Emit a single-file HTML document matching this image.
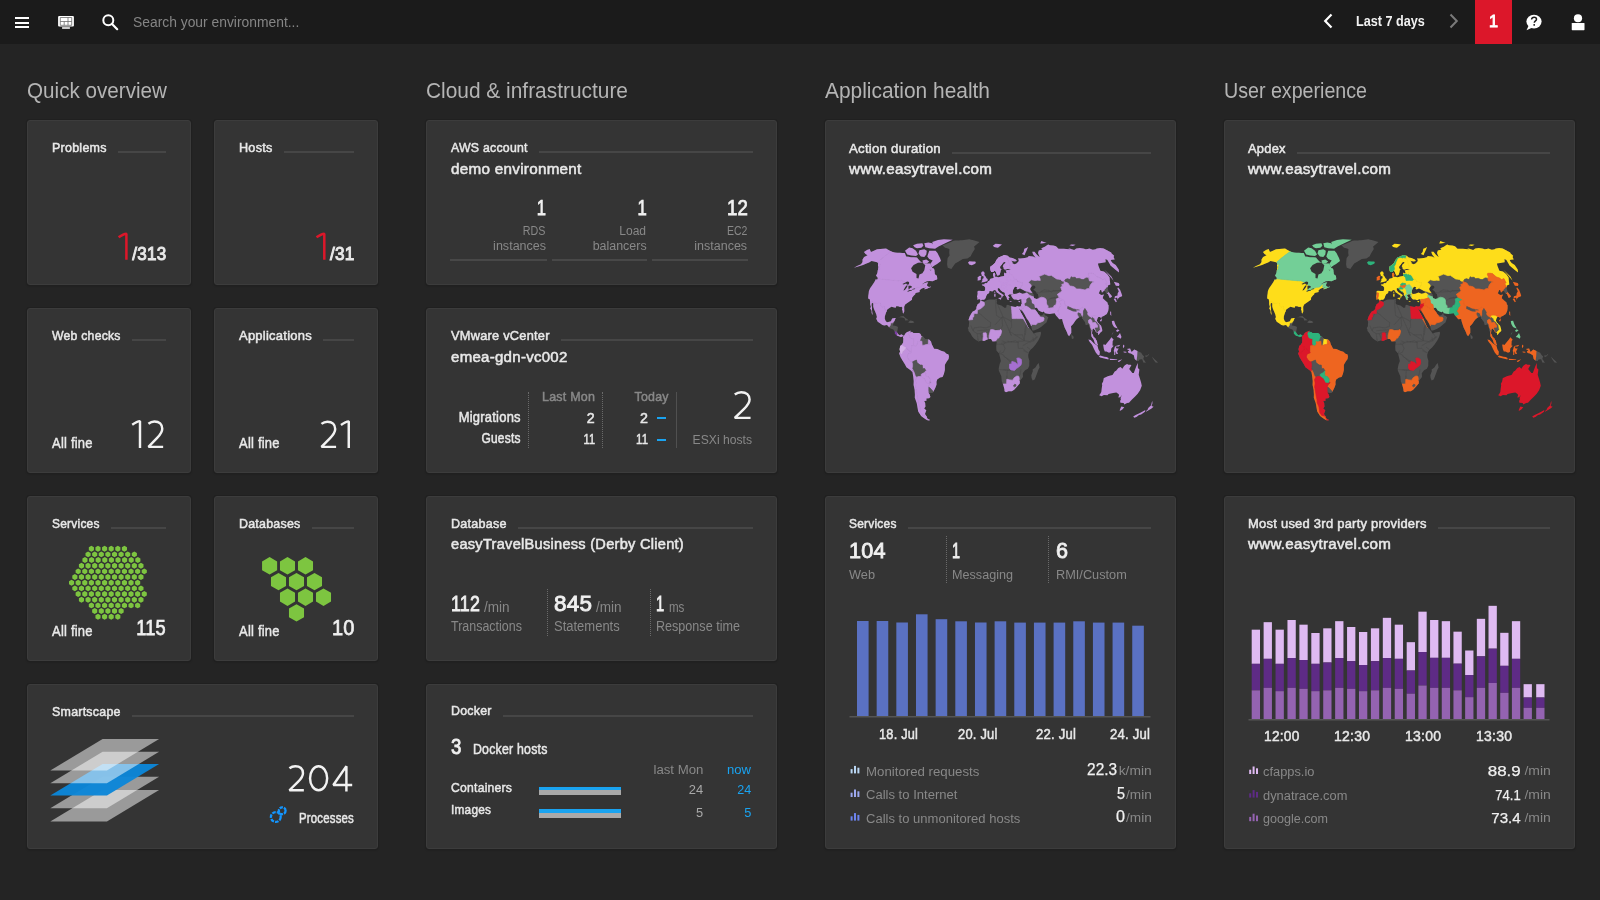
<!DOCTYPE html>
<html><head><meta charset="utf-8">
<style>
html,body{margin:0;padding:0;width:1600px;height:900px;overflow:hidden;background:#242424;}
body{position:relative;font-family:"Liberation Sans",sans-serif;}
.t{position:absolute;white-space:nowrap;}
.ab{position:absolute;}
.ln{position:absolute;}
#hdr{position:absolute;left:0;top:0;width:1600px;height:44px;background:#1b1b1b;}
.card{position:absolute;box-sizing:border-box;background:#343434;border-radius:3px;border:1px solid #3c3c3c;box-shadow:0 0 0 1px #202020, 0 1px 2px rgba(0,0,0,.3);}
</style></head><body>
<div id="hdr"></div>
<div class="ln" style="left:15px;top:17px;width:14px;height:2.2px;background:#fff"></div>
<div class="ln" style="left:15px;top:21.5px;width:14px;height:2.2px;background:#fff"></div>
<div class="ln" style="left:15px;top:26px;width:14px;height:2.2px;background:#fff"></div>
<svg class="ab" style="left:56px;top:14px" width="20" height="18" viewBox="0 0 20 18">
<rect x="2.1" y="1.9" width="15.8" height="10.6" rx="1" fill="#fff"/>
<path d="M4.3 3.5H15.7M4.3 7.5H15.7M4.3 11.3H15.7M4.3 3.5V11.3M15.7 3.5V11.3M12 3.5V11.3M8.2 7.5V11.3" stroke="#666" stroke-width="0.75" fill="none"/>
<rect x="6.1" y="13.1" width="7.8" height="1.8" fill="#ddd"/>
</svg>
<svg class="ab" style="left:100px;top:12px" width="22" height="20" viewBox="0 0 22 20">
<circle cx="8.3" cy="8.3" r="5" fill="none" stroke="#fff" stroke-width="2"/>
<path d="M11.8 11.8l5.4 5.4" stroke="#fff" stroke-width="2.2" stroke-linecap="round"/>
</svg>
<div class="t" style="top:14.70px;font-size:14.53px;line-height:14.53px;color:#858585;left:132.50px;transform:scaleX(0.9541) translateZ(0);transform-origin:0 0;">Search your environment...</div>
<svg class="ab" style="left:1318px;top:10px" width="20" height="22" viewBox="0 0 20 22">
<path d="M13.5 4.5L7.2 11l6.3 6.5" fill="none" stroke="#fff" stroke-width="2.2"/></svg>
<div class="t" style="top:13.75px;font-size:14.83px;line-height:14.83px;color:#f2f2f2;font-weight:bold;left:1356.20px;transform:scaleX(0.8531) translateZ(0);transform-origin:0 0;">Last 7 days</div>
<svg class="ab" style="left:1444px;top:10px" width="20" height="22" viewBox="0 0 20 22">
<path d="M6.5 4.5L12.8 11l-6.3 6.5" fill="none" stroke="#7a7a7a" stroke-width="2"/></svg>
<div class="ab" style="left:1475px;top:0;width:37px;height:44px;background:#dc172a"></div>
<div class="t" style="top:13.02px;font-size:16.28px;line-height:16.28px;color:#fff;letter-spacing:0.25px;left:1489.07px;transform:scaleX(1.0000) translateZ(0);transform-origin:50% 0;-webkit-text-stroke:0.85px #fff;">1</div>
<svg class="ab" style="left:1522px;top:11px" width="24" height="24" viewBox="0 0 24 24">
<ellipse cx="12" cy="10.6" rx="7.6" ry="6.8" fill="#fff"/>
<path d="M6.5 15l-2 4.3 5.5-2.6z" fill="#fff"/>
<path d="M9.6 8.6c0-1.5 1.1-2.4 2.5-2.4s2.4.9 2.4 2.1c0 1.6-2.2 1.7-2.2 3.4" fill="none" stroke="#1b1b1b" stroke-width="1.5"/>
<rect x="11.4" y="13.1" width="1.6" height="1.6" fill="#1b1b1b"/>
</svg>
<svg class="ab" style="left:1568px;top:12px" width="20" height="20" viewBox="0 0 20 20">
<circle cx="10" cy="6.25" r="4.1" fill="#fff"/>
<rect x="3.75" y="11" width="12.75" height="7.2" rx="0.6" fill="#fff"/>
</svg>
<div class="t" style="top:80.44px;font-size:21.22px;line-height:21.22px;color:#b4b4b4;left:27.00px;transform:scaleX(0.9731) translateZ(0);transform-origin:0 0;">Quick overview</div>
<div class="t" style="top:80.44px;font-size:21.22px;line-height:21.22px;color:#b4b4b4;left:426.00px;transform:scaleX(0.9843) translateZ(0);transform-origin:0 0;">Cloud &amp; infrastructure</div>
<div class="t" style="top:80.44px;font-size:21.22px;line-height:21.22px;color:#b4b4b4;left:825.00px;transform:scaleX(0.9849) translateZ(0);transform-origin:0 0;">Application health</div>
<div class="t" style="top:80.44px;font-size:21.22px;line-height:21.22px;color:#b4b4b4;left:1224.00px;transform:scaleX(0.9254) translateZ(0);transform-origin:0 0;">User experience</div>
<div class="card" style="left:27px;top:120px;width:164px;height:165px"></div>
<div class="card" style="left:214px;top:120px;width:164px;height:165px"></div>
<div class="card" style="left:27px;top:308px;width:164px;height:165px"></div>
<div class="card" style="left:214px;top:308px;width:164px;height:165px"></div>
<div class="card" style="left:27px;top:496px;width:164px;height:165px"></div>
<div class="card" style="left:214px;top:496px;width:164px;height:165px"></div>
<div class="card" style="left:27px;top:684px;width:351px;height:165px"></div>
<div class="card" style="left:426px;top:120px;width:351px;height:165px"></div>
<div class="card" style="left:426px;top:308px;width:351px;height:165px"></div>
<div class="card" style="left:426px;top:496px;width:351px;height:165px"></div>
<div class="card" style="left:426px;top:684px;width:351px;height:165px"></div>
<div class="card" style="left:825px;top:120px;width:351px;height:353px"></div>
<div class="card" style="left:825px;top:496px;width:351px;height:353px"></div>
<div class="card" style="left:1224px;top:120px;width:351px;height:353px"></div>
<div class="card" style="left:1224px;top:496px;width:351px;height:353px"></div>
<div class="t" style="top:140.93px;font-size:13.08px;line-height:13.08px;color:#e8e8e8;letter-spacing:0.25px;left:51.80px;transform:scaleX(0.9561) translateZ(0);transform-origin:0 0;-webkit-text-stroke:0.5px #e8e8e8;">Problems</div>
<div class="ln" style="left:117.8px;top:151px;width:48.2px;height:2px;background:#464646"></div>
<div class="t" style="top:140.93px;font-size:13.08px;line-height:13.08px;color:#e8e8e8;letter-spacing:0.25px;left:239.20px;transform:scaleX(0.9669) translateZ(0);transform-origin:0 0;-webkit-text-stroke:0.5px #e8e8e8;">Hosts</div>
<div class="ln" style="left:284.0px;top:151px;width:70.0px;height:2px;background:#464646"></div>
<div class="t" style="top:243.76px;font-size:19.19px;line-height:19.19px;color:#e8e8e8;letter-spacing:0.25px;left:127.71px;transform:scaleX(0.8873) translateZ(0);transform-origin:100% 0;-webkit-text-stroke:1.0px #e8e8e8;">/313</div>
<div class="t" style="top:243.76px;font-size:19.19px;line-height:19.19px;color:#e8e8e8;letter-spacing:0.25px;left:326.83px;transform:scaleX(0.8943) translateZ(0);transform-origin:100% 0;-webkit-text-stroke:1.0px #e8e8e8;">/31</div>
<div class="t" style="top:329.43px;font-size:13.08px;line-height:13.08px;color:#e8e8e8;letter-spacing:0.25px;left:51.50px;transform:scaleX(0.9350) translateZ(0);transform-origin:0 0;-webkit-text-stroke:0.5px #e8e8e8;">Web checks</div>
<div class="ln" style="left:131.5px;top:339px;width:34.5px;height:2px;background:#464646"></div>
<div class="t" style="top:329.43px;font-size:13.08px;line-height:13.08px;color:#e8e8e8;letter-spacing:0.25px;left:239.20px;transform:scaleX(0.9920) translateZ(0);transform-origin:0 0;-webkit-text-stroke:0.5px #e8e8e8;">Applications</div>
<div class="ln" style="left:323.4px;top:339px;width:30.600000000000023px;height:2px;background:#464646"></div>
<div class="t" style="top:435.08px;font-size:15.26px;line-height:15.26px;color:#e8e8e8;letter-spacing:0.25px;left:51.50px;transform:scaleX(0.8516) translateZ(0);transform-origin:0 0;-webkit-text-stroke:0.5px #e8e8e8;">All fine</div>
<div class="t" style="top:435.08px;font-size:15.26px;line-height:15.26px;color:#e8e8e8;letter-spacing:0.25px;left:239.20px;transform:scaleX(0.8516) translateZ(0);transform-origin:0 0;-webkit-text-stroke:0.5px #e8e8e8;">All fine</div>
<div class="t" style="top:516.93px;font-size:13.08px;line-height:13.08px;color:#e8e8e8;letter-spacing:0.25px;left:51.50px;transform:scaleX(0.9150) translateZ(0);transform-origin:0 0;-webkit-text-stroke:0.5px #e8e8e8;">Services</div>
<div class="ln" style="left:110.5px;top:527px;width:55.5px;height:2px;background:#464646"></div>
<div class="t" style="top:516.93px;font-size:13.08px;line-height:13.08px;color:#e8e8e8;letter-spacing:0.25px;left:239.20px;transform:scaleX(0.9498) translateZ(0);transform-origin:0 0;-webkit-text-stroke:0.5px #e8e8e8;">Databases</div>
<div class="ln" style="left:312.0px;top:527px;width:42.0px;height:2px;background:#464646"></div>
<div class="t" style="top:622.58px;font-size:15.26px;line-height:15.26px;color:#e8e8e8;letter-spacing:0.25px;left:51.50px;transform:scaleX(0.8516) translateZ(0);transform-origin:0 0;-webkit-text-stroke:0.5px #e8e8e8;">All fine</div>
<div class="t" style="top:622.58px;font-size:15.26px;line-height:15.26px;color:#e8e8e8;letter-spacing:0.25px;left:239.20px;transform:scaleX(0.8516) translateZ(0);transform-origin:0 0;-webkit-text-stroke:0.5px #e8e8e8;">All fine</div>
<div class="t" style="top:616.31px;font-size:22.67px;line-height:22.67px;color:#f0f0f0;letter-spacing:0.25px;left:129.35px;transform:scaleX(0.8049) translateZ(0);transform-origin:100% 0;-webkit-text-stroke:0.75px #f0f0f0;">115</div>
<div class="t" style="top:616.31px;font-size:22.67px;line-height:22.67px;color:#f0f0f0;letter-spacing:0.25px;left:328.53px;transform:scaleX(0.8833) translateZ(0);transform-origin:100% 0;-webkit-text-stroke:0.75px #f0f0f0;">10</div>
<svg class="ab" style="left:0;top:0" width="400" height="900"><path d="M91.38 545.75L88.83 547.23L88.83 550.18L91.38 551.65L93.94 550.18L93.94 547.23ZM97.99 545.75L95.44 547.23L95.44 550.18L97.99 551.65L100.55 550.18L100.55 547.23ZM104.60 545.75L102.05 547.23L102.05 550.18L104.60 551.65L107.16 550.18L107.16 547.23ZM111.21 545.75L108.66 547.23L108.66 550.18L111.21 551.65L113.77 550.18L113.77 547.23ZM117.82 545.75L115.27 547.23L115.27 550.18L117.82 551.65L120.38 550.18L120.38 547.23ZM124.43 545.75L121.88 547.23L121.88 550.18L124.43 551.65L126.99 550.18L126.99 547.23ZM88.08 551.42L85.52 552.89L85.52 555.85L88.08 557.32L90.63 555.85L90.63 552.89ZM94.69 551.42L92.13 552.89L92.13 555.85L94.69 557.32L97.24 555.85L97.24 552.89ZM101.30 551.42L98.74 552.89L98.74 555.85L101.30 557.32L103.85 555.85L103.85 552.89ZM107.91 551.42L105.35 552.89L105.35 555.85L107.91 557.32L110.46 555.85L110.46 552.89ZM114.52 551.42L111.96 552.89L111.96 555.85L114.52 557.32L117.07 555.85L117.07 552.89ZM121.13 551.42L118.57 552.89L118.57 555.85L121.13 557.32L123.68 555.85L123.68 552.89ZM127.74 551.42L125.18 552.89L125.18 555.85L127.74 557.32L130.29 555.85L130.29 552.89ZM134.35 551.42L131.79 552.89L131.79 555.85L134.35 557.32L136.90 555.85L136.90 552.89ZM84.96 557.09L82.41 558.57L82.41 561.52L84.96 562.99L87.52 561.52L87.52 558.57ZM91.57 557.09L89.02 558.57L89.02 561.52L91.57 562.99L94.13 561.52L94.13 558.57ZM98.18 557.09L95.63 558.57L95.63 561.52L98.18 562.99L100.74 561.52L100.74 558.57ZM104.79 557.09L102.24 558.57L102.24 561.52L104.79 562.99L107.35 561.52L107.35 558.57ZM111.40 557.09L108.85 558.57L108.85 561.52L111.40 562.99L113.96 561.52L113.96 558.57ZM118.01 557.09L115.46 558.57L115.46 561.52L118.01 562.99L120.57 561.52L120.57 558.57ZM124.62 557.09L122.07 558.57L122.07 561.52L124.62 562.99L127.18 561.52L127.18 558.57ZM131.23 557.09L128.68 558.57L128.68 561.52L131.23 562.99L133.79 561.52L133.79 558.57ZM137.84 557.09L135.29 558.57L135.29 561.52L137.84 562.99L140.40 561.52L140.40 558.57ZM81.47 562.76L78.91 564.24L78.91 567.19L81.47 568.66L84.02 567.19L84.02 564.24ZM88.08 562.76L85.52 564.24L85.52 567.19L88.08 568.66L90.63 567.19L90.63 564.24ZM94.69 562.76L92.13 564.24L92.13 567.19L94.69 568.66L97.24 567.19L97.24 564.24ZM101.30 562.76L98.74 564.24L98.74 567.19L101.30 568.66L103.85 567.19L103.85 564.24ZM107.91 562.76L105.35 564.24L105.35 567.19L107.91 568.66L110.46 567.19L110.46 564.24ZM114.52 562.76L111.96 564.24L111.96 567.19L114.52 568.66L117.07 567.19L117.07 564.24ZM121.13 562.76L118.57 564.24L118.57 567.19L121.13 568.66L123.68 567.19L123.68 564.24ZM127.74 562.76L125.18 564.24L125.18 567.19L127.74 568.66L130.29 567.19L130.29 564.24ZM134.35 562.76L131.79 564.24L131.79 567.19L134.35 568.66L136.90 567.19L136.90 564.24ZM140.96 562.76L138.40 564.24L138.40 567.19L140.96 568.66L143.51 567.19L143.51 564.24ZM78.16 568.43L75.61 569.90L75.61 572.86L78.16 574.33L80.72 572.86L80.72 569.90ZM84.77 568.43L82.22 569.90L82.22 572.86L84.77 574.33L87.33 572.86L87.33 569.90ZM91.38 568.43L88.83 569.90L88.83 572.86L91.38 574.33L93.94 572.86L93.94 569.90ZM97.99 568.43L95.44 569.90L95.44 572.86L97.99 574.33L100.55 572.86L100.55 569.90ZM104.60 568.43L102.05 569.90L102.05 572.86L104.60 574.33L107.16 572.86L107.16 569.90ZM111.21 568.43L108.66 569.90L108.66 572.86L111.21 574.33L113.77 572.86L113.77 569.90ZM117.82 568.43L115.27 569.90L115.27 572.86L117.82 574.33L120.38 572.86L120.38 569.90ZM124.43 568.43L121.88 569.90L121.88 572.86L124.43 574.33L126.99 572.86L126.99 569.90ZM131.04 568.43L128.49 569.90L128.49 572.86L131.04 574.33L133.60 572.86L133.60 569.90ZM137.65 568.43L135.10 569.90L135.10 572.86L137.65 574.33L140.21 572.86L140.21 569.90ZM144.26 568.43L141.71 569.90L141.71 572.86L144.26 574.33L146.82 572.86L146.82 569.90ZM74.86 574.10L72.30 575.58L72.30 578.53L74.86 580.00L77.41 578.53L77.41 575.58ZM81.47 574.10L78.91 575.58L78.91 578.53L81.47 580.00L84.02 578.53L84.02 575.58ZM88.08 574.10L85.52 575.58L85.52 578.53L88.08 580.00L90.63 578.53L90.63 575.58ZM94.69 574.10L92.13 575.58L92.13 578.53L94.69 580.00L97.24 578.53L97.24 575.58ZM101.30 574.10L98.74 575.58L98.74 578.53L101.30 580.00L103.85 578.53L103.85 575.58ZM107.91 574.10L105.35 575.58L105.35 578.53L107.91 580.00L110.46 578.53L110.46 575.58ZM114.52 574.10L111.96 575.58L111.96 578.53L114.52 580.00L117.07 578.53L117.07 575.58ZM121.13 574.10L118.57 575.58L118.57 578.53L121.13 580.00L123.68 578.53L123.68 575.58ZM127.74 574.10L125.18 575.58L125.18 578.53L127.74 580.00L130.29 578.53L130.29 575.58ZM134.35 574.10L131.79 575.58L131.79 578.53L134.35 580.00L136.90 578.53L136.90 575.58ZM140.96 574.10L138.40 575.58L138.40 578.53L140.96 580.00L143.51 578.53L143.51 575.58ZM71.55 579.77L69.00 581.25L69.00 584.20L71.55 585.67L74.11 584.20L74.11 581.25ZM78.16 579.77L75.61 581.25L75.61 584.20L78.16 585.67L80.72 584.20L80.72 581.25ZM84.77 579.77L82.22 581.25L82.22 584.20L84.77 585.67L87.33 584.20L87.33 581.25ZM91.38 579.77L88.83 581.25L88.83 584.20L91.38 585.67L93.94 584.20L93.94 581.25ZM97.99 579.77L95.44 581.25L95.44 584.20L97.99 585.67L100.55 584.20L100.55 581.25ZM104.60 579.77L102.05 581.25L102.05 584.20L104.60 585.67L107.16 584.20L107.16 581.25ZM111.21 579.77L108.66 581.25L108.66 584.20L111.21 585.67L113.77 584.20L113.77 581.25ZM117.82 579.77L115.27 581.25L115.27 584.20L117.82 585.67L120.38 584.20L120.38 581.25ZM124.43 579.77L121.88 581.25L121.88 584.20L124.43 585.67L126.99 584.20L126.99 581.25ZM131.04 579.77L128.49 581.25L128.49 584.20L131.04 585.67L133.60 584.20L133.60 581.25ZM137.65 579.77L135.10 581.25L135.10 584.20L137.65 585.67L140.21 584.20L140.21 581.25ZM74.86 585.44L72.30 586.92L72.30 589.87L74.86 591.34L77.41 589.87L77.41 586.92ZM81.47 585.44L78.91 586.92L78.91 589.87L81.47 591.34L84.02 589.87L84.02 586.92ZM88.08 585.44L85.52 586.92L85.52 589.87L88.08 591.34L90.63 589.87L90.63 586.92ZM94.69 585.44L92.13 586.92L92.13 589.87L94.69 591.34L97.24 589.87L97.24 586.92ZM101.30 585.44L98.74 586.92L98.74 589.87L101.30 591.34L103.85 589.87L103.85 586.92ZM107.91 585.44L105.35 586.92L105.35 589.87L107.91 591.34L110.46 589.87L110.46 586.92ZM114.52 585.44L111.96 586.92L111.96 589.87L114.52 591.34L117.07 589.87L117.07 586.92ZM121.13 585.44L118.57 586.92L118.57 589.87L121.13 591.34L123.68 589.87L123.68 586.92ZM127.74 585.44L125.18 586.92L125.18 589.87L127.74 591.34L130.29 589.87L130.29 586.92ZM134.35 585.44L131.79 586.92L131.79 589.87L134.35 591.34L136.90 589.87L136.90 586.92ZM140.96 585.44L138.40 586.92L138.40 589.87L140.96 591.34L143.51 589.87L143.51 586.92ZM78.16 591.11L75.61 592.59L75.61 595.54L78.16 597.01L80.72 595.54L80.72 592.59ZM84.77 591.11L82.22 592.59L82.22 595.54L84.77 597.01L87.33 595.54L87.33 592.59ZM91.38 591.11L88.83 592.59L88.83 595.54L91.38 597.01L93.94 595.54L93.94 592.59ZM97.99 591.11L95.44 592.59L95.44 595.54L97.99 597.01L100.55 595.54L100.55 592.59ZM104.60 591.11L102.05 592.59L102.05 595.54L104.60 597.01L107.16 595.54L107.16 592.59ZM111.21 591.11L108.66 592.59L108.66 595.54L111.21 597.01L113.77 595.54L113.77 592.59ZM117.82 591.11L115.27 592.59L115.27 595.54L117.82 597.01L120.38 595.54L120.38 592.59ZM124.43 591.11L121.88 592.59L121.88 595.54L124.43 597.01L126.99 595.54L126.99 592.59ZM131.04 591.11L128.49 592.59L128.49 595.54L131.04 597.01L133.60 595.54L133.60 592.59ZM137.65 591.11L135.10 592.59L135.10 595.54L137.65 597.01L140.21 595.54L140.21 592.59ZM144.26 591.11L141.71 592.59L141.71 595.54L144.26 597.01L146.82 595.54L146.82 592.59ZM81.47 596.78L78.91 598.25L78.91 601.21L81.47 602.68L84.02 601.21L84.02 598.25ZM88.08 596.78L85.52 598.25L85.52 601.21L88.08 602.68L90.63 601.21L90.63 598.25ZM94.69 596.78L92.13 598.25L92.13 601.21L94.69 602.68L97.24 601.21L97.24 598.25ZM101.30 596.78L98.74 598.25L98.74 601.21L101.30 602.68L103.85 601.21L103.85 598.25ZM107.91 596.78L105.35 598.25L105.35 601.21L107.91 602.68L110.46 601.21L110.46 598.25ZM114.52 596.78L111.96 598.25L111.96 601.21L114.52 602.68L117.07 601.21L117.07 598.25ZM121.13 596.78L118.57 598.25L118.57 601.21L121.13 602.68L123.68 601.21L123.68 598.25ZM127.74 596.78L125.18 598.25L125.18 601.21L127.74 602.68L130.29 601.21L130.29 598.25ZM134.35 596.78L131.79 598.25L131.79 601.21L134.35 602.68L136.90 601.21L136.90 598.25ZM140.96 596.78L138.40 598.25L138.40 601.21L140.96 602.68L143.51 601.21L143.51 598.25ZM91.38 602.45L88.83 603.93L88.83 606.88L91.38 608.35L93.94 606.88L93.94 603.93ZM97.99 602.45L95.44 603.93L95.44 606.88L97.99 608.35L100.55 606.88L100.55 603.93ZM104.60 602.45L102.05 603.93L102.05 606.88L104.60 608.35L107.16 606.88L107.16 603.93ZM111.21 602.45L108.66 603.93L108.66 606.88L111.21 608.35L113.77 606.88L113.77 603.93ZM117.82 602.45L115.27 603.93L115.27 606.88L117.82 608.35L120.38 606.88L120.38 603.93ZM124.43 602.45L121.88 603.93L121.88 606.88L124.43 608.35L126.99 606.88L126.99 603.93ZM131.04 602.45L128.49 603.93L128.49 606.88L131.04 608.35L133.60 606.88L133.60 603.93ZM137.65 602.45L135.10 603.93L135.10 606.88L137.65 608.35L140.21 606.88L140.21 603.93ZM94.69 608.12L92.13 609.60L92.13 612.55L94.69 614.02L97.24 612.55L97.24 609.60ZM101.30 608.12L98.74 609.60L98.74 612.55L101.30 614.02L103.85 612.55L103.85 609.60ZM107.91 608.12L105.35 609.60L105.35 612.55L107.91 614.02L110.46 612.55L110.46 609.60ZM114.52 608.12L111.96 609.60L111.96 612.55L114.52 614.02L117.07 612.55L117.07 609.60ZM121.13 608.12L118.57 609.60L118.57 612.55L121.13 614.02L123.68 612.55L123.68 609.60ZM97.99 613.79L95.44 615.26L95.44 618.22L97.99 619.69L100.55 618.22L100.55 615.26ZM104.60 613.79L102.05 615.26L102.05 618.22L104.60 619.69L107.16 618.22L107.16 615.26ZM111.21 613.79L108.66 615.26L108.66 618.22L111.21 619.69L113.77 618.22L113.77 615.26ZM117.82 613.79L115.27 615.26L115.27 618.22L117.82 619.69L120.38 618.22L120.38 615.26Z" fill="#7dc540"/></svg>
<svg class="ab" style="left:0;top:0" width="400" height="900"><path d="M269.60 557.10L262.07 561.45L262.07 570.15L269.60 574.50L277.13 570.15L277.13 561.45ZM287.50 557.10L279.97 561.45L279.97 570.15L287.50 574.50L295.03 570.15L295.03 561.45ZM305.50 557.10L297.97 561.45L297.97 570.15L305.50 574.50L313.03 570.15L313.03 561.45ZM278.50 572.90L270.97 577.25L270.97 585.95L278.50 590.30L286.03 585.95L286.03 577.25ZM296.50 572.90L288.97 577.25L288.97 585.95L296.50 590.30L304.03 585.95L304.03 577.25ZM314.50 572.90L306.97 577.25L306.97 585.95L314.50 590.30L322.03 585.95L322.03 577.25ZM287.50 588.50L279.97 592.85L279.97 601.55L287.50 605.90L295.03 601.55L295.03 592.85ZM305.50 588.50L297.97 592.85L297.97 601.55L305.50 605.90L313.03 601.55L313.03 592.85ZM323.50 588.50L315.97 592.85L315.97 601.55L323.50 605.90L331.03 601.55L331.03 592.85ZM296.50 604.20L288.97 608.55L288.97 617.25L296.50 621.60L304.03 617.25L304.03 608.55Z" fill="#7dc540"/></svg>
<div class="t" style="top:704.93px;font-size:13.08px;line-height:13.08px;color:#e8e8e8;letter-spacing:0.25px;left:51.50px;transform:scaleX(0.9508) translateZ(0);transform-origin:0 0;-webkit-text-stroke:0.5px #e8e8e8;">Smartscape</div>
<div class="ln" style="left:131.5px;top:715px;width:222.5px;height:2px;background:#464646"></div>
<svg class="ab" style="left:0;top:0" width="400" height="900"><path d="M102.6 790.10L159.1 790.10L106.9 821.60L50.3 821.60Z" fill="#fff" fill-opacity=".5"/><path d="M102.6 776.80L159.1 776.80L106.9 808.30L50.3 808.30Z" fill="#fff" fill-opacity=".5"/><path d="M102.6 764.00L159.1 764.00L106.9 795.50L50.3 795.50Z" fill="#0b86d8" fill-opacity=".96"/><path d="M102.6 751.70L159.1 751.70L106.9 783.20L50.3 783.20Z" fill="#fff" fill-opacity=".5"/><path d="M102.6 738.90L159.1 738.90L106.9 770.40L50.3 770.40Z" fill="#fff" fill-opacity=".5"/></svg>
<svg class="ab" style="left:262px;top:800px" width="30" height="30" viewBox="262 800 30 30"><circle cx="275.8" cy="817" r="4.9" fill="none" stroke="#1496ff" stroke-width="2.3" stroke-dasharray="3.6 1.1"/><circle cx="282.2" cy="810.8" r="3.4" fill="none" stroke="#1496ff" stroke-width="2.3" stroke-dasharray="3.3 1.05"/></svg>
<div class="t" style="top:810.70px;font-size:14.53px;line-height:14.53px;color:#e8e8e8;letter-spacing:0.25px;left:284.14px;transform:scaleX(0.7873) translateZ(0);transform-origin:100% 0;-webkit-text-stroke:0.5px #e8e8e8;">Processes</div>
<div class="t" style="top:140.93px;font-size:13.08px;line-height:13.08px;color:#e8e8e8;letter-spacing:0.25px;left:450.50px;transform:scaleX(0.9414) translateZ(0);transform-origin:0 0;-webkit-text-stroke:0.5px #e8e8e8;">AWS account</div>
<div class="ln" style="left:538.5px;top:151px;width:214.5px;height:2px;background:#464646"></div>
<div class="t" style="top:162.69px;font-size:13.95px;line-height:13.95px;color:#e8e8e8;letter-spacing:0.25px;left:450.50px;transform:scaleX(1.0937) translateZ(0);transform-origin:0 0;-webkit-text-stroke:0.5px #e8e8e8;">demo environment</div>
<div class="t" style="top:196.94px;font-size:21.22px;line-height:21.22px;color:#f0f0f0;letter-spacing:0.25px;left:534.20px;transform:scaleX(0.7795) translateZ(0);transform-origin:100% 0;-webkit-text-stroke:0.75px #f0f0f0;">1</div>
<div class="t" style="top:223.76px;font-size:13.52px;line-height:13.52px;color:#888888;left:517.46px;transform:scaleX(0.7954) translateZ(0);transform-origin:100% 0;">RDS</div>
<div class="t" style="top:239.46px;font-size:13.52px;line-height:13.52px;color:#888888;left:488.89px;transform:scaleX(0.9281) translateZ(0);transform-origin:100% 0;">instances</div>
<div class="t" style="top:196.94px;font-size:21.22px;line-height:21.22px;color:#f0f0f0;letter-spacing:0.25px;left:634.70px;transform:scaleX(0.7880) translateZ(0);transform-origin:100% 0;-webkit-text-stroke:0.75px #f0f0f0;">1</div>
<div class="t" style="top:223.76px;font-size:13.52px;line-height:13.52px;color:#888888;left:616.43px;transform:scaleX(0.8912) translateZ(0);transform-origin:100% 0;">Load</div>
<div class="t" style="top:239.46px;font-size:13.52px;line-height:13.52px;color:#888888;left:587.89px;transform:scaleX(0.9196) translateZ(0);transform-origin:100% 0;">balancers</div>
<div class="t" style="top:196.94px;font-size:21.22px;line-height:21.22px;color:#f0f0f0;letter-spacing:0.25px;left:723.65px;transform:scaleX(0.8803) translateZ(0);transform-origin:100% 0;-webkit-text-stroke:0.75px #f0f0f0;">12</div>
<div class="t" style="top:223.76px;font-size:13.52px;line-height:13.52px;color:#888888;left:721.20px;transform:scaleX(0.7758) translateZ(0);transform-origin:100% 0;">EC2</div>
<div class="t" style="top:239.46px;font-size:13.52px;line-height:13.52px;color:#888888;left:690.39px;transform:scaleX(0.9246) translateZ(0);transform-origin:100% 0;">instances</div>
<div class="ln" style="left:450px;top:258.5px;width:96.5px;height:2px;background:#484848"></div>
<div class="ln" style="left:551.5px;top:258.5px;width:95.5px;height:2px;background:#484848"></div>
<div class="ln" style="left:652px;top:258.5px;width:96px;height:2px;background:#484848"></div>
<div class="t" style="top:329.43px;font-size:13.08px;line-height:13.08px;color:#e8e8e8;letter-spacing:0.25px;left:450.50px;transform:scaleX(0.9785) translateZ(0);transform-origin:0 0;-webkit-text-stroke:0.5px #e8e8e8;">VMware vCenter</div>
<div class="ln" style="left:560.5px;top:339px;width:192.5px;height:2px;background:#464646"></div>
<div class="t" style="top:351.19px;font-size:13.95px;line-height:13.95px;color:#e8e8e8;letter-spacing:0.25px;left:450.50px;transform:scaleX(1.0790) translateZ(0);transform-origin:0 0;-webkit-text-stroke:0.5px #e8e8e8;">emea-gdn-vc002</div>
<div class="t" style="top:390.43px;font-size:13.66px;line-height:13.66px;color:#888888;letter-spacing:0.25px;left:536.65px;transform:scaleX(0.9146) translateZ(0);transform-origin:100% 0;-webkit-text-stroke:0.5px #888888;">Last Mon</div>
<div class="t" style="top:390.43px;font-size:13.66px;line-height:13.66px;color:#888888;letter-spacing:0.25px;left:631.14px;transform:scaleX(0.9077) translateZ(0);transform-origin:100% 0;-webkit-text-stroke:0.5px #888888;">Today</div>
<div class="t" style="top:410.79px;font-size:13.95px;line-height:13.95px;color:#e8e8e8;letter-spacing:0.25px;left:453.98px;transform:scaleX(0.9307) translateZ(0);transform-origin:100% 0;-webkit-text-stroke:0.5px #e8e8e8;">Migrations</div>
<div class="t" style="top:432.19px;font-size:13.95px;line-height:13.95px;color:#e8e8e8;letter-spacing:0.25px;left:475.15px;transform:scaleX(0.8580) translateZ(0);transform-origin:100% 0;-webkit-text-stroke:0.5px #e8e8e8;">Guests</div>
<div class="t" style="top:410.54px;font-size:14.24px;line-height:14.24px;color:#e8e8e8;letter-spacing:0.25px;left:586.68px;transform:scaleX(1.0000) translateZ(0);transform-origin:100% 0;-webkit-text-stroke:0.5px #e8e8e8;">2</div>
<div class="t" style="top:431.94px;font-size:14.24px;line-height:14.24px;color:#e8e8e8;letter-spacing:0.25px;left:579.56px;transform:scaleX(0.7714) translateZ(0);transform-origin:100% 0;-webkit-text-stroke:0.5px #e8e8e8;">11</div>
<div class="t" style="top:410.54px;font-size:14.24px;line-height:14.24px;color:#e8e8e8;letter-spacing:0.25px;left:640.08px;transform:scaleX(1.0000) translateZ(0);transform-origin:100% 0;-webkit-text-stroke:0.5px #e8e8e8;">2</div>
<div class="t" style="top:431.94px;font-size:14.24px;line-height:14.24px;color:#e8e8e8;letter-spacing:0.25px;left:632.96px;transform:scaleX(0.7980) translateZ(0);transform-origin:100% 0;-webkit-text-stroke:0.5px #e8e8e8;">11</div>
<div class="ln" style="left:656.5px;top:417px;width:9px;height:2px;background:#1aa3f0"></div>
<div class="ln" style="left:656.5px;top:438.5px;width:9px;height:2px;background:#1aa3f0"></div>
<div class="ln" style="left:527.5px;top:392px;width:0;height:56px;border-left:1px dotted #6a6a6a"></div>
<div class="ln" style="left:601.5px;top:392px;width:0;height:56px;border-left:1px dotted #6a6a6a"></div>
<div class="ln" style="left:676px;top:392px;width:1px;height:56px;background:#505050"></div>
<div class="t" style="top:432.93px;font-size:13.08px;line-height:13.08px;color:#888888;left:688.42px;transform:scaleX(0.9284) translateZ(0);transform-origin:100% 0;">ESXi hosts</div>
<div class="t" style="top:516.93px;font-size:13.08px;line-height:13.08px;color:#e8e8e8;letter-spacing:0.25px;left:450.50px;transform:scaleX(0.9610) translateZ(0);transform-origin:0 0;-webkit-text-stroke:0.5px #e8e8e8;">Database</div>
<div class="ln" style="left:517.5px;top:527px;width:235.5px;height:2px;background:#464646"></div>
<div class="t" style="top:538.19px;font-size:13.95px;line-height:13.95px;color:#e8e8e8;letter-spacing:0.25px;left:450.50px;transform:scaleX(1.0482) translateZ(0);transform-origin:0 0;-webkit-text-stroke:0.5px #e8e8e8;">easyTravelBusiness (Derby Client)</div>
<div class="t" style="top:593.30px;font-size:22.09px;line-height:22.09px;color:#f0f0f0;letter-spacing:0.25px;left:450.60px;transform:scaleX(0.8062) translateZ(0);transform-origin:0 0;-webkit-text-stroke:0.85px #f0f0f0;">112</div>
<div class="t" style="top:599.20px;font-size:15.12px;line-height:15.12px;color:#888888;left:484.40px;transform:scaleX(0.8964) translateZ(0);transform-origin:0 0;">/min</div>
<div class="t" style="top:620.19px;font-size:13.95px;line-height:13.95px;color:#888888;left:450.60px;transform:scaleX(0.8946) translateZ(0);transform-origin:0 0;">Transactions</div>
<div class="t" style="top:593.30px;font-size:22.09px;line-height:22.09px;color:#f0f0f0;letter-spacing:0.25px;left:553.60px;transform:scaleX(1.0171) translateZ(0);transform-origin:0 0;-webkit-text-stroke:0.85px #f0f0f0;">845</div>
<div class="t" style="top:599.20px;font-size:15.12px;line-height:15.12px;color:#888888;left:596.40px;transform:scaleX(0.8964) translateZ(0);transform-origin:0 0;">/min</div>
<div class="t" style="top:620.19px;font-size:13.95px;line-height:13.95px;color:#888888;left:553.60px;transform:scaleX(0.9323) translateZ(0);transform-origin:0 0;">Statements</div>
<div class="t" style="top:593.30px;font-size:22.09px;line-height:22.09px;color:#f0f0f0;letter-spacing:0.25px;left:656.40px;transform:scaleX(0.6673) translateZ(0);transform-origin:0 0;-webkit-text-stroke:0.85px #f0f0f0;">1</div>
<div class="t" style="top:599.20px;font-size:15.12px;line-height:15.12px;color:#888888;left:668.60px;transform:scaleX(0.7642) translateZ(0);transform-origin:0 0;">ms</div>
<div class="t" style="top:620.19px;font-size:13.95px;line-height:13.95px;color:#888888;left:656.40px;transform:scaleX(0.9025) translateZ(0);transform-origin:0 0;">Response time</div>
<div class="ln" style="left:547px;top:589px;width:0;height:47px;border-left:1px dotted #6a6a6a"></div>
<div class="ln" style="left:649.5px;top:589px;width:0;height:47px;border-left:1px dotted #6a6a6a"></div>
<div class="t" style="top:704.43px;font-size:13.08px;line-height:13.08px;color:#e8e8e8;letter-spacing:0.25px;left:450.50px;transform:scaleX(0.9488) translateZ(0);transform-origin:0 0;-webkit-text-stroke:0.5px #e8e8e8;">Docker</div>
<div class="ln" style="left:502.5px;top:715px;width:250.5px;height:2px;background:#464646"></div>
<div class="t" style="top:735.41px;font-size:22.67px;line-height:22.67px;color:#f0f0f0;letter-spacing:0.25px;left:450.60px;transform:scaleX(0.8247) translateZ(0);transform-origin:0 0;-webkit-text-stroke:0.85px #f0f0f0;">3</div>
<div class="t" style="top:742.79px;font-size:13.95px;line-height:13.95px;color:#e8e8e8;letter-spacing:0.25px;left:472.60px;transform:scaleX(0.8839) translateZ(0);transform-origin:0 0;-webkit-text-stroke:0.5px #e8e8e8;">Docker hosts</div>
<div class="t" style="top:763.33px;font-size:13.08px;line-height:13.08px;color:#888888;left:653.56px;transform:scaleX(1.0113) translateZ(0);transform-origin:100% 0;">last Mon</div>
<div class="t" style="top:763.33px;font-size:13.08px;line-height:13.08px;color:#1aa3f0;left:727.40px;transform:scaleX(1.0001) translateZ(0);transform-origin:100% 0;">now</div>
<div class="t" style="top:780.83px;font-size:13.66px;line-height:13.66px;color:#e8e8e8;letter-spacing:0.25px;left:450.60px;transform:scaleX(0.8928) translateZ(0);transform-origin:0 0;-webkit-text-stroke:0.5px #e8e8e8;">Containers</div>
<div class="t" style="top:802.83px;font-size:13.66px;line-height:13.66px;color:#e8e8e8;letter-spacing:0.25px;left:450.60px;transform:scaleX(0.8685) translateZ(0);transform-origin:0 0;-webkit-text-stroke:0.5px #e8e8e8;">Images</div>
<div class="ln" style="left:539px;top:786.5px;width:81.5px;height:3.5px;background:#1aa3f0"></div>
<div class="ln" style="left:539px;top:790px;width:81.5px;height:5px;background:#a9a9a9"></div>
<div class="ln" style="left:539px;top:809px;width:81.5px;height:3.5px;background:#1aa3f0"></div>
<div class="ln" style="left:539px;top:812.5px;width:81.5px;height:5px;background:#a9a9a9"></div>
<div class="t" style="top:784.17px;font-size:12.79px;line-height:12.79px;color:#a8a8a8;left:688.77px;transform:scaleX(1.0121) translateZ(0);transform-origin:100% 0;">24</div>
<div class="t" style="top:784.17px;font-size:12.79px;line-height:12.79px;color:#1aa3f0;left:737.17px;transform:scaleX(0.9840) translateZ(0);transform-origin:100% 0;">24</div>
<div class="t" style="top:806.57px;font-size:12.79px;line-height:12.79px;color:#a8a8a8;left:695.89px;transform:scaleX(1.0000) translateZ(0);transform-origin:100% 0;">5</div>
<div class="t" style="top:806.57px;font-size:12.79px;line-height:12.79px;color:#1aa3f0;left:744.29px;transform:scaleX(1.0000) translateZ(0);transform-origin:100% 0;">5</div>
<div class="t" style="top:141.53px;font-size:13.08px;line-height:13.08px;color:#e8e8e8;letter-spacing:0.25px;left:849.00px;transform:scaleX(1.0092) translateZ(0);transform-origin:0 0;-webkit-text-stroke:0.5px #e8e8e8;">Action duration</div>
<div class="ln" style="left:952.1px;top:152px;width:199.30000000000007px;height:2px;background:#464646"></div>
<div class="t" style="top:162.79px;font-size:13.95px;line-height:13.95px;color:#e8e8e8;letter-spacing:0.25px;left:849.00px;transform:scaleX(1.0881) translateZ(0);transform-origin:0 0;-webkit-text-stroke:0.5px #e8e8e8;">www.easytravel.com</div>
<div class="t" style="top:141.53px;font-size:13.08px;line-height:13.08px;color:#e8e8e8;letter-spacing:0.25px;left:1248.00px;transform:scaleX(0.9844) translateZ(0);transform-origin:0 0;-webkit-text-stroke:0.5px #e8e8e8;">Apdex</div>
<div class="ln" style="left:1297.0px;top:152px;width:253.0px;height:2px;background:#464646"></div>
<div class="t" style="top:162.79px;font-size:13.95px;line-height:13.95px;color:#e8e8e8;letter-spacing:0.25px;left:1248.00px;transform:scaleX(1.0881) translateZ(0);transform-origin:0 0;-webkit-text-stroke:0.5px #e8e8e8;">www.easytravel.com</div>
<div class="t" style="top:516.93px;font-size:13.08px;line-height:13.08px;color:#e8e8e8;letter-spacing:0.25px;left:849.00px;transform:scaleX(0.9131) translateZ(0);transform-origin:0 0;-webkit-text-stroke:0.5px #e8e8e8;">Services</div>
<div class="ln" style="left:907.9px;top:527px;width:243.5000000000001px;height:2px;background:#464646"></div>
<div class="t" style="top:540.79px;font-size:21.51px;line-height:21.51px;color:#f0f0f0;letter-spacing:0.25px;left:849.00px;transform:scaleX(1.0057) translateZ(0);transform-origin:0 0;-webkit-text-stroke:0.85px #f0f0f0;">104</div>
<div class="t" style="top:567.93px;font-size:13.08px;line-height:13.08px;color:#888888;left:849.00px;transform:scaleX(0.9752) translateZ(0);transform-origin:0 0;">Web</div>
<div class="t" style="top:540.79px;font-size:21.51px;line-height:21.51px;color:#f0f0f0;letter-spacing:0.25px;left:952.00px;transform:scaleX(0.6687) translateZ(0);transform-origin:0 0;-webkit-text-stroke:0.85px #f0f0f0;">1</div>
<div class="t" style="top:567.93px;font-size:13.08px;line-height:13.08px;color:#888888;left:952.00px;transform:scaleX(0.9642) translateZ(0);transform-origin:0 0;">Messaging</div>
<div class="t" style="top:540.79px;font-size:21.51px;line-height:21.51px;color:#f0f0f0;letter-spacing:0.25px;left:1055.60px;transform:scaleX(1.0030) translateZ(0);transform-origin:0 0;-webkit-text-stroke:0.85px #f0f0f0;">6</div>
<div class="t" style="top:567.93px;font-size:13.08px;line-height:13.08px;color:#888888;left:1055.60px;transform:scaleX(0.9741) translateZ(0);transform-origin:0 0;">RMI/Custom</div>
<div class="ln" style="left:946px;top:536px;width:0;height:47px;border-left:1px dotted #6a6a6a"></div>
<div class="ln" style="left:1048px;top:536px;width:0;height:47px;border-left:1px dotted #6a6a6a"></div>
<div class="t" style="top:764.93px;font-size:13.08px;line-height:13.08px;color:#888888;left:865.60px;transform:scaleX(1.0127) translateZ(0);transform-origin:0 0;">Monitored requests</div>
<div class="t" style="top:764.43px;font-size:13.66px;line-height:13.66px;color:#888888;left:1118.76px;transform:scaleX(1.0109) translateZ(0);transform-origin:100% 0;">k/min</div>
<div class="t" style="top:762.47px;font-size:15.99px;line-height:15.99px;color:#f0f0f0;left:1086.28px;transform:scaleX(0.9641) translateZ(0);transform-origin:100% 0;-webkit-text-stroke:0.25px #f0f0f0;">22.3</div>
<div class="t" style="top:788.33px;font-size:13.08px;line-height:13.08px;color:#888888;left:865.60px;transform:scaleX(0.9976) translateZ(0);transform-origin:0 0;">Calls to Internet</div>
<div class="t" style="top:787.83px;font-size:13.66px;line-height:13.66px;color:#888888;left:1125.59px;transform:scaleX(0.9995) translateZ(0);transform-origin:100% 0;">/min</div>
<div class="t" style="top:785.87px;font-size:15.99px;line-height:15.99px;color:#f0f0f0;left:1115.71px;transform:scaleX(0.8997) translateZ(0);transform-origin:100% 0;-webkit-text-stroke:0.25px #f0f0f0;">5</div>
<div class="t" style="top:811.93px;font-size:13.08px;line-height:13.08px;color:#888888;left:865.60px;transform:scaleX(0.9969) translateZ(0);transform-origin:0 0;">Calls to unmonitored hosts</div>
<div class="t" style="top:811.43px;font-size:13.66px;line-height:13.66px;color:#888888;left:1125.59px;transform:scaleX(0.9995) translateZ(0);transform-origin:100% 0;">/min</div>
<div class="t" style="top:809.47px;font-size:15.99px;line-height:15.99px;color:#f0f0f0;left:1115.71px;transform:scaleX(1.0121) translateZ(0);transform-origin:100% 0;-webkit-text-stroke:0.25px #f0f0f0;">0</div>
<div class="t" style="top:726.70px;font-size:14.53px;line-height:14.53px;color:#e8e8e8;letter-spacing:0.25px;left:879.00px;transform:scaleX(0.8799) translateZ(0);transform-origin:0 0;-webkit-text-stroke:0.5px #e8e8e8;">18. Jul</div>
<div class="t" style="top:726.70px;font-size:14.53px;line-height:14.53px;color:#e8e8e8;letter-spacing:0.25px;left:957.60px;transform:scaleX(0.8889) translateZ(0);transform-origin:0 0;-webkit-text-stroke:0.5px #e8e8e8;">20. Jul</div>
<div class="t" style="top:726.70px;font-size:14.53px;line-height:14.53px;color:#e8e8e8;letter-spacing:0.25px;left:1036.00px;transform:scaleX(0.9024) translateZ(0);transform-origin:0 0;-webkit-text-stroke:0.5px #e8e8e8;">22. Jul</div>
<div class="t" style="top:726.70px;font-size:14.53px;line-height:14.53px;color:#e8e8e8;letter-spacing:0.25px;left:1110.40px;transform:scaleX(0.9024) translateZ(0);transform-origin:0 0;-webkit-text-stroke:0.5px #e8e8e8;">24. Jul</div>
<div class="t" style="top:517.33px;font-size:13.08px;line-height:13.08px;color:#e8e8e8;letter-spacing:0.25px;left:1248.00px;transform:scaleX(0.9909) translateZ(0);transform-origin:0 0;-webkit-text-stroke:0.5px #e8e8e8;">Most used 3rd party providers</div>
<div class="ln" style="left:1437.9px;top:527px;width:112.09999999999991px;height:2px;background:#464646"></div>
<div class="t" style="top:537.79px;font-size:13.95px;line-height:13.95px;color:#e8e8e8;letter-spacing:0.25px;left:1248.00px;transform:scaleX(1.0881) translateZ(0);transform-origin:0 0;-webkit-text-stroke:0.5px #e8e8e8;">www.easytravel.com</div>
<div class="t" style="top:728.70px;font-size:14.53px;line-height:14.53px;color:#e8e8e8;letter-spacing:0.25px;left:1263.60px;transform:scaleX(0.9472) translateZ(0);transform-origin:0 0;-webkit-text-stroke:0.5px #e8e8e8;">12:00</div>
<div class="t" style="top:728.70px;font-size:14.53px;line-height:14.53px;color:#e8e8e8;letter-spacing:0.25px;left:1334.00px;transform:scaleX(0.9632) translateZ(0);transform-origin:0 0;-webkit-text-stroke:0.5px #e8e8e8;">12:30</div>
<div class="t" style="top:728.70px;font-size:14.53px;line-height:14.53px;color:#e8e8e8;letter-spacing:0.25px;left:1405.00px;transform:scaleX(0.9632) translateZ(0);transform-origin:0 0;-webkit-text-stroke:0.5px #e8e8e8;">13:00</div>
<div class="t" style="top:728.70px;font-size:14.53px;line-height:14.53px;color:#e8e8e8;letter-spacing:0.25px;left:1475.60px;transform:scaleX(0.9632) translateZ(0);transform-origin:0 0;-webkit-text-stroke:0.5px #e8e8e8;">13:30</div>
<div class="t" style="top:764.93px;font-size:13.08px;line-height:13.08px;color:#888888;left:1263.00px;transform:scaleX(0.9817) translateZ(0);transform-origin:0 0;">cfapps.io</div>
<div class="t" style="top:764.43px;font-size:13.66px;line-height:13.66px;color:#888888;left:1524.59px;transform:scaleX(1.0228) translateZ(0);transform-origin:100% 0;">/min</div>
<div class="t" style="top:763.08px;font-size:15.26px;line-height:15.26px;color:#f0f0f0;left:1491.10px;transform:scaleX(1.1110) translateZ(0);transform-origin:100% 0;-webkit-text-stroke:0.25px #f0f0f0;">88.9</div>
<div class="t" style="top:788.53px;font-size:13.08px;line-height:13.08px;color:#888888;left:1263.00px;transform:scaleX(0.9837) translateZ(0);transform-origin:0 0;">dynatrace.com</div>
<div class="t" style="top:788.03px;font-size:13.66px;line-height:13.66px;color:#888888;left:1524.59px;transform:scaleX(1.0228) translateZ(0);transform-origin:100% 0;">/min</div>
<div class="t" style="top:786.68px;font-size:15.26px;line-height:15.26px;color:#f0f0f0;left:1491.10px;transform:scaleX(0.8551) translateZ(0);transform-origin:100% 0;-webkit-text-stroke:0.25px #f0f0f0;">74.1</div>
<div class="t" style="top:811.93px;font-size:13.08px;line-height:13.08px;color:#888888;left:1263.00px;transform:scaleX(0.9611) translateZ(0);transform-origin:0 0;">google.com</div>
<div class="t" style="top:811.43px;font-size:13.66px;line-height:13.66px;color:#888888;left:1524.59px;transform:scaleX(1.0228) translateZ(0);transform-origin:100% 0;">/min</div>
<div class="t" style="top:810.08px;font-size:15.26px;line-height:15.26px;color:#f0f0f0;left:1491.10px;transform:scaleX(0.9898) translateZ(0);transform-origin:100% 0;-webkit-text-stroke:0.25px #f0f0f0;">73.4</div>
<svg class="ab" style="left:0;top:0" width="1600" height="900"><rect x="857.00" y="621.00" width="11.6" height="95.00" fill="#5a71c2"/><rect x="876.66" y="621.00" width="11.6" height="95.00" fill="#5a71c2"/><rect x="896.32" y="622.50" width="11.6" height="93.50" fill="#5a71c2"/><rect x="915.98" y="614.30" width="11.6" height="101.70" fill="#5a71c2"/><rect x="935.64" y="619.20" width="11.6" height="96.80" fill="#5a71c2"/><rect x="955.30" y="621.30" width="11.6" height="94.70" fill="#5a71c2"/><rect x="974.96" y="622.50" width="11.6" height="93.50" fill="#5a71c2"/><rect x="994.62" y="621.30" width="11.6" height="94.70" fill="#5a71c2"/><rect x="1014.28" y="622.60" width="11.6" height="93.40" fill="#5a71c2"/><rect x="1033.94" y="622.60" width="11.6" height="93.40" fill="#5a71c2"/><rect x="1053.60" y="622.60" width="11.6" height="93.40" fill="#5a71c2"/><rect x="1073.26" y="621.30" width="11.6" height="94.70" fill="#5a71c2"/><rect x="1092.92" y="622.60" width="11.6" height="93.40" fill="#5a71c2"/><rect x="1112.58" y="622.60" width="11.6" height="93.40" fill="#5a71c2"/><rect x="1132.24" y="625.70" width="11.6" height="90.30" fill="#5a71c2"/><rect x="849.5" y="716" width="301" height="1.5" fill="#555"/><rect x="850.60" y="769.10" width="2" height="4.3" fill="#b9d6f3"/><rect x="854.00" y="765.90" width="2" height="7.5" fill="#b9d6f3"/><rect x="857.40" y="767.70" width="2" height="5.7" fill="#b9d6f3"/><rect x="850.60" y="792.70" width="2" height="4.3" fill="#9ea9f0"/><rect x="854.00" y="789.50" width="2" height="7.5" fill="#9ea9f0"/><rect x="857.40" y="791.30" width="2" height="5.7" fill="#9ea9f0"/><rect x="850.60" y="816.30" width="2" height="4.3" fill="#6d84ee"/><rect x="854.00" y="813.10" width="2" height="7.5" fill="#6d84ee"/><rect x="857.40" y="814.90" width="2" height="5.7" fill="#6d84ee"/><rect x="1251.70" y="629.67" width="8.3" height="34.17" fill="#dfbaf2"/><rect x="1251.70" y="663.83" width="8.3" height="26.50" fill="#5e2b86"/><rect x="1251.70" y="690.33" width="8.3" height="28.67" fill="#9463b1"/><rect x="1263.62" y="622.17" width="8.3" height="36.67" fill="#dfbaf2"/><rect x="1263.62" y="658.83" width="8.3" height="29.00" fill="#5e2b86"/><rect x="1263.62" y="687.83" width="8.3" height="31.17" fill="#9463b1"/><rect x="1275.54" y="629.67" width="8.3" height="34.17" fill="#dfbaf2"/><rect x="1275.54" y="663.83" width="8.3" height="27.33" fill="#5e2b86"/><rect x="1275.54" y="691.17" width="8.3" height="27.83" fill="#9463b1"/><rect x="1287.46" y="620.00" width="8.3" height="38.00" fill="#dfbaf2"/><rect x="1287.46" y="658.00" width="8.3" height="29.83" fill="#5e2b86"/><rect x="1287.46" y="687.83" width="8.3" height="31.17" fill="#9463b1"/><rect x="1299.38" y="624.67" width="8.3" height="35.33" fill="#dfbaf2"/><rect x="1299.38" y="660.00" width="8.3" height="28.83" fill="#5e2b86"/><rect x="1299.38" y="688.83" width="8.3" height="30.17" fill="#9463b1"/><rect x="1311.30" y="633.00" width="8.3" height="30.83" fill="#dfbaf2"/><rect x="1311.30" y="663.83" width="8.3" height="27.33" fill="#5e2b86"/><rect x="1311.30" y="691.17" width="8.3" height="27.83" fill="#9463b1"/><rect x="1323.22" y="628.33" width="8.3" height="34.17" fill="#dfbaf2"/><rect x="1323.22" y="662.50" width="8.3" height="27.83" fill="#5e2b86"/><rect x="1323.22" y="690.33" width="8.3" height="28.67" fill="#9463b1"/><rect x="1335.14" y="621.17" width="8.3" height="36.83" fill="#dfbaf2"/><rect x="1335.14" y="658.00" width="8.3" height="29.83" fill="#5e2b86"/><rect x="1335.14" y="687.83" width="8.3" height="31.17" fill="#9463b1"/><rect x="1347.06" y="627.00" width="8.3" height="34.17" fill="#dfbaf2"/><rect x="1347.06" y="661.17" width="8.3" height="27.67" fill="#5e2b86"/><rect x="1347.06" y="688.83" width="8.3" height="30.17" fill="#9463b1"/><rect x="1358.98" y="632.00" width="8.3" height="33.00" fill="#dfbaf2"/><rect x="1358.98" y="665.00" width="8.3" height="26.17" fill="#5e2b86"/><rect x="1358.98" y="691.17" width="8.3" height="27.83" fill="#9463b1"/><rect x="1370.90" y="628.33" width="8.3" height="32.83" fill="#dfbaf2"/><rect x="1370.90" y="661.17" width="8.3" height="29.17" fill="#5e2b86"/><rect x="1370.90" y="690.33" width="8.3" height="28.67" fill="#9463b1"/><rect x="1382.82" y="617.83" width="8.3" height="40.17" fill="#dfbaf2"/><rect x="1382.82" y="658.00" width="8.3" height="29.83" fill="#5e2b86"/><rect x="1382.82" y="687.83" width="8.3" height="31.17" fill="#9463b1"/><rect x="1394.74" y="624.67" width="8.3" height="34.17" fill="#dfbaf2"/><rect x="1394.74" y="658.83" width="8.3" height="30.00" fill="#5e2b86"/><rect x="1394.74" y="688.83" width="8.3" height="30.17" fill="#9463b1"/><rect x="1406.69" y="642.17" width="8.3" height="28.33" fill="#dfbaf2"/><rect x="1406.69" y="670.50" width="8.3" height="23.17" fill="#5e2b86"/><rect x="1406.69" y="693.67" width="8.3" height="25.33" fill="#9463b1"/><rect x="1418.38" y="611.67" width="8.3" height="40.33" fill="#dfbaf2"/><rect x="1418.38" y="652.00" width="8.3" height="33.50" fill="#5e2b86"/><rect x="1418.38" y="685.50" width="8.3" height="33.50" fill="#9463b1"/><rect x="1430.07" y="620.00" width="8.3" height="37.83" fill="#dfbaf2"/><rect x="1430.07" y="657.83" width="8.3" height="30.00" fill="#5e2b86"/><rect x="1430.07" y="687.83" width="8.3" height="31.17" fill="#9463b1"/><rect x="1441.76" y="621.17" width="8.3" height="36.67" fill="#dfbaf2"/><rect x="1441.76" y="657.83" width="8.3" height="30.00" fill="#5e2b86"/><rect x="1441.76" y="687.83" width="8.3" height="31.17" fill="#9463b1"/><rect x="1453.45" y="631.67" width="8.3" height="32.00" fill="#dfbaf2"/><rect x="1453.45" y="663.67" width="8.3" height="26.67" fill="#5e2b86"/><rect x="1453.45" y="690.33" width="8.3" height="28.67" fill="#9463b1"/><rect x="1465.14" y="650.50" width="8.3" height="24.50" fill="#dfbaf2"/><rect x="1465.14" y="675.00" width="8.3" height="22.17" fill="#5e2b86"/><rect x="1465.14" y="697.17" width="8.3" height="21.83" fill="#9463b1"/><rect x="1476.83" y="618.83" width="8.3" height="37.50" fill="#dfbaf2"/><rect x="1476.83" y="656.33" width="8.3" height="31.50" fill="#5e2b86"/><rect x="1476.83" y="687.83" width="8.3" height="31.17" fill="#9463b1"/><rect x="1488.52" y="605.83" width="8.3" height="42.83" fill="#dfbaf2"/><rect x="1488.52" y="648.67" width="8.3" height="34.33" fill="#5e2b86"/><rect x="1488.52" y="683.00" width="8.3" height="36.00" fill="#9463b1"/><rect x="1500.21" y="632.83" width="8.3" height="33.00" fill="#dfbaf2"/><rect x="1500.21" y="665.83" width="8.3" height="27.00" fill="#5e2b86"/><rect x="1500.21" y="692.83" width="8.3" height="26.17" fill="#9463b1"/><rect x="1511.90" y="621.17" width="8.3" height="37.67" fill="#dfbaf2"/><rect x="1511.90" y="658.83" width="8.3" height="29.00" fill="#5e2b86"/><rect x="1511.90" y="687.83" width="8.3" height="31.17" fill="#9463b1"/><rect x="1523.59" y="684.17" width="8.3" height="13.33" fill="#dfbaf2"/><rect x="1523.59" y="697.50" width="8.3" height="10.33" fill="#5e2b86"/><rect x="1523.59" y="707.83" width="8.3" height="11.17" fill="#9463b1"/><rect x="1536.20" y="684.17" width="8.3" height="13.33" fill="#dfbaf2"/><rect x="1536.20" y="697.50" width="8.3" height="10.33" fill="#5e2b86"/><rect x="1536.20" y="707.83" width="8.3" height="11.17" fill="#9463b1"/><rect x="1248.5" y="719" width="301" height="1.5" fill="#555"/><rect x="1249.20" y="769.70" width="2" height="4.3" fill="#dfbaf2"/><rect x="1252.60" y="766.50" width="2" height="7.5" fill="#dfbaf2"/><rect x="1256.00" y="768.30" width="2" height="5.7" fill="#dfbaf2"/><rect x="1249.20" y="793.30" width="2" height="4.3" fill="#5e2b86"/><rect x="1252.60" y="790.10" width="2" height="7.5" fill="#5e2b86"/><rect x="1256.00" y="791.90" width="2" height="5.7" fill="#5e2b86"/><rect x="1249.20" y="816.90" width="2" height="4.3" fill="#9463b1"/><rect x="1252.60" y="813.70" width="2" height="7.5" fill="#9463b1"/><rect x="1256.00" y="815.50" width="2" height="5.7" fill="#9463b1"/></svg>
<svg class="ab" style="left:0;top:0" width="800" height="900" fill="none" stroke-linejoin="bevel"><path d="M118.60 237.35C121.90 235.00 124.60 233.80 126.40 233.75L126.40 259.80M316.50 237.35C319.80 235.00 322.50 233.80 324.30 233.75L324.30 259.80" stroke="#dc172a" stroke-width="2.5"/><path d="M132.20 424.75C135.50 422.50 138.20 421.30 140.00 421.15L140.00 448.00M148.45 423.74C150.55 421.96 152.50 421.45 154.45 421.45C159.25 421.45 162.25 424.24 162.25 428.82C162.25 432.12 160.15 434.91 157.15 437.96L148.45 446.85L163.15 446.85M321.45 423.92C323.54 422.15 325.49 421.65 327.43 421.65C332.21 421.65 335.20 424.42 335.20 428.96C335.20 432.23 333.11 435.01 330.12 438.03L321.45 446.85L336.10 446.85M340.95 424.95C344.25 422.70 346.95 421.50 348.75 421.35L348.75 448.00M289.44 768.32C291.50 766.63 293.41 766.15 295.32 766.15C300.03 766.15 302.97 768.80 302.97 773.14C302.97 776.27 300.91 778.92 297.97 781.81L289.44 790.25L303.85 790.25M310.05 778.20A8.55 12.05 0 1 0 327.15 778.20A8.55 12.05 0 1 0 310.05 778.20ZM346.40 791.40L346.40 766.15L333.35 785.00L352.20 785.00M734.77 394.46C737.03 392.66 739.12 392.15 741.21 392.15C746.36 392.15 749.58 394.98 749.58 399.60C749.58 402.94 747.33 405.77 744.11 408.85L734.77 417.85L750.55 417.85" stroke="#f2f2f2" stroke-width="2.4499999999999997"/></svg>
<svg class="ab" style="left:0;top:0" width="1600" height="900"><defs><clipPath id="naa"><path d="M903.7 335.7L902.3 336.4L900.6 337.3L899.6 336.6L898.0 335.9L897.0 335.7L894.8 333.6L894.9 332.0L893.3 329.6L891.3 328.8L889.3 328.1L888.0 325.7L886.6 325.0L884.4 325.6L882.4 324.9L880.0 323.3L877.7 321.8L876.2 318.8L876.9 316.9L876.3 314.5L875.3 312.1L874.5 310.2L873.7 308.2L873.2 306.2L873.3 303.6L872.0 302.8L871.5 305.1L872.0 307.3L872.0 310.1L872.5 313.4L872.6 315.2L871.6 312.9L871.6 310.8L870.1 308.2L870.9 306.9L870.1 304.3L870.1 301.5L869.7 299.3L868.1 298.4L868.3 295.5L868.6 293.8L868.9 291.0L870.1 288.2L871.7 285.9L874.2 282.3L875.7 279.4L876.9 279.8L877.9 278.7L877.4 277.3L876.0 275.7L877.2 273.2L877.7 270.9L878.0 269.5L878.3 266.9L878.0 265.5L878.1 262.5L876.0 262.0L874.0 261.5L871.5 261.0L869.1 262.5L866.5 263.5L863.0 265.0L859.0 266.2L854.0 267.8L857.0 266.0L861.0 264.2L862.5 262.0L862.5 259.5L864.1 256.9L867.5 255.3L865.5 254.0L864.7 253.0L864.0 252.0L867.0 250.0L869.7 249.0L870.3 250.5L871.0 252.0L874.4 250.5L877.0 249.2L880.0 249.0L883.0 248.8L886.1 248.5L887.3 249.3L888.6 250.0L890.0 250.8L891.5 251.5L891.0 251.6L893.0 252.1L895.0 252.6L897.5 252.7L899.9 252.8L902.4 253.0L904.8 253.1L905.5 254.7L906.2 256.4L908.6 256.8L911.0 257.2L914.0 257.3L917.0 257.5L918.6 259.4L920.4 261.4L922.4 262.4L925.3 263.4L927.7 263.5L930.2 263.6L932.2 267.8L935.1 270.2L932.3 270.0L929.4 269.7L930.7 270.4L933.8 268.3L934.7 271.7L934.9 274.3L936.9 275.7L937.3 278.4L937.1 279.5L935.4 279.9L932.7 281.2L929.7 281.0L926.9 281.2L924.4 282.4L921.7 284.6L924.7 282.9L927.4 282.3L928.3 282.8L927.2 284.1L927.1 285.7L929.0 287.0L931.0 286.4L931.0 287.0L929.2 287.8L926.5 288.7L924.6 289.5L924.7 288.2L926.5 287.4L924.1 287.7L921.9 288.6L920.5 289.4L919.4 290.8L919.8 291.9L917.7 292.4L915.6 293.1L915.1 294.6L913.9 295.4L912.1 297.8L912.0 299.8L910.2 301.0L907.7 302.7L905.2 304.5L904.2 306.8L904.3 311.6L903.4 313.4L902.8 313.1L902.6 311.1L902.0 309.5L902.4 307.8L901.5 306.7L900.0 306.9L898.1 306.2L896.1 306.2L895.8 307.8L894.2 307.5L891.4 306.8L889.5 308.1L887.3 309.5L886.2 312.2L884.9 316.3L884.8 318.7L885.7 321.1L887.0 322.3L889.2 321.8L890.9 321.3L892.1 318.6L894.7 318.0L895.7 318.0L894.7 320.7L893.5 323.4L892.8 325.6L894.9 325.7L897.4 326.6L898.0 327.6L897.3 330.9L897.1 332.4L898.2 334.3L899.7 335.2L901.4 334.2L903.4 335.5Z"/></clipPath><clipPath id="saa"><path d="M903.7 335.6L904.2 335.6L905.7 333.1L907.2 332.0L909.4 331.3L910.2 330.6L910.6 332.5L911.9 331.8L913.5 333.0L915.9 333.1L919.1 333.0L920.6 333.9L921.2 335.8L923.1 336.6L924.6 338.8L927.3 339.3L929.4 339.8L931.0 341.6L932.0 344.8L932.6 345.8L934.1 348.7L937.4 348.9L941.1 350.7L944.4 351.7L946.5 353.7L948.5 354.3L949.0 356.5L948.6 358.9L946.8 361.5L944.9 364.7L944.9 370.0L943.9 373.9L942.6 377.0L940.1 377.5L937.2 379.6L936.5 381.8L936.6 384.5L935.4 387.8L933.9 390.7L933.2 392.3L931.9 393.0L929.8 392.5L928.2 392.2L929.7 394.5L930.4 397.1L929.2 398.2L926.4 398.6L926.5 400.7L924.2 401.1L925.2 403.0L925.3 404.6L925.5 406.6L924.2 408.4L926.3 410.2L925.5 412.5L925.0 413.9L926.5 416.2L927.6 419.1L929.6 419.6L929.4 420.8L926.8 420.0L923.7 417.9L921.1 416.1L918.2 411.6L917.5 407.6L916.7 403.0L914.8 397.7L914.9 394.4L914.6 389.7L913.6 385.1L913.7 381.1L913.2 376.4L912.4 371.8L909.9 369.8L906.4 367.2L905.0 364.6L902.5 360.6L900.6 357.2L899.1 353.5L900.1 351.6L899.4 349.2L900.3 346.1L901.5 345.1L903.1 342.5L903.3 338.4L902.9 337.3Z"/></clipPath><clipPath id="eaa" clip-rule="evenodd"><path clip-rule="evenodd" d="M980.7 300.7L980.0 299.6L979.0 299.1L977.5 299.4L977.7 297.4L977.0 297.0L977.6 295.2L977.8 292.9L977.4 291.6L978.7 290.7L982.0 291.1L984.5 291.1L985.1 289.4L985.1 287.5L984.2 286.3L982.0 285.3L981.9 284.4L984.4 284.3L984.9 283.0L986.4 283.3L987.6 282.3L987.9 281.3L989.3 280.7L989.9 279.6L990.4 278.7L992.2 278.2L993.6 277.9L993.6 276.1L993.1 275.4L993.0 273.7L994.6 272.8L995.1 273.1L994.9 274.6L995.5 274.8L994.7 276.1L995.6 276.9L997.0 276.7L998.5 277.5L1000.4 276.7L1002.2 276.4L1003.3 276.2L1004.4 275.7L1003.9 273.8L1004.6 272.6L1006.0 273.4L1006.5 272.2L1005.5 270.6L1007.4 270.0L1009.1 270.1L1010.8 269.5L1009.7 269.2L1007.7 269.0L1004.9 269.7L1003.5 268.6L1003.5 267.6L1002.8 266.2L1003.6 264.5L1005.3 263.1L1005.4 262.3L1004.4 262.0L1002.9 262.5L1002.5 263.6L1001.4 265.1L1000.2 266.2L1000.0 268.3L1001.5 269.6L1000.6 270.2L1000.1 273.2L999.8 274.5L998.4 275.4L997.2 275.6L996.9 274.6L996.1 272.6L995.3 271.1L994.8 270.6L993.1 272.0L991.2 272.0L990.6 270.6L990.2 268.4L990.3 266.7L992.4 265.2L993.9 264.1L995.3 262.6L996.2 260.2L997.5 258.7L998.7 257.3L1000.4 256.7L1002.7 255.7L1004.1 255.1L1006.1 255.4L1008.0 256.1L1009.8 257.4L1012.5 258.0L1015.9 259.4L1016.9 261.1L1014.8 261.5L1011.1 260.7L1012.4 261.8L1012.7 263.5L1014.8 264.2L1016.8 263.3L1018.8 261.1L1018.2 258.2L1020.0 258.6L1022.4 258.2L1024.8 257.9L1027.7 257.2L1028.8 256.0L1033.1 256.6L1035.6 257.7L1033.0 254.2L1032.3 251.8L1034.5 251.8L1036.7 254.6L1039.7 257.3L1038.0 252.9L1038.8 250.5L1040.7 250.1L1042.5 249.7L1041.2 248.4L1043.0 247.5L1044.8 246.7L1046.6 245.5L1048.1 244.5L1050.0 245.3L1053.4 245.5L1056.0 246.3L1058.5 248.7L1061.8 248.7L1063.9 248.8L1066.1 248.9L1070.0 249.3L1068.1 248.0L1074.2 249.9L1075.2 249.2L1076.2 248.4L1077.9 248.3L1079.7 248.1L1083.3 248.6L1085.8 249.2L1087.6 248.9L1089.4 248.6L1092.8 249.8L1095.6 249.2L1096.7 248.4L1098.4 248.2L1100.1 248.0L1103.9 248.5L1111.3 252.6L1111.4 253.3L1114.2 255.7L1113.6 257.0L1114.7 259.4L1111.6 259.7L1110.7 260.5L1112.6 262.9L1115.7 265.0L1118.7 269.4L1119.1 272.4L1115.8 269.9L1110.5 265.6L1109.6 263.8L1107.4 260.1L1105.5 259.0L1105.7 262.2L1104.1 262.6L1101.3 263.0L1097.9 263.5L1098.5 266.0L1100.4 270.8L1104.0 271.5L1107.3 274.2L1109.6 277.6L1109.8 280.1L1110.3 284.4L1107.9 285.6L1107.6 287.0L1107.7 288.8L1108.8 292.3L1111.6 295.7L1112.0 296.8L1110.3 297.7L1109.7 297.9L1107.9 293.9L1106.3 293.6L1105.1 291.3L1103.9 290.8L1102.2 292.4L1101.9 292.6L1101.3 290.2L1100.2 289.9L1099.2 292.4L1098.8 293.3L1100.8 294.7L1101.6 295.0L1104.1 294.4L1103.1 296.5L1102.8 298.2L1105.2 300.6L1107.5 302.5L1107.9 304.4L1108.6 304.9L1108.6 308.6L1108.2 311.1L1106.8 314.0L1104.2 315.8L1101.5 317.1L1101.4 318.8L1100.1 317.1L1098.3 317.1L1097.4 318.7L1096.9 320.8L1098.1 322.8L1101.1 325.8L1102.1 329.0L1102.3 330.9L1100.2 332.7L1098.4 335.2L1097.9 333.0L1095.9 331.9L1095.1 330.3L1093.2 328.6L1092.4 330.0L1092.0 333.4L1092.7 334.3L1093.7 337.1L1094.9 337.7L1097.0 340.9L1097.3 343.3L1098.2 345.2L1097.2 345.3L1094.9 343.3L1093.7 339.8L1091.3 335.9L1091.2 332.7L1089.6 326.8L1088.5 324.1L1085.9 325.3L1085.1 321.9L1082.3 318.5L1081.4 316.5L1080.2 317.2L1078.5 317.7L1076.8 319.0L1075.2 320.9L1073.0 324.2L1071.0 326.3L1071.3 329.0L1071.3 333.0L1069.1 336.3L1067.9 334.7L1066.7 331.7L1064.6 327.4L1062.7 321.8L1062.1 319.1L1059.2 319.2L1057.4 317.1L1055.8 315.3L1054.7 313.3L1052.6 313.6L1049.5 313.9L1045.2 313.2L1043.7 311.4L1042.4 312.3L1038.7 310.6L1036.9 307.8L1035.4 307.9L1034.7 308.0L1035.6 310.1L1037.0 311.8L1037.8 313.1L1038.6 314.6L1039.1 313.2L1039.5 315.3L1042.0 315.5L1043.8 313.6L1044.0 312.4L1044.9 315.3L1046.8 316.0L1048.3 317.5L1047.3 320.1L1046.7 322.2L1044.6 324.1L1041.4 326.7L1038.2 328.8L1034.0 330.4L1032.3 330.6L1031.3 326.7L1030.4 324.3L1028.4 320.8L1026.7 318.5L1024.3 314.0L1022.1 310.6L1021.6 308.8L1021.2 310.8L1019.2 308.3L1020.5 311.8L1022.9 315.9L1025.0 319.8L1026.7 323.7L1028.2 326.9L1029.9 328.5L1032.3 331.5L1033.7 333.6L1036.3 332.6L1040.8 331.7L1041.0 333.5L1040.2 336.7L1038.3 340.6L1035.6 344.5L1032.9 347.8L1030.8 349.5L1029.1 351.7L1028.2 355.0L1028.4 357.6L1029.4 360.8L1029.2 366.1L1027.9 368.7L1025.1 370.3L1022.8 373.2L1023.0 377.1L1020.0 380.8L1019.7 383.5L1017.6 386.1L1014.2 389.7L1011.8 391.2L1008.6 391.2L1006.0 392.2L1004.5 391.3L1004.4 389.2L1003.0 384.1L1001.8 381.4L1001.3 376.2L998.8 370.4L998.7 368.5L999.6 364.2L1000.8 361.1L1000.3 358.5L999.4 354.9L999.0 353.6L996.4 350.4L996.2 346.5L996.5 343.9L996.7 342.0L995.3 341.2L992.6 341.6L991.0 339.0L988.9 339.0L987.3 339.5L984.1 341.0L981.9 340.4L978.2 341.5L976.0 340.0L973.9 338.4L972.0 336.2L970.4 333.2L968.5 331.1L968.3 329.3L967.7 328.1L968.8 326.5L969.1 321.9L968.5 320.0L969.6 316.5L971.3 313.5L972.7 311.5L974.5 310.7L976.3 309.0L976.4 307.1L977.7 304.1L979.4 303.2L980.4 300.9L981.0 300.8L984.0 301.8L987.2 300.0L989.6 299.6L994.6 299.5L996.2 299.1L997.0 299.5L996.5 300.9L997.2 301.7L996.4 303.1L997.7 304.4L1001.4 305.4L1004.9 308.0L1006.4 307.2L1006.3 305.5L1007.7 304.7L1009.6 305.5L1011.3 306.2L1015.4 307.1L1017.4 306.1L1018.7 306.5L1020.6 306.5L1021.1 304.5L1021.4 302.3L1021.6 300.6L1021.7 299.6L1020.1 299.3L1018.2 300.3L1016.2 299.5L1014.0 299.6L1012.9 298.5L1011.8 296.7L1011.4 295.3L1011.9 294.5L1013.9 293.9L1016.3 293.7L1019.5 292.6L1022.5 293.8L1025.8 293.1L1025.7 291.8L1023.2 289.9L1021.2 288.9L1020.1 288.3L1019.3 288.7L1017.5 289.4L1016.4 288.2L1017.3 287.3L1015.2 286.7L1014.2 287.7L1013.7 288.4L1013.0 290.1L1012.6 291.9L1012.9 293.2L1013.9 293.9L1011.4 294.2L1009.2 294.3L1008.3 295.0L1008.0 295.4L1008.7 296.7L1009.6 297.7L1008.3 298.3L1008.8 299.9L1007.5 299.5L1006.8 298.2L1006.9 297.5L1005.7 295.9L1004.8 294.9L1004.8 293.1L1003.3 292.1L1001.1 290.8L999.7 288.6L998.9 288.1L997.7 288.6L997.9 290.3L999.5 292.2L1001.5 293.6L1004.0 295.3L1002.6 296.2L1002.2 297.4L1001.5 298.0L1001.4 295.4L999.8 294.4L998.1 293.3L996.6 292.3L995.8 290.5L994.2 289.9L992.4 291.5L990.5 291.0L989.1 291.6L989.3 293.1L987.2 294.2L986.2 296.2L985.9 297.6L985.4 298.6L984.1 299.8L981.9 299.8ZM1030.1 289.0L1031.3 286.4L1033.4 285.6L1035.0 286.0L1035.4 287.8L1034.1 288.9L1033.2 289.2L1034.5 290.6L1036.2 292.1L1036.7 293.4L1037.9 294.0L1038.1 295.6L1038.8 298.2L1036.6 298.9L1034.0 298.0L1033.7 294.6L1032.3 292.5L1031.0 291.0Z"/></clipPath></defs><path d="M903.7 335.7L902.3 336.4L900.6 337.3L899.6 336.6L898.0 335.9L897.0 335.7L894.8 333.6L894.9 332.0L893.3 329.6L891.3 328.8L889.3 328.1L888.0 325.7L886.6 325.0L884.4 325.6L882.4 324.9L880.0 323.3L877.7 321.8L876.2 318.8L876.9 316.9L876.3 314.5L875.3 312.1L874.5 310.2L873.7 308.2L873.2 306.2L873.3 303.6L872.0 302.8L871.5 305.1L872.0 307.3L872.0 310.1L872.5 313.4L872.6 315.2L871.6 312.9L871.6 310.8L870.1 308.2L870.9 306.9L870.1 304.3L870.1 301.5L869.7 299.3L868.1 298.4L868.3 295.5L868.6 293.8L868.9 291.0L870.1 288.2L871.7 285.9L874.2 282.3L875.7 279.4L876.9 279.8L877.9 278.7L877.4 277.3L876.0 275.7L877.2 273.2L877.7 270.9L878.0 269.5L878.3 266.9L878.0 265.5L878.1 262.5L876.0 262.0L874.0 261.5L871.5 261.0L869.1 262.5L866.5 263.5L863.0 265.0L859.0 266.2L854.0 267.8L857.0 266.0L861.0 264.2L862.5 262.0L862.5 259.5L864.1 256.9L867.5 255.3L865.5 254.0L864.7 253.0L864.0 252.0L867.0 250.0L869.7 249.0L870.3 250.5L871.0 252.0L874.4 250.5L877.0 249.2L880.0 249.0L883.0 248.8L886.1 248.5L887.3 249.3L888.6 250.0L890.0 250.8L891.5 251.5L891.0 251.6L893.0 252.1L895.0 252.6L897.5 252.7L899.9 252.8L902.4 253.0L904.8 253.1L905.5 254.7L906.2 256.4L908.6 256.8L911.0 257.2L914.0 257.3L917.0 257.5L918.6 259.4L920.4 261.4L922.4 262.4L925.3 263.4L927.7 263.5L930.2 263.6L932.2 267.8L935.1 270.2L932.3 270.0L929.4 269.7L930.7 270.4L933.8 268.3L934.7 271.7L934.9 274.3L936.9 275.7L937.3 278.4L937.1 279.5L935.4 279.9L932.7 281.2L929.7 281.0L926.9 281.2L924.4 282.4L921.7 284.6L924.7 282.9L927.4 282.3L928.3 282.8L927.2 284.1L927.1 285.7L929.0 287.0L931.0 286.4L931.0 287.0L929.2 287.8L926.5 288.7L924.6 289.5L924.7 288.2L926.5 287.4L924.1 287.7L921.9 288.6L920.5 289.4L919.4 290.8L919.8 291.9L917.7 292.4L915.6 293.1L915.1 294.6L913.9 295.4L912.1 297.8L912.0 299.8L910.2 301.0L907.7 302.7L905.2 304.5L904.2 306.8L904.3 311.6L903.4 313.4L902.8 313.1L902.6 311.1L902.0 309.5L902.4 307.8L901.5 306.7L900.0 306.9L898.1 306.2L896.1 306.2L895.8 307.8L894.2 307.5L891.4 306.8L889.5 308.1L887.3 309.5L886.2 312.2L884.9 316.3L884.8 318.7L885.7 321.1L887.0 322.3L889.2 321.8L890.9 321.3L892.1 318.6L894.7 318.0L895.7 318.0L894.7 320.7L893.5 323.4L892.8 325.6L894.9 325.7L897.4 326.6L898.0 327.6L897.3 330.9L897.1 332.4L898.2 334.3L899.7 335.2L901.4 334.2L903.4 335.5ZM903.7 335.6L904.2 335.6L905.7 333.1L907.2 332.0L909.4 331.3L910.2 330.6L910.6 332.5L911.9 331.8L913.5 333.0L915.9 333.1L919.1 333.0L920.6 333.9L921.2 335.8L923.1 336.6L924.6 338.8L927.3 339.3L929.4 339.8L931.0 341.6L932.0 344.8L932.6 345.8L934.1 348.7L937.4 348.9L941.1 350.7L944.4 351.7L946.5 353.7L948.5 354.3L949.0 356.5L948.6 358.9L946.8 361.5L944.9 364.7L944.9 370.0L943.9 373.9L942.6 377.0L940.1 377.5L937.2 379.6L936.5 381.8L936.6 384.5L935.4 387.8L933.9 390.7L933.2 392.3L931.9 393.0L929.8 392.5L928.2 392.2L929.7 394.5L930.4 397.1L929.2 398.2L926.4 398.6L926.5 400.7L924.2 401.1L925.2 403.0L925.3 404.6L925.5 406.6L924.2 408.4L926.3 410.2L925.5 412.5L925.0 413.9L926.5 416.2L927.6 419.1L929.6 419.6L929.4 420.8L926.8 420.0L923.7 417.9L921.1 416.1L918.2 411.6L917.5 407.6L916.7 403.0L914.8 397.7L914.9 394.4L914.6 389.7L913.6 385.1L913.7 381.1L913.2 376.4L912.4 371.8L909.9 369.8L906.4 367.2L905.0 364.6L902.5 360.6L900.6 357.2L899.1 353.5L900.1 351.6L899.4 349.2L900.3 346.1L901.5 345.1L903.1 342.5L903.3 338.4L902.9 337.3Z" fill="#545454"/><path d="M980.7 300.7L980.0 299.6L979.0 299.1L977.5 299.4L977.7 297.4L977.0 297.0L977.6 295.2L977.8 292.9L977.4 291.6L978.7 290.7L982.0 291.1L984.5 291.1L985.1 289.4L985.1 287.5L984.2 286.3L982.0 285.3L981.9 284.4L984.4 284.3L984.9 283.0L986.4 283.3L987.6 282.3L987.9 281.3L989.3 280.7L989.9 279.6L990.4 278.7L992.2 278.2L993.6 277.9L993.6 276.1L993.1 275.4L993.0 273.7L994.6 272.8L995.1 273.1L994.9 274.6L995.5 274.8L994.7 276.1L995.6 276.9L997.0 276.7L998.5 277.5L1000.4 276.7L1002.2 276.4L1003.3 276.2L1004.4 275.7L1003.9 273.8L1004.6 272.6L1006.0 273.4L1006.5 272.2L1005.5 270.6L1007.4 270.0L1009.1 270.1L1010.8 269.5L1009.7 269.2L1007.7 269.0L1004.9 269.7L1003.5 268.6L1003.5 267.6L1002.8 266.2L1003.6 264.5L1005.3 263.1L1005.4 262.3L1004.4 262.0L1002.9 262.5L1002.5 263.6L1001.4 265.1L1000.2 266.2L1000.0 268.3L1001.5 269.6L1000.6 270.2L1000.1 273.2L999.8 274.5L998.4 275.4L997.2 275.6L996.9 274.6L996.1 272.6L995.3 271.1L994.8 270.6L993.1 272.0L991.2 272.0L990.6 270.6L990.2 268.4L990.3 266.7L992.4 265.2L993.9 264.1L995.3 262.6L996.2 260.2L997.5 258.7L998.7 257.3L1000.4 256.7L1002.7 255.7L1004.1 255.1L1006.1 255.4L1008.0 256.1L1009.8 257.4L1012.5 258.0L1015.9 259.4L1016.9 261.1L1014.8 261.5L1011.1 260.7L1012.4 261.8L1012.7 263.5L1014.8 264.2L1016.8 263.3L1018.8 261.1L1018.2 258.2L1020.0 258.6L1022.4 258.2L1024.8 257.9L1027.7 257.2L1028.8 256.0L1033.1 256.6L1035.6 257.7L1033.0 254.2L1032.3 251.8L1034.5 251.8L1036.7 254.6L1039.7 257.3L1038.0 252.9L1038.8 250.5L1040.7 250.1L1042.5 249.7L1041.2 248.4L1043.0 247.5L1044.8 246.7L1046.6 245.5L1048.1 244.5L1050.0 245.3L1053.4 245.5L1056.0 246.3L1058.5 248.7L1061.8 248.7L1063.9 248.8L1066.1 248.9L1070.0 249.3L1068.1 248.0L1074.2 249.9L1075.2 249.2L1076.2 248.4L1077.9 248.3L1079.7 248.1L1083.3 248.6L1085.8 249.2L1087.6 248.9L1089.4 248.6L1092.8 249.8L1095.6 249.2L1096.7 248.4L1098.4 248.2L1100.1 248.0L1103.9 248.5L1111.3 252.6L1111.4 253.3L1114.2 255.7L1113.6 257.0L1114.7 259.4L1111.6 259.7L1110.7 260.5L1112.6 262.9L1115.7 265.0L1118.7 269.4L1119.1 272.4L1115.8 269.9L1110.5 265.6L1109.6 263.8L1107.4 260.1L1105.5 259.0L1105.7 262.2L1104.1 262.6L1101.3 263.0L1097.9 263.5L1098.5 266.0L1100.4 270.8L1104.0 271.5L1107.3 274.2L1109.6 277.6L1109.8 280.1L1110.3 284.4L1107.9 285.6L1107.6 287.0L1107.7 288.8L1108.8 292.3L1111.6 295.7L1112.0 296.8L1110.3 297.7L1109.7 297.9L1107.9 293.9L1106.3 293.6L1105.1 291.3L1103.9 290.8L1102.2 292.4L1101.9 292.6L1101.3 290.2L1100.2 289.9L1099.2 292.4L1098.8 293.3L1100.8 294.7L1101.6 295.0L1104.1 294.4L1103.1 296.5L1102.8 298.2L1105.2 300.6L1107.5 302.5L1107.9 304.4L1108.6 304.9L1108.6 308.6L1108.2 311.1L1106.8 314.0L1104.2 315.8L1101.5 317.1L1101.4 318.8L1100.1 317.1L1098.3 317.1L1097.4 318.7L1096.9 320.8L1098.1 322.8L1101.1 325.8L1102.1 329.0L1102.3 330.9L1100.2 332.7L1098.4 335.2L1097.9 333.0L1095.9 331.9L1095.1 330.3L1093.2 328.6L1092.4 330.0L1092.0 333.4L1092.7 334.3L1093.7 337.1L1094.9 337.7L1097.0 340.9L1097.3 343.3L1098.2 345.2L1097.2 345.3L1094.9 343.3L1093.7 339.8L1091.3 335.9L1091.2 332.7L1089.6 326.8L1088.5 324.1L1085.9 325.3L1085.1 321.9L1082.3 318.5L1081.4 316.5L1080.2 317.2L1078.5 317.7L1076.8 319.0L1075.2 320.9L1073.0 324.2L1071.0 326.3L1071.3 329.0L1071.3 333.0L1069.1 336.3L1067.9 334.7L1066.7 331.7L1064.6 327.4L1062.7 321.8L1062.1 319.1L1059.2 319.2L1057.4 317.1L1055.8 315.3L1054.7 313.3L1052.6 313.6L1049.5 313.9L1045.2 313.2L1043.7 311.4L1042.4 312.3L1038.7 310.6L1036.9 307.8L1035.4 307.9L1034.7 308.0L1035.6 310.1L1037.0 311.8L1037.8 313.1L1038.6 314.6L1039.1 313.2L1039.5 315.3L1042.0 315.5L1043.8 313.6L1044.0 312.4L1044.9 315.3L1046.8 316.0L1048.3 317.5L1047.3 320.1L1046.7 322.2L1044.6 324.1L1041.4 326.7L1038.2 328.8L1034.0 330.4L1032.3 330.6L1031.3 326.7L1030.4 324.3L1028.4 320.8L1026.7 318.5L1024.3 314.0L1022.1 310.6L1021.6 308.8L1021.2 310.8L1019.2 308.3L1020.5 311.8L1022.9 315.9L1025.0 319.8L1026.7 323.7L1028.2 326.9L1029.9 328.5L1032.3 331.5L1033.7 333.6L1036.3 332.6L1040.8 331.7L1041.0 333.5L1040.2 336.7L1038.3 340.6L1035.6 344.5L1032.9 347.8L1030.8 349.5L1029.1 351.7L1028.2 355.0L1028.4 357.6L1029.4 360.8L1029.2 366.1L1027.9 368.7L1025.1 370.3L1022.8 373.2L1023.0 377.1L1020.0 380.8L1019.7 383.5L1017.6 386.1L1014.2 389.7L1011.8 391.2L1008.6 391.2L1006.0 392.2L1004.5 391.3L1004.4 389.2L1003.0 384.1L1001.8 381.4L1001.3 376.2L998.8 370.4L998.7 368.5L999.6 364.2L1000.8 361.1L1000.3 358.5L999.4 354.9L999.0 353.6L996.4 350.4L996.2 346.5L996.5 343.9L996.7 342.0L995.3 341.2L992.6 341.6L991.0 339.0L988.9 339.0L987.3 339.5L984.1 341.0L981.9 340.4L978.2 341.5L976.0 340.0L973.9 338.4L972.0 336.2L970.4 333.2L968.5 331.1L968.3 329.3L967.7 328.1L968.8 326.5L969.1 321.9L968.5 320.0L969.6 316.5L971.3 313.5L972.7 311.5L974.5 310.7L976.3 309.0L976.4 307.1L977.7 304.1L979.4 303.2L980.4 300.9L981.0 300.8L984.0 301.8L987.2 300.0L989.6 299.6L994.6 299.5L996.2 299.1L997.0 299.5L996.5 300.9L997.2 301.7L996.4 303.1L997.7 304.4L1001.4 305.4L1004.9 308.0L1006.4 307.2L1006.3 305.5L1007.7 304.7L1009.6 305.5L1011.3 306.2L1015.4 307.1L1017.4 306.1L1018.7 306.5L1020.6 306.5L1021.1 304.5L1021.4 302.3L1021.6 300.6L1021.7 299.6L1020.1 299.3L1018.2 300.3L1016.2 299.5L1014.0 299.6L1012.9 298.5L1011.8 296.7L1011.4 295.3L1011.9 294.5L1013.9 293.9L1016.3 293.7L1019.5 292.6L1022.5 293.8L1025.8 293.1L1025.7 291.8L1023.2 289.9L1021.2 288.9L1020.1 288.3L1019.3 288.7L1017.5 289.4L1016.4 288.2L1017.3 287.3L1015.2 286.7L1014.2 287.7L1013.7 288.4L1013.0 290.1L1012.6 291.9L1012.9 293.2L1013.9 293.9L1011.4 294.2L1009.2 294.3L1008.3 295.0L1008.0 295.4L1008.7 296.7L1009.6 297.7L1008.3 298.3L1008.8 299.9L1007.5 299.5L1006.8 298.2L1006.9 297.5L1005.7 295.9L1004.8 294.9L1004.8 293.1L1003.3 292.1L1001.1 290.8L999.7 288.6L998.9 288.1L997.7 288.6L997.9 290.3L999.5 292.2L1001.5 293.6L1004.0 295.3L1002.6 296.2L1002.2 297.4L1001.5 298.0L1001.4 295.4L999.8 294.4L998.1 293.3L996.6 292.3L995.8 290.5L994.2 289.9L992.4 291.5L990.5 291.0L989.1 291.6L989.3 293.1L987.2 294.2L986.2 296.2L985.9 297.6L985.4 298.6L984.1 299.8L981.9 299.8ZM1030.1 289.0L1031.3 286.4L1033.4 285.6L1035.0 286.0L1035.4 287.8L1034.1 288.9L1033.2 289.2L1034.5 290.6L1036.2 292.1L1036.7 293.4L1037.9 294.0L1038.1 295.6L1038.8 298.2L1036.6 298.9L1034.0 298.0L1033.7 294.6L1032.3 292.5L1031.0 291.0Z" fill="#545454" fill-rule="evenodd"/><path d="M995.5 299.4L995.6 302.2L995.7 305.0L995.8 307.8L996.1 310.3L996.3 312.9L996.5 315.5L998.6 316.8L1000.8 318.1L1002.8 316.8L1004.9 317.9L1007.0 319.0L1009.2 320.1L1011.3 321.2L1011.5 324.2L1011.6 327.1L1010.1 329.0L1009.6 331.6L1011.3 335.5L1011.3 335.5L1010.2 332.9L1009.0 330.3L1007.9 327.7L1006.8 325.2L1005.6 322.6L1004.5 320.0L1003.3 317.4L1002.2 314.8L1001.1 312.3L999.9 309.7L998.8 307.1L997.7 304.5M968.5 320.0L970.6 319.8L972.7 319.6L973.8 316.8L977.3 311.9L981.3 314.9L983.3 316.7L985.4 318.5L987.5 320.3L990.6 322.4L990.4 326.5L988.3 327.1L986.2 327.8L983.3 327.5L980.4 327.1L978.3 327.4L976.2 327.6L974.0 327.8L973.2 331.0L973.2 331.0L972.0 328.3L970.8 325.5M990.5 329.7L993.0 329.7L995.5 329.6L998.1 329.5L1000.6 329.4L1002.6 325.8L1002.4 323.0L1002.2 320.2L1002.0 317.4L1002.0 317.4L999.7 319.9L997.5 322.3L995.1 324.8M1009.6 331.6L1012.3 333.2L1015.0 334.8L1017.5 334.8L1020.0 334.8L1022.5 334.8L1023.4 337.7L1024.3 340.6L1024.3 340.6L1021.8 339.1L1019.4 337.6L1016.9 336.1L1014.5 334.6M999.1 353.6L1001.2 354.3L1003.3 354.9L1005.5 357.5L1007.6 359.4L1009.7 361.4L1011.8 361.4L1011.8 361.4L1009.7 360.1L1007.6 358.8L1005.5 357.5L1003.3 356.2M1018.4 348.4L1020.6 348.4L1022.7 348.5L1026.4 351.7L1028.6 353.0L1028.6 353.0L1026.0 351.9L1023.5 350.7M1018.4 348.4L1018.1 344.9L1017.8 341.3L1020.3 341.3L1022.7 341.3L1024.3 340.6L1026.4 341.1L1028.6 341.5L1030.7 341.9L1034.4 340.6L1037.5 336.7L1037.5 336.7L1035.4 338.0L1033.3 339.3L1031.2 340.6L1029.1 341.9L1027.0 343.2L1024.8 344.5L1022.7 345.8M998.6 369.5L1000.8 369.7L1003.0 369.8L1005.1 370.0L1007.3 370.2L1009.9 370.2L1012.5 370.2L1012.5 370.2L1010.2 370.1L1007.9 370.0L1005.6 369.9L1003.3 369.7M1007.3 370.2L1007.1 372.9L1007.0 375.6L1006.8 379.2L1006.8 379.2L1007.0 376.2M1021.0 369.2L1020.6 371.8L1020.1 374.4L1019.0 376.1L1019.0 376.1M973.2 331.0L977.1 333.6L980.3 333.6L983.0 332.9L986.2 333.0L988.9 331.7L990.5 329.7L990.5 329.7L988.3 329.9L986.2 330.0L984.0 330.2L981.9 330.4L979.7 330.5L977.5 330.7M1011.3 321.2L1012.2 318.6M1001.8 340.7L1004.2 341.7L1006.6 342.6L1008.9 342.1L1011.1 341.6L1013.4 341.2L1015.7 340.7L1018.4 342.6L1018.4 342.6L1016.0 342.3L1013.6 342.1L1011.3 341.8L1008.9 341.5L1006.5 341.2M996.7 344.2L1000.2 344.3L1003.4 344.6L1005.5 342.6L1005.5 342.6L1003.3 343.0L1001.1 343.4M1003.4 344.6L1005.0 348.4L1003.4 352.3L1001.2 353.0L999.1 353.6L999.1 353.6L1000.5 350.6M977.1 333.6L977.7 336.8L978.2 341.5L978.2 341.5L977.8 338.8M980.3 333.6L981.7 337.1L983.0 340.7L983.0 340.7M1036.4 292.5L1039.6 292.9L1041.4 291.1L1044.4 289.8L1046.3 290.1L1048.3 290.3L1051.7 292.2L1053.0 290.4L1055.0 290.7L1057.2 290.6L1059.4 290.5L1061.5 290.3L1061.5 290.3L1059.6 290.5L1057.7 290.7L1055.8 290.9L1053.9 291.1L1051.9 291.2L1050.0 291.4L1048.1 291.6L1046.1 291.7L1044.2 291.9L1042.2 292.0L1040.3 292.2M1045.9 299.0L1047.8 300.5L1049.4 299.2L1052.0 297.9L1054.8 297.4L1056.9 297.4L1059.0 297.4L1059.0 297.4L1056.8 297.7L1054.7 298.0L1052.5 298.2L1050.3 298.5M1027.0 347.1L1030.2 349.4M1024.3 340.6L1024.5 337.7L1024.6 334.8L1024.8 331.9L1024.9 328.9L1025.8 326.3L1026.7 323.7L1026.7 323.7L1026.4 326.5L1026.0 329.4L1025.6 332.2L1025.2 335.0M1032.1 330.6L1034.3 333.6L1036.5 336.7L1033.4 340.6L1033.4 340.6L1033.0 337.3" fill="none" stroke="#474747" stroke-width=".55" clip-path="url(#eaa)"/><g clip-path="url(#naa)"><path d="M871.9 278.1L874.8 278.4L877.7 278.7L880.3 279.0L882.8 279.3L885.4 279.5L888.1 279.8L890.7 280.0L893.3 280.3L896.0 280.5L898.6 280.7L901.3 280.9L901.6 280.4L905.5 282.6L909.0 284.8L910.1 286.5L908.9 289.6L907.8 290.7L911.8 290.4L912.1 289.2L914.9 288.5L917.0 287.3L920.6 287.1L923.2 284.4L924.3 284.9L923.7 286.7L924.1 287.9L927.1 288.6L930.1 289.3L926.5 293.4L922.9 297.7L919.3 301.9L915.8 306.1L912.3 310.4L908.8 314.7L905.7 314.3L902.5 313.8L899.3 313.4L896.1 313.0L893.0 312.6L889.8 312.1L886.7 311.7L885.0 309.4L884.0 306.2L882.2 307.2L881.0 306.1L880.1 303.1L878.4 303.0L875.3 303.5L872.4 301.7L870.1 301.5L867.0 301.4L863.8 301.4L860.6 301.3L857.4 301.2L859.8 296.5L862.5 291.8L865.4 287.2L868.5 282.6Z" fill="#c291dd" stroke="#c291dd" stroke-width=".7"/><path d="M895.0 248.8L888.8 253.2L882.9 257.8L877.3 262.5L878.7 262.7L878.0 264.4L880.4 264.1L879.4 267.5L879.6 269.1L877.7 270.6L868.9 276.2L866.5 275.9L864.2 275.6L861.8 275.3L859.5 274.9L857.1 274.6L854.8 274.2L852.5 273.8L850.3 273.4L848.0 273.0L845.8 272.6L843.6 272.2L841.5 271.8L839.3 271.3L837.2 270.9L835.1 270.4L840.2 266.4L845.5 262.5L851.0 258.8L856.6 255.2L862.5 251.8L868.5 248.5L874.6 245.4L876.0 245.7L877.5 246.0L879.0 246.3L880.5 246.5L882.0 246.8L883.6 247.1L885.2 247.3L886.8 247.6L888.4 247.8L890.0 248.1L891.7 248.3L893.3 248.6Z" fill="#c291dd" stroke="#c291dd" stroke-width=".7"/><path d="M917.8 235.5L912.1 238.4L906.6 241.5L901.3 244.7L896.1 248.1L891.1 251.5L886.3 255.1L881.7 258.7L877.3 262.5L878.7 262.7L878.0 264.4L880.4 264.1L879.4 267.5L879.6 269.1L877.7 270.6L868.9 276.2L871.0 277.3L873.1 278.4L875.3 279.5L876.9 279.6L877.7 278.7L880.3 279.0L882.8 279.3L885.4 279.5L888.1 279.8L890.7 280.0L893.3 280.3L896.0 280.5L898.6 280.7L901.3 280.9L901.6 280.4L905.5 282.6L909.0 284.8L910.1 286.5L908.9 289.6L907.8 290.7L911.8 290.4L912.1 289.2L914.9 288.5L917.0 287.3L920.6 287.1L923.2 284.4L924.3 284.9L923.7 286.7L924.1 287.9L926.8 289.3L929.5 290.7L932.4 292.1L935.2 293.4L938.2 294.8L939.1 290.9L940.1 287.0L941.1 283.1L942.3 279.2L943.5 275.3L944.8 271.5L946.2 267.6L947.7 263.7L949.3 259.9L951.0 256.1L952.8 252.3L954.7 248.5L956.7 244.7L958.9 240.9L961.2 237.2L959.7 237.1L958.2 237.1L956.7 237.1L955.2 237.0L953.7 237.0L952.2 236.9L950.7 236.9L949.2 236.8L947.8 236.8L946.3 236.8L944.8 236.7L943.4 236.7L941.9 236.6L940.4 236.5L939.0 236.5L937.5 236.4L936.1 236.4L934.7 236.3L933.2 236.2L931.8 236.2L930.4 236.1L928.9 236.0L927.5 236.0L926.1 235.9L924.7 235.8L923.3 235.8L921.9 235.7L920.6 235.6L919.2 235.5Z" fill="#c291dd" stroke="#c291dd" stroke-width=".7"/><path d="M870.1 301.5L872.4 301.7L875.3 303.5L878.4 303.0L880.1 303.1L881.0 306.1L882.2 307.2L884.0 306.2L885.0 309.4L886.7 311.7L890.0 313.1L893.4 314.5L896.2 318.0L893.6 322.0L892.6 322.8L890.6 322.9L890.3 325.2L888.6 327.4L885.2 330.7L882.1 329.3L879.0 327.8L875.9 326.3L872.9 324.9L869.9 323.4L866.9 321.8L864.0 320.3L861.1 318.7L862.4 314.5L863.7 310.3L865.3 306.1L867.0 302.0Z" fill="#c291dd" stroke="#c291dd" stroke-width=".7"/><path d="M894.7 331.6L897.2 332.3L897.6 336.3L894.3 336.3Z" fill="#7c3fa6" stroke="#7c3fa6" stroke-width=".7"/><path d="M897.8 332.3L897.6 336.3L902.9 337.3L903.7 335.6L903.6 333.7Z" fill="#c291dd" stroke="#c291dd" stroke-width=".7"/></g><g clip-path="url(#saa)"><path d="M903.9 330.4L907.2 330.4L910.4 330.5L910.4 331.4L909.0 332.5L908.9 334.5L910.0 337.8L913.8 338.9L913.5 343.8L914.4 345.6L911.6 345.7L911.3 352.7L910.8 352.2L907.3 348.9L905.2 347.3L903.0 346.1L900.3 347.1L900.4 342.4L900.6 337.7L902.9 337.3L903.7 335.6Z" fill="#c291dd" stroke="#c291dd" stroke-width=".7"/><path d="M910.4 330.5L913.7 330.7L916.9 330.9L920.2 331.1L923.5 331.3L922.3 336.2L921.5 337.9L920.7 340.3L921.1 341.2L918.9 341.9L917.0 341.7L917.5 343.8L915.9 346.2L914.4 345.6L913.5 343.8L913.8 338.9L910.0 337.8L908.9 334.5L909.0 332.5L910.4 331.4Z" fill="#c291dd" stroke="#c291dd" stroke-width=".7"/><path d="M922.3 336.2L925.2 337.3L924.9 339.9L924.0 345.2L922.1 345.2L921.9 341.2L921.1 341.2L920.7 340.3L921.5 337.9Z" fill="#545454" stroke="#545454" stroke-width=".7"/><path d="M925.2 337.3L928.4 338.6L928.3 344.3L926.1 344.6L924.0 345.2L924.9 339.9Z" fill="#545454" stroke="#545454" stroke-width=".7"/><path d="M928.4 338.6L932.6 339.9L930.9 341.9L929.4 344.3L928.3 344.3Z" fill="#c291dd" stroke="#c291dd" stroke-width=".7"/><path d="M932.6 339.9L930.9 341.9L929.4 344.3L928.3 344.3L926.1 344.6L924.0 345.2L922.1 345.2L921.9 341.2L921.1 341.2L918.9 341.9L917.0 341.7L917.5 343.8L915.9 346.2L914.4 345.6L911.6 345.7L911.3 352.7L908.1 354.1L907.2 357.0L908.8 359.8L911.1 361.8L912.7 361.8L916.4 360.0L917.1 362.8L920.2 365.0L922.2 365.1L922.7 368.7L924.7 368.6L925.8 370.9L925.6 373.5L926.0 376.1L928.2 376.5L930.1 378.7L930.1 380.8L931.2 382.7L929.4 384.2L928.1 386.9L929.8 387.8L933.1 391.4L936.8 393.0L938.6 388.8L940.5 384.7L942.5 380.6L944.7 376.5L946.9 372.4L949.3 368.3L951.7 364.2L954.2 360.1L950.9 357.0L947.6 353.9L944.4 350.8L941.1 347.7L937.9 344.5Z" fill="#c291dd" stroke="#c291dd" stroke-width=".7"/><path d="M895.0 351.2L900.1 351.7L901.5 353.9L902.5 351.9L905.2 349.2L905.5 347.3L907.3 348.9L910.8 352.2L911.3 352.7L908.1 354.1L907.2 357.0L908.8 359.8L911.1 361.8L912.7 361.8L913.2 363.9L913.2 366.4L912.8 368.4L913.5 369.8L913.1 370.4L912.3 371.5L909.1 372.4L905.8 373.2L902.6 374.0L900.8 369.5L899.2 364.9L897.7 360.4L896.3 355.8Z" fill="#c291dd" stroke="#c291dd" stroke-width=".7"/><path d="M895.0 344.4L898.3 344.9L901.6 345.3L903.0 346.1L905.2 347.3L905.5 347.3L905.2 349.2L902.5 351.9L901.5 353.9L900.1 351.7L895.0 351.2Z" fill="#d7b0ea" stroke="#d7b0ea" stroke-width=".7"/><path d="M912.7 361.8L916.4 360.0L917.1 362.8L920.2 365.0L922.2 365.1L922.7 368.7L924.7 368.6L925.8 370.9L924.4 372.6L921.2 374.3L921.2 376.5L918.1 376.5L916.7 377.4L915.2 375.5L914.2 372.4L913.1 370.4L913.5 369.8L912.8 368.4L913.2 366.4L913.2 363.9Z" fill="#545454" stroke="#545454" stroke-width=".7"/><path d="M925.6 373.5L926.0 376.1L928.2 376.5L930.1 378.7L930.1 380.8L929.3 383.2L926.4 383.1L924.2 378.8L921.2 376.5L921.2 374.3L924.4 372.6L925.8 370.9Z" fill="#c291dd" stroke="#c291dd" stroke-width=".7"/><path d="M928.1 386.9L929.8 387.8L933.1 391.4L936.8 393.0L933.5 393.7L930.2 394.5L928.1 391.3Z" fill="#545454" stroke="#545454" stroke-width=".7"/><path d="M912.3 371.5L913.1 370.4L914.2 372.4L915.2 375.5L916.7 377.4L915.6 379.7L916.2 383.0L915.7 387.0L916.5 391.0L917.1 395.0L918.0 399.6L918.3 402.9L920.0 406.8L920.5 410.1L920.9 412.8L922.7 415.3L925.9 416.1L926.4 416.5L928.1 420.3L925.3 421.2L922.5 422.0L919.8 422.9L917.7 419.0L915.7 415.1L913.9 411.2L912.2 407.3L910.6 403.3L909.2 399.3L907.9 395.4L906.6 391.4L905.5 387.4L904.5 383.4L903.6 379.4L902.9 375.4L902.2 371.4L905.6 371.4L908.9 371.5Z" fill="#c291dd" stroke="#c291dd" stroke-width=".7"/><path d="M916.7 377.4L918.1 376.5L921.2 376.5L924.2 378.8L926.4 383.1L929.3 383.2L931.2 382.7L929.4 384.2L928.1 386.9L928.1 391.3L930.2 394.5L931.6 398.8L933.0 403.2L934.6 407.5L936.2 411.8L937.9 416.1L939.7 420.4L936.8 420.4L933.9 420.4L931.0 420.4L928.1 420.3L926.4 416.5L925.9 416.1L922.7 415.3L920.9 412.8L920.5 410.1L920.0 406.8L918.3 402.9L918.0 399.6L917.1 395.0L916.5 391.0L915.7 387.0L916.2 383.0L915.6 379.7Z" fill="#c291dd" stroke="#c291dd" stroke-width=".7"/></g><g clip-path="url(#eaa)"><path d="M965.7 254.0L967.8 254.0L969.9 254.1L971.9 254.1L974.0 254.1L976.1 254.2L978.2 254.2L980.3 254.2L982.4 254.2L984.5 254.2L986.6 254.2L988.6 254.2L990.7 254.2L992.8 254.2L994.9 254.2L997.0 254.1L999.1 254.1L1001.2 254.1L1003.2 254.0L1005.3 254.0L1007.4 253.9L1007.5 256.8L1006.8 258.1L1008.0 260.1L1009.1 263.0L1009.3 264.9L1010.9 265.6L1008.8 268.8L1009.1 270.2L1009.2 272.7L1010.1 274.3L1012.2 274.9L1013.8 277.4L1014.8 279.3L1016.3 279.3L1017.9 281.6L1020.3 282.3L1022.2 282.6L1022.6 284.7L1021.2 285.9L1020.3 289.3L1025.8 293.1L1027.0 293.0L1027.8 293.5L1029.4 295.3L1028.7 295.7L1029.2 297.7L1027.5 298.6L1025.4 299.2L1023.4 299.3L1022.2 300.1L1021.7 300.6L1019.0 303.0L1015.0 302.7L1011.0 302.5L1007.7 302.1L1004.3 301.7L1001.0 301.3L998.5 300.6L996.4 297.8L991.1 297.8L987.4 299.0L983.8 300.2L980.8 300.6L977.6 300.0L974.5 299.4L971.5 299.3L968.6 299.3L965.6 299.3L962.7 299.2L959.8 299.2L956.8 299.1L957.4 295.0L957.9 290.9L958.6 286.8L959.2 282.7L960.0 278.6L960.8 274.5L961.6 270.3L962.5 266.2L963.5 262.1L964.6 258.1Z" fill="#c291dd" stroke="#c291dd" stroke-width=".7"/><path d="M989.6 272.9L992.0 272.4L995.4 271.1L996.2 269.0L995.8 266.4L997.0 264.5L997.9 261.6L999.3 258.6L1001.0 258.0L1002.8 258.3L1004.5 257.6L1006.8 258.1L1007.5 256.8L1007.4 253.9L1005.4 254.0L1003.3 254.0L1001.3 254.1L999.2 254.1L997.2 254.1L995.1 254.2L993.1 254.2L991.0 254.2L989.0 254.2L989.1 258.9L989.3 263.6L989.4 268.2Z" fill="#c291dd" stroke="#c291dd" stroke-width=".7"/><path d="M995.4 271.1L996.2 269.0L995.8 266.4L997.0 264.5L997.9 261.6L999.3 258.6L1001.0 258.0L1002.8 258.3L1004.1 261.8L1002.1 267.0L1000.5 273.5L996.5 275.8Z" fill="#c291dd" stroke="#c291dd" stroke-width=".7"/><path d="M993.1 276.4L994.8 276.5L995.8 276.2L996.9 275.7L996.3 274.9L995.2 272.5L992.9 273.3Z" fill="#c291dd" stroke="#c291dd" stroke-width=".7"/><path d="M974.4 300.0L979.0 299.4L978.9 297.4L979.4 296.1L979.6 293.0L978.4 292.8L974.8 292.5Z" fill="#c291dd" stroke="#c291dd" stroke-width=".7"/><path d="M1005.0 287.5L1006.3 285.0L1008.9 285.1L1010.4 284.6L1012.2 286.9L1013.8 288.4L1013.1 290.5L1012.8 292.7L1011.3 293.1L1008.1 293.7L1007.5 292.4L1007.3 289.8L1006.1 288.7Z" fill="#c291dd" stroke="#c291dd" stroke-width=".7"/><path d="M1006.0 295.4L1008.1 293.7L1011.3 293.1L1012.4 296.6L1010.0 301.8L1005.8 299.3Z" fill="#c291dd" stroke="#c291dd" stroke-width=".7"/><path d="M998.5 277.5L1002.2 276.4L1006.5 277.0L1007.2 279.2L1007.6 281.4L1006.6 283.6L1003.2 283.1L999.4 281.4Z" fill="#c291dd" stroke="#c291dd" stroke-width=".7"/><path d="M1006.6 277.4L1008.2 276.8L1008.9 275.0L1010.1 274.3L1012.2 274.9L1013.8 277.4L1014.8 279.3L1013.3 280.6L1010.1 280.3L1007.1 280.5Z" fill="#c291dd" stroke="#c291dd" stroke-width=".7"/><path d="M1004.0 274.6L1007.3 274.1L1008.9 275.0L1008.2 276.8L1006.6 277.4L1005.9 276.8L1004.4 275.7Z" fill="#c291dd" stroke="#c291dd" stroke-width=".7"/><path d="M1001.0 286.5L1001.9 285.1L1003.4 285.3L1004.8 284.4L1006.3 284.5L1007.0 285.0L1005.6 287.4L1003.6 287.8L1002.2 287.8Z" fill="#c291dd" stroke="#c291dd" stroke-width=".7"/><path d="M1001.6 284.3L1003.3 283.1L1006.5 283.6L1006.3 284.5L1004.8 284.4L1003.4 285.3L1001.9 285.1Z" fill="#c291dd" stroke="#c291dd" stroke-width=".7"/><path d="M998.8 288.4L1000.3 288.0L1001.4 287.0L1004.3 288.7L1003.9 289.1L1001.1 289.0L1000.3 290.3L1002.8 291.6L1003.8 292.2L1001.3 291.2L999.3 289.3Z" fill="#c291dd" stroke="#c291dd" stroke-width=".7"/><path d="M1021.4 300.5L1022.1 299.3L1024.2 299.4L1026.6 298.8L1027.5 298.6L1026.7 299.6L1026.9 302.3L1024.9 303.7L1022.2 304.2L1021.7 302.2Z" fill="#c291dd" stroke="#c291dd" stroke-width=".7"/><path d="M1022.2 308.8L1023.2 308.8L1024.4 306.4L1025.3 305.5L1024.9 303.7L1022.2 304.2L1021.8 305.0L1021.8 306.6Z" fill="#c291dd" stroke="#c291dd" stroke-width=".7"/><path d="M1020.6 306.5L1021.6 304.0L1022.1 304.9L1021.8 306.6L1021.6 308.8Z" fill="#c291dd" stroke="#c291dd" stroke-width=".7"/><path d="M1007.5 256.8L1006.8 258.1L1008.0 260.1L1009.1 263.0L1009.3 264.9L1010.9 265.6L1008.8 268.8L1009.1 270.2L1009.2 272.7L1010.1 274.3L1012.2 274.9L1013.8 277.4L1014.8 279.3L1016.3 279.3L1017.9 281.6L1020.3 282.3L1022.2 282.6L1022.6 284.7L1021.2 285.9L1021.0 288.0L1020.7 288.9L1023.9 290.6L1025.8 290.9L1027.8 291.5L1030.4 292.4L1032.3 292.5L1031.5 286.5L1030.8 284.4L1028.4 282.5L1029.4 281.2L1031.2 279.8L1035.0 280.6L1037.6 280.2L1040.3 280.4L1039.9 278.1L1038.8 276.4L1041.8 275.3L1044.7 274.1L1048.9 275.7L1051.3 275.3L1053.3 276.7L1056.6 278.9L1058.5 279.2L1060.4 279.5L1062.1 281.1L1064.2 281.3L1065.6 279.3L1067.5 278.7L1070.2 279.6L1071.2 276.8L1072.5 277.4L1075.1 277.3L1076.4 278.7L1079.3 278.4L1081.9 279.6L1083.6 279.6L1086.1 277.9L1088.7 278.2L1089.6 278.4L1089.4 276.9L1088.4 274.5L1088.8 273.3L1091.4 273.3L1093.4 273.6L1097.4 277.0L1100.5 278.1L1102.7 279.7L1104.9 278.5L1107.1 282.9L1105.4 283.4L1107.4 286.2L1107.6 287.0L1110.8 290.0L1113.4 289.7L1116.1 289.4L1118.8 289.1L1121.4 288.7L1124.0 288.4L1126.7 288.1L1128.3 286.3L1129.8 284.6L1131.2 282.8L1132.6 281.0L1133.8 279.2L1134.8 277.4L1135.8 275.6L1136.6 273.8L1137.4 272.0L1137.3 270.4L1132.4 266.6L1127.4 262.8L1122.2 259.3L1116.8 255.8L1111.3 252.6L1105.6 249.4L1099.8 246.4L1093.9 243.6L1087.9 240.9L1081.9 238.3L1081.0 238.4L1079.7 238.6L1078.3 238.8L1076.9 238.9L1075.6 239.1L1074.2 239.2L1072.8 239.4L1071.4 239.5L1069.9 239.7L1068.5 239.9L1067.0 240.0L1065.6 240.1L1064.1 240.3L1062.6 240.4L1061.1 240.6L1059.6 240.7L1058.1 240.9L1056.6 241.0L1055.0 241.1L1053.5 241.2L1051.9 241.4L1050.3 241.5L1048.8 241.6L1047.2 241.7L1045.6 241.8L1044.0 242.0L1042.4 242.1L1040.7 242.2L1039.1 242.3L1037.5 242.4L1035.8 242.5L1034.2 242.6L1032.5 242.7L1030.9 242.7L1029.2 242.8L1027.5 242.9L1025.8 243.0L1024.1 243.1L1022.5 243.1L1020.8 243.2L1019.0 243.3L1017.3 243.3L1015.6 243.4L1013.9 243.5L1012.2 243.5L1010.5 243.6L1008.7 243.6L1007.0 243.6L1005.3 243.7L1003.5 243.7L1005.0 248.1L1006.3 252.4Z" fill="#c291dd" stroke="#c291dd" stroke-width=".7"/><path d="M1064.6 281.1L1065.6 279.3L1067.5 278.7L1070.2 279.6L1071.2 276.8L1072.5 277.4L1075.1 277.3L1076.4 278.7L1079.3 278.4L1081.9 279.6L1083.6 279.6L1086.1 277.9L1088.7 278.2L1089.5 281.0L1091.9 281.1L1094.2 282.1L1092.3 282.4L1090.3 285.1L1089.6 287.0L1089.4 288.4L1086.8 288.8L1085.1 290.0L1080.3 289.0L1076.5 289.0L1074.6 287.1L1072.4 286.3L1069.8 286.0L1068.1 283.2L1065.2 282.0Z" fill="#545454" stroke="#545454" stroke-width=".7"/><path d="M1107.6 287.0L1107.4 286.2L1105.4 283.4L1107.1 282.9L1104.9 278.5L1102.7 279.7L1100.5 278.1L1097.4 277.0L1093.4 273.6L1091.4 273.3L1088.8 273.3L1088.4 274.5L1089.4 276.9L1089.6 278.4L1088.7 278.2L1089.5 281.0L1091.9 281.1L1094.2 282.1L1092.3 282.4L1090.3 285.1L1089.6 287.0L1089.4 288.4L1086.8 288.8L1085.1 290.0L1080.3 289.0L1076.5 289.0L1074.6 287.1L1072.4 286.3L1069.8 286.0L1068.1 283.2L1065.2 282.0L1064.2 281.3L1063.9 284.0L1061.8 284.3L1062.3 286.5L1060.7 287.0L1061.9 290.7L1060.8 292.1L1058.8 293.3L1057.1 294.6L1058.5 295.9L1059.0 297.4L1060.0 298.5L1062.6 299.7L1064.9 301.6L1064.5 303.6L1065.5 305.6L1067.8 306.6L1070.7 307.8L1073.0 308.9L1075.7 309.4L1076.6 308.9L1079.7 309.3L1082.3 307.6L1084.9 308.5L1087.2 312.2L1086.9 314.2L1088.9 316.8L1091.8 317.9L1091.9 316.2L1093.8 315.7L1096.7 316.0L1098.4 317.2L1103.7 321.9L1106.7 318.5L1109.5 315.0L1112.2 311.5L1110.6 307.0L1108.8 302.4L1106.8 297.9L1104.6 293.5L1103.9 290.9L1104.5 289.2L1105.8 288.2L1106.4 286.9Z" fill="#c291dd" stroke="#c291dd" stroke-width=".7"/><path d="M1056.7 315.5L1059.4 314.5L1058.4 311.9L1057.2 311.0L1058.5 309.9L1059.4 307.2L1061.1 305.8L1060.6 303.8L1059.5 301.8L1060.6 300.4L1062.6 299.7L1064.9 301.6L1064.5 303.6L1065.5 305.6L1067.8 306.6L1067.6 308.6L1071.3 310.2L1073.0 311.0L1076.4 311.2L1075.7 309.4L1077.0 310.7L1080.1 310.7L1079.7 309.3L1082.3 307.6L1084.9 308.5L1083.5 310.9L1083.4 314.7L1082.9 316.7L1081.6 315.1L1081.3 313.4L1078.2 311.9L1077.0 313.9L1078.6 317.3L1077.6 321.9L1076.5 326.6L1075.1 331.2L1073.6 335.8L1072.0 340.4L1068.5 336.4L1065.0 332.4L1061.5 328.5L1057.8 324.6L1054.2 320.6Z" fill="#c291dd" stroke="#c291dd" stroke-width=".7"/><path d="M1067.6 308.6L1067.8 306.6L1070.7 307.8L1073.0 308.9L1075.7 309.4L1076.4 311.2L1073.0 311.0L1071.3 310.2Z" fill="#545454" stroke="#545454" stroke-width=".7"/><path d="M1049.6 313.9L1050.0 310.8L1050.3 308.1L1049.5 308.3L1053.4 307.5L1054.0 305.6L1055.8 304.9L1056.3 302.9L1056.6 301.3L1056.2 299.0L1058.8 297.8L1060.0 298.5L1062.6 299.7L1060.6 300.4L1059.5 301.8L1060.6 303.8L1061.1 305.8L1059.4 307.2L1058.5 309.9L1057.2 311.0L1058.4 311.9L1059.4 314.5L1056.7 315.5L1052.9 318.1L1049.0 320.7Z" fill="#c291dd" stroke="#c291dd" stroke-width=".7"/><path d="M1028.7 295.7L1029.4 295.3L1033.2 296.8L1033.7 296.8L1038.9 298.2L1041.6 297.2L1044.2 297.8L1045.9 298.9L1046.5 300.6L1046.4 303.0L1047.3 305.6L1048.2 305.8L1047.8 307.8L1049.5 308.3L1050.3 308.1L1050.0 310.8L1049.6 313.9L1045.9 313.8L1044.2 312.7L1041.5 312.3L1038.9 311.5L1037.0 309.2L1035.3 308.0L1034.6 307.2L1034.2 306.6L1034.0 304.6L1032.1 303.8L1031.3 302.1L1031.3 300.4L1030.1 298.4L1029.2 297.7Z" fill="#c291dd" stroke="#c291dd" stroke-width=".7"/><path d="M1021.6 308.8L1023.2 308.8L1024.4 306.4L1025.3 305.5L1026.7 305.6L1028.5 306.6L1031.6 309.0L1033.4 309.1L1034.4 309.2L1035.4 309.8L1037.4 311.8L1039.1 315.3L1039.5 315.4L1040.1 317.0L1043.4 317.3L1044.1 318.2L1043.7 320.8L1040.7 322.2L1037.7 322.8L1035.7 324.9L1035.2 324.5L1032.5 324.4L1031.8 324.3L1031.4 325.7L1028.5 327.6L1025.8 322.8L1022.9 318.1L1020.1 313.4Z" fill="#c291dd" stroke="#c291dd" stroke-width=".7"/><path d="M1024.9 303.7L1026.9 302.3L1026.7 299.6L1027.5 298.6L1029.2 297.7L1030.1 298.4L1031.3 300.4L1031.3 302.1L1032.1 303.8L1034.0 304.6L1034.2 306.6L1034.6 307.2L1034.4 309.2L1033.4 309.1L1031.6 309.0L1028.5 306.6L1026.7 305.6L1025.3 305.5Z" fill="#545454" stroke="#545454" stroke-width=".7"/><path d="M1082.4 318.9L1082.1 317.8L1082.9 316.7L1083.4 314.7L1083.5 310.9L1084.9 308.5L1087.2 312.2L1086.9 314.2L1088.9 316.8L1090.6 317.5L1090.6 319.1L1088.6 320.1L1088.5 322.4L1090.1 324.7L1090.4 327.2L1092.0 330.6L1091.4 333.4L1091.1 334.1L1086.6 333.8L1082.2 333.5L1081.7 329.0L1081.0 324.5L1080.2 320.0Z" fill="#545454" stroke="#545454" stroke-width=".7"/><path d="M1090.6 319.1L1088.6 320.1L1088.5 322.4L1090.1 324.7L1090.4 327.2L1092.0 330.6L1091.4 333.4L1091.1 334.1L1091.5 336.8L1093.5 338.3L1094.5 339.3L1095.5 338.6L1097.1 333.3L1095.6 331.1L1094.6 328.5L1095.4 327.3L1097.5 327.3L1097.6 325.2L1096.5 324.1L1095.4 322.3L1093.9 322.4L1092.5 323.0L1091.7 320.3Z" fill="#c291dd" stroke="#c291dd" stroke-width=".7"/><path d="M1091.9 316.2L1093.8 315.7L1096.7 316.0L1098.4 317.2L1103.7 321.9L1103.7 327.5L1103.5 333.1L1098.4 336.0L1097.5 332.6L1098.1 332.0L1099.1 330.9L1100.4 329.7L1099.9 326.9L1099.7 324.8L1098.3 323.8L1096.8 321.7L1095.0 320.4L1094.8 318.8L1093.0 317.4Z" fill="#c291dd" stroke="#c291dd" stroke-width=".7"/><path d="M1093.5 338.3L1094.5 339.3L1095.5 338.6L1098.9 344.4L1096.8 348.5L1092.4 343.0L1091.5 336.8Z" fill="#c291dd" stroke="#c291dd" stroke-width=".7"/><path d="M1107.3 293.6L1108.7 292.2L1110.6 292.9L1113.2 298.5L1108.9 298.8L1106.9 294.0Z" fill="#c291dd" stroke="#c291dd" stroke-width=".7"/><path d="M1011.3 306.2L1011.7 310.4L1012.0 314.5L1012.2 318.6L1016.4 318.6L1020.5 318.6L1024.6 318.5L1022.9 315.9L1021.6 308.8L1020.6 306.5L1016.2 304.3Z" fill="#c291dd" stroke="#c291dd" stroke-width=".7"/><path d="M980.4 300.8L984.0 301.8L984.5 303.9L984.2 305.6L982.5 306.9L981.1 308.4L977.4 310.1L977.3 313.6L973.9 313.6L973.8 316.8L972.6 317.7L972.7 319.6L968.4 320.0L964.4 317.4L960.4 314.8L963.7 311.7L967.0 308.6L970.2 305.5L973.3 302.4L976.4 299.4Z" fill="#c291dd" stroke="#c291dd" stroke-width=".7"/><path d="M989.1 339.0L989.1 335.5L990.0 332.0L990.5 329.7L992.6 329.5L995.8 330.6L999.5 330.2L1000.6 329.4L1001.6 331.0L1001.3 332.9L1000.4 335.5L999.3 336.8L998.8 338.1L997.4 338.2L996.6 340.0L995.4 341.2L991.6 344.6L989.1 344.6Z" fill="#c291dd" stroke="#c291dd" stroke-width=".7"/><path d="M982.8 340.7L983.1 338.1L983.4 336.6L983.2 332.9L986.1 332.8L986.6 334.9L986.7 336.8L987.5 339.3L987.5 343.3L982.8 343.3Z" fill="#c291dd" stroke="#c291dd" stroke-width=".7"/><path d="M1009.6 364.0L1011.7 364.0L1011.8 361.4L1013.4 361.8L1015.5 362.5L1016.5 363.4L1017.5 364.4L1017.9 363.0L1017.3 360.8L1016.8 358.2L1019.1 357.9L1021.4 359.5L1021.6 363.3L1020.8 365.3L1018.1 367.4L1016.3 368.6L1014.6 370.4L1012.7 370.2L1010.8 369.9L1009.4 368.1Z" fill="#a56fd0" stroke="#a56fd0" stroke-width=".7"/><path d="M1003.0 384.1L1006.6 383.9L1006.8 379.2L1009.9 379.9L1012.6 380.2L1014.2 377.7L1016.8 376.0L1018.7 376.2L1019.3 378.3L1019.1 380.8L1019.9 382.1L1020.4 387.4L1020.8 392.6L1017.5 392.8L1014.2 393.0L1010.9 393.1L1007.6 393.3L1004.3 393.5L1001.0 393.7L999.8 388.5L998.5 383.3Z" fill="#c291dd" stroke="#c291dd" stroke-width=".7"/><path d="M1013.6 385.5L1014.7 384.2L1016.1 384.8L1015.7 386.3L1014.5 386.8L1013.7 386.3Z" fill="#545454" stroke="#545454" stroke-width=".7"/></g><path d="M905.0 250.7L909.2 247.5L912.6 248.2L916.0 250.7L918.0 254.6L916.0 256.0L911.1 255.6L907.2 254.6ZM913.1 245.3L917.0 243.8L922.4 243.3L923.4 245.8L921.4 247.7L917.0 248.2L914.6 247.2ZM924.3 243.3L928.3 242.4L932.2 243.3L934.1 245.8L936.6 247.7L935.1 248.7L929.2 248.2L925.3 247.2ZM932.2 241.9L938.0 239.9L943.9 239.2L952.7 239.7L946.3 242.8L939.0 246.3L936.6 247.7L933.6 245.8ZM919.4 250.2L924.3 249.2L926.8 250.7L926.3 254.6L924.3 257.0L920.9 256.5L918.5 253.6ZM929.2 250.7L935.6 250.7L937.5 253.1L940.0 258.0L941.0 260.9L937.1 263.9L934.1 265.8L932.2 267.3L930.2 263.9L932.7 260.4L929.2 259.0L927.3 256.5ZM922.4 260.4L926.3 259.5L929.2 261.4L926.8 263.4L923.4 263.4Z" fill="#c291dd"/><path d="M911.1 268.3L913.6 264.9L918.0 262.7L922.4 262.4L925.3 265.3L924.3 270.2L922.4 273.2L919.4 274.6L918.5 278.5L916.5 278.1L916.5 274.1L912.6 271.7Z" fill="#343434"/><path d="M902.4 284.1L905.5 282.6L907.1 281.6L909.1 281.9L909.0 284.3L907.2 284.7L906.1 283.6L903.7 284.4ZM903.4 290.6L905.1 287.3L906.4 285.5L907.8 285.6L906.6 287.7L904.9 290.0ZM908.5 285.7L910.6 285.7L911.9 286.6L911.7 287.6L910.1 288.0L908.9 289.6L908.4 288.2ZM907.3 291.2L909.6 290.0L912.0 289.9L911.9 290.4L909.8 291.1L907.9 291.7ZM911.5 289.3L914.4 288.5L915.3 288.3L914.6 289.3L912.7 289.4Z" fill="#343434"/><path d="M981.1 282.5L983.1 282.2L985.3 281.7L987.5 281.1L987.7 279.1L986.5 278.2L985.8 276.8L984.8 275.4L984.3 274.9L984.7 272.9L983.7 271.5L982.1 271.5L981.0 272.9L981.5 274.5L981.9 276.1L983.4 276.3L983.6 277.6L983.5 278.3L982.2 279.0L982.5 279.6L981.7 280.4L983.1 280.8L982.2 281.1Z" fill="#c291dd"/><path d="M980.9 279.8L980.8 277.6L981.5 276.8L980.9 275.9L979.8 275.7L978.8 276.6L977.6 277.2L977.7 278.4L977.8 279.4L977.1 280.3L978.9 280.5Z" fill="#c291dd"/><path d="M969.2 264.4L968.0 262.4L969.4 261.3L972.7 261.6L975.3 261.5L975.9 262.9L974.6 264.1L971.8 265.2L969.1 264.6Z" fill="#c291dd"/><path d="M942.5 245.3L945.5 244.2L948.4 243.1L951.0 241.9L953.5 240.7L955.2 240.6L956.9 240.5L958.6 240.4L960.3 240.3L962.0 240.2L963.9 240.0L965.7 239.7L967.6 239.5L969.4 239.2L971.0 239.7L972.6 240.1L974.3 240.6L976.0 241.0L977.7 241.5L979.5 241.9L976.9 244.2L974.1 246.4L974.8 249.0L972.0 253.4L970.7 256.3L967.4 258.5L965.1 258.8L962.8 259.1L958.3 261.8L955.2 263.4L951.3 269.1L947.8 267.7L947.1 264.4L947.3 261.1L947.6 257.9L949.6 255.4L949.2 252.8L949.4 248.9L947.2 248.3L945.0 247.8L943.7 246.6Z" fill="#545454"/><path d="M992.8 245.8L995.5 243.8L998.7 244.1L1002.0 244.4L1000.1 246.0L998.0 247.7L996.1 247.4L994.2 247.1Z" fill="#c291dd"/><path d="M1021.9 254.1L1023.6 252.1L1024.3 248.8L1026.2 247.9L1028.1 247.0L1027.2 249.3L1026.3 251.3L1025.3 253.3L1024.6 255.3Z" fill="#c291dd"/><path d="M1040.2 243.5L1040.8 242.2L1041.3 240.9L1046.7 243.0L1045.1 243.1L1043.5 243.2L1041.8 243.4Z" fill="#c291dd"/><path d="M1069.4 245.2L1071.2 244.4L1073.4 244.6L1075.6 244.7L1074.2 245.4L1072.7 246.1Z" fill="#c291dd"/><path d="M897.9 317.6L900.7 316.6L903.4 316.1L905.6 317.9L908.7 320.2L905.2 320.5L904.5 318.3L902.1 317.6L899.5 317.2Z" fill="#545454"/><path d="M908.1 322.4L910.1 320.6L913.0 320.9L914.4 322.4L912.2 322.9L910.1 323.0Z" fill="#545454"/><path d="M1038.7 362.9L1039.6 367.5L1038.3 370.1L1036.1 376.0L1034.7 379.6L1032.6 380.5L1031.5 377.8L1031.3 375.2L1032.8 371.3L1032.6 369.4L1035.4 367.4L1037.1 364.8Z" fill="#545454"/><path d="M1071.3 334.0L1073.8 337.0L1073.3 338.8L1071.9 339.1L1071.4 336.1Z" fill="#545454"/><path d="M1114.5 298.4L1114.9 296.3L1117.5 295.6L1117.6 293.4L1118.8 291.3L1117.4 288.5L1118.0 287.2L1120.1 289.7L1121.7 293.9L1122.2 296.1L1121.1 296.7L1119.7 297.1L1118.7 298.3L1116.2 297.8Z" fill="#c291dd"/><path d="M1113.7 299.1L1115.5 298.4L1116.8 301.8L1115.8 302.3Z" fill="#c291dd"/><path d="M1116.7 299.6L1117.8 297.7L1118.3 298.9Z" fill="#c291dd"/><path d="M1116.5 287.1L1113.8 281.7L1118.6 283.1L1119.5 284.2L1119.0 286.1L1115.9 285.7Z" fill="#c291dd"/><path d="M1113.6 280.8L1111.4 276.6L1104.4 269.8L1108.0 274.1L1111.3 278.1Z" fill="#c291dd"/><path d="M1110.3 314.5L1110.1 311.4L1111.1 311.7L1111.3 315.9Z" fill="#c291dd"/><path d="M1099.8 320.4L1101.4 319.0L1102.1 319.7L1101.0 321.7Z" fill="#c291dd"/><path d="M1111.8 320.9L1114.1 320.8L1115.3 324.3L1117.7 328.5L1114.8 327.5L1113.7 326.5L1112.3 324.0Z" fill="#c291dd"/><path d="M1116.7 337.1L1118.6 334.9L1120.0 333.0L1121.5 337.1L1120.6 338.8L1118.9 337.4Z" fill="#c291dd"/><path d="M1117.2 332.1L1119.6 330.6L1117.8 329.2L1115.9 330.7Z" fill="#c291dd"/><path d="M1111.4 335.4L1113.6 331.5L1112.6 333.7Z" fill="#c291dd"/><path d="M1103.2 345.1L1103.8 344.3L1105.4 345.0L1107.4 342.6L1109.9 339.4L1111.4 337.2L1113.7 339.8L1112.7 340.9L1112.5 345.4L1113.7 345.7L1111.3 348.6L1110.9 352.1L1109.0 352.8L1106.4 351.6L1104.8 351.4L1103.9 349.3Z" fill="#c291dd"/><path d="M1088.3 339.5L1090.7 340.0L1093.8 343.3L1097.5 345.8L1098.4 349.2L1099.9 351.7L1099.5 355.2L1098.1 355.3L1095.9 352.7L1094.1 349.2L1092.0 344.8L1089.7 342.1Z" fill="#c291dd"/><path d="M1098.8 356.6L1100.3 355.5L1104.4 356.8L1106.7 356.9L1108.6 358.0L1108.4 359.4L1104.3 358.6L1100.1 357.6Z" fill="#c291dd"/><path d="M1109.6 358.7L1113.3 359.0L1117.1 358.9L1117.3 359.6L1113.2 360.0L1110.0 359.9Z" fill="#c291dd"/><path d="M1118.5 360.5L1122.2 359.3L1119.4 361.8L1117.8 361.9Z" fill="#c291dd"/><path d="M1114.2 355.0L1114.2 352.1L1113.7 351.1L1114.8 346.9L1115.6 346.0L1120.3 344.8L1118.8 346.4L1115.6 346.4L1116.6 348.6L1118.7 348.6L1117.1 351.4L1118.0 353.9L1116.4 354.0L1115.5 351.1L1115.2 355.0Z" fill="#c291dd"/><path d="M1123.1 344.5L1124.5 345.7L1123.6 348.3L1122.9 346.9Z" fill="#c291dd"/><path d="M1123.5 351.5L1126.2 351.7L1126.5 352.7L1123.8 352.4Z" fill="#c291dd"/><path d="M1126.8 349.0L1130.1 348.5L1131.6 352.1L1134.3 349.5L1137.5 351.0L1141.2 352.8L1142.6 355.1L1144.1 356.4L1143.3 358.9L1144.6 360.8L1145.9 362.8L1143.3 362.4L1142.2 359.2L1139.5 359.4L1138.7 360.9L1136.6 360.7L1134.7 359.1L1133.8 355.3L1130.9 353.6L1128.6 353.1L1127.8 351.2L1129.5 350.5Z" fill="#545454"/><path d="M1145.3 355.5L1147.4 355.5L1149.4 353.6L1148.8 355.1L1146.9 356.7L1145.2 356.4Z" fill="#545454"/><path d="M1152.1 356.4L1154.0 358.7L1156.8 361.2L1158.1 362.8L1155.5 362.4L1152.9 358.7Z" fill="#545454"/><path d="M1103.8 378.0L1104.6 377.8L1107.7 376.2L1110.3 375.5L1112.5 374.9L1114.7 371.4L1116.1 370.8L1118.3 368.0L1120.6 367.0L1122.4 368.8L1124.1 366.0L1125.3 364.9L1127.0 363.9L1128.5 364.7L1130.6 364.8L1131.4 365.2L1129.2 369.1L1132.4 373.0L1133.8 373.1L1136.2 366.5L1137.8 363.1L1137.9 368.0L1139.4 369.6L1138.7 374.8L1140.2 379.5L1141.1 382.6L1141.8 385.7L1140.1 390.3L1137.7 393.8L1135.1 396.6L1131.5 400.0L1129.0 402.7L1127.1 402.9L1124.3 404.6L1123.6 403.1L1120.4 402.7L1120.1 400.9L1121.1 398.8L1120.4 398.7L1121.2 396.6L1121.7 395.1L1120.3 397.2L1118.3 397.6L1119.1 394.9L1118.5 394.1L1116.3 392.5L1113.1 392.9L1108.6 394.0L1107.5 395.3L1103.9 395.1L1101.6 396.3L1099.2 395.3L1100.3 393.8L1101.3 392.0L1101.6 389.2L1102.2 385.0L1101.8 383.9L1103.1 381.5Z" fill="#c291dd"/><path d="M1121.3 406.6L1124.3 407.3L1122.3 409.4L1120.3 410.8L1119.6 410.6L1120.3 408.7Z" fill="#c291dd"/><path d="M1152.4 401.1L1152.4 403.4L1151.6 406.1L1153.6 406.8L1151.2 408.8L1149.0 410.1L1145.9 411.8L1145.9 411.2L1148.4 408.8L1147.7 408.4L1151.1 405.2L1151.8 402.3Z" fill="#c291dd"/><path d="M1145.3 409.9L1145.0 411.8L1142.9 413.2L1141.1 414.5L1139.0 415.1L1136.4 417.0L1134.3 417.7L1133.2 416.6L1135.6 415.1L1138.9 413.6L1142.7 411.5Z" fill="#c291dd"/><path d="M998.3 297.9L1001.4 297.6L1001.0 299.7L998.5 298.6Z" fill="#c291dd"/><path d="M994.1 294.2L995.6 293.9L995.5 296.7L994.3 296.8Z" fill="#c291dd"/><path d="M994.3 291.8L995.1 291.6L995.3 293.6L994.6 293.6Z" fill="#c291dd"/><path d="M1009.4 301.1L1012.2 301.4L1010.5 301.9Z" fill="#c291dd"/><path d="M1018.1 301.6L1020.3 300.8L1019.9 302.2L1018.5 302.1Z" fill="#c291dd"/><path d="M1126.8 349.0L1130.1 348.5L1131.6 352.1L1134.3 349.5L1137.5 351.0L1137.2 355.8L1136.6 360.7L1134.7 359.1L1133.8 355.3L1130.9 353.6L1128.6 353.1L1127.8 351.2L1129.5 350.5Z" fill="#c291dd"/></svg><svg class="ab" style="left:0;top:0" width="1600" height="900"><defs><clipPath id="nab"><path d="M1302.7 335.7L1301.3 336.4L1299.6 337.3L1298.6 336.6L1297.0 335.9L1296.0 335.7L1293.8 333.6L1293.9 332.0L1292.3 329.6L1290.3 328.8L1288.3 328.1L1287.0 325.7L1285.6 325.0L1283.4 325.6L1281.4 324.9L1279.0 323.3L1276.7 321.8L1275.2 318.8L1275.9 316.9L1275.3 314.5L1274.3 312.1L1273.5 310.2L1272.7 308.2L1272.2 306.2L1272.3 303.6L1271.0 302.8L1270.5 305.1L1271.0 307.3L1271.0 310.1L1271.5 313.4L1271.6 315.2L1270.6 312.9L1270.6 310.8L1269.1 308.2L1269.9 306.9L1269.1 304.3L1269.1 301.5L1268.7 299.3L1267.1 298.4L1267.3 295.5L1267.6 293.8L1267.9 291.0L1269.1 288.2L1270.7 285.9L1273.2 282.3L1274.7 279.4L1275.9 279.8L1276.9 278.7L1276.4 277.3L1275.0 275.7L1276.2 273.2L1276.7 270.9L1277.0 269.5L1277.3 266.9L1277.0 265.5L1277.1 262.5L1275.0 262.0L1273.0 261.5L1270.5 261.0L1268.1 262.5L1265.5 263.5L1262.0 265.0L1258.0 266.2L1253.0 267.8L1256.0 266.0L1260.0 264.2L1261.5 262.0L1261.5 259.5L1263.1 256.9L1266.5 255.3L1264.5 254.0L1263.7 253.0L1263.0 252.0L1266.0 250.0L1268.7 249.0L1269.3 250.5L1270.0 252.0L1273.4 250.5L1276.0 249.2L1279.0 249.0L1282.0 248.8L1285.1 248.5L1286.3 249.3L1287.6 250.0L1289.0 250.8L1290.5 251.5L1290.0 251.6L1292.0 252.1L1294.0 252.6L1296.5 252.7L1298.9 252.8L1301.4 253.0L1303.8 253.1L1304.5 254.7L1305.2 256.4L1307.6 256.8L1310.0 257.2L1313.0 257.3L1316.0 257.5L1317.6 259.4L1319.4 261.4L1321.4 262.4L1324.3 263.4L1326.7 263.5L1329.2 263.6L1331.2 267.8L1334.1 270.2L1331.3 270.0L1328.4 269.7L1329.7 270.4L1332.8 268.3L1333.7 271.7L1333.9 274.3L1335.9 275.7L1336.3 278.4L1336.1 279.5L1334.4 279.9L1331.7 281.2L1328.7 281.0L1325.9 281.2L1323.4 282.4L1320.7 284.6L1323.7 282.9L1326.4 282.3L1327.3 282.8L1326.2 284.1L1326.1 285.7L1328.0 287.0L1330.0 286.4L1330.0 287.0L1328.2 287.8L1325.5 288.7L1323.6 289.5L1323.7 288.2L1325.5 287.4L1323.1 287.7L1320.9 288.6L1319.5 289.4L1318.4 290.8L1318.8 291.9L1316.7 292.4L1314.6 293.1L1314.1 294.6L1312.9 295.4L1311.1 297.8L1311.0 299.8L1309.2 301.0L1306.7 302.7L1304.2 304.5L1303.2 306.8L1303.3 311.6L1302.4 313.4L1301.8 313.1L1301.6 311.1L1301.0 309.5L1301.4 307.8L1300.5 306.7L1299.0 306.9L1297.1 306.2L1295.1 306.2L1294.8 307.8L1293.2 307.5L1290.4 306.8L1288.5 308.1L1286.3 309.5L1285.2 312.2L1283.9 316.3L1283.8 318.7L1284.7 321.1L1286.0 322.3L1288.2 321.8L1289.9 321.3L1291.1 318.6L1293.7 318.0L1294.7 318.0L1293.7 320.7L1292.5 323.4L1291.8 325.6L1293.9 325.7L1296.4 326.6L1297.0 327.6L1296.3 330.9L1296.1 332.4L1297.2 334.3L1298.7 335.2L1300.4 334.2L1302.4 335.5Z"/></clipPath><clipPath id="sab"><path d="M1302.7 335.6L1303.2 335.6L1304.7 333.1L1306.2 332.0L1308.4 331.3L1309.2 330.6L1309.6 332.5L1310.9 331.8L1312.5 333.0L1314.9 333.1L1318.1 333.0L1319.6 333.9L1320.2 335.8L1322.1 336.6L1323.6 338.8L1326.3 339.3L1328.4 339.8L1330.0 341.6L1331.0 344.8L1331.6 345.8L1333.1 348.7L1336.4 348.9L1340.1 350.7L1343.4 351.7L1345.5 353.7L1347.5 354.3L1348.0 356.5L1347.6 358.9L1345.8 361.5L1343.9 364.7L1343.9 370.0L1342.9 373.9L1341.6 377.0L1339.1 377.5L1336.2 379.6L1335.5 381.8L1335.6 384.5L1334.4 387.8L1332.9 390.7L1332.2 392.3L1330.9 393.0L1328.8 392.5L1327.2 392.2L1328.7 394.5L1329.4 397.1L1328.2 398.2L1325.4 398.6L1325.5 400.7L1323.2 401.1L1324.2 403.0L1324.3 404.6L1324.5 406.6L1323.2 408.4L1325.3 410.2L1324.5 412.5L1324.0 413.9L1325.5 416.2L1326.6 419.1L1328.6 419.6L1328.4 420.8L1325.8 420.0L1322.7 417.9L1320.1 416.1L1317.2 411.6L1316.5 407.6L1315.7 403.0L1313.8 397.7L1313.9 394.4L1313.6 389.7L1312.6 385.1L1312.7 381.1L1312.2 376.4L1311.4 371.8L1308.9 369.8L1305.4 367.2L1304.0 364.6L1301.5 360.6L1299.6 357.2L1298.1 353.5L1299.1 351.6L1298.4 349.2L1299.3 346.1L1300.5 345.1L1302.1 342.5L1302.3 338.4L1301.9 337.3Z"/></clipPath><clipPath id="eab" clip-rule="evenodd"><path clip-rule="evenodd" d="M1379.7 300.7L1379.0 299.6L1378.0 299.1L1376.5 299.4L1376.7 297.4L1376.0 297.0L1376.6 295.2L1376.8 292.9L1376.4 291.6L1377.7 290.7L1381.0 291.1L1383.5 291.1L1384.1 289.4L1384.1 287.5L1383.2 286.3L1381.0 285.3L1380.9 284.4L1383.4 284.3L1383.9 283.0L1385.4 283.3L1386.6 282.3L1386.9 281.3L1388.3 280.7L1388.9 279.6L1389.4 278.7L1391.2 278.2L1392.6 277.9L1392.6 276.1L1392.1 275.4L1392.0 273.7L1393.6 272.8L1394.1 273.1L1393.9 274.6L1394.5 274.8L1393.7 276.1L1394.6 276.9L1396.0 276.7L1397.5 277.5L1399.4 276.7L1401.2 276.4L1402.3 276.2L1403.4 275.7L1402.9 273.8L1403.6 272.6L1405.0 273.4L1405.5 272.2L1404.5 270.6L1406.4 270.0L1408.1 270.1L1409.8 269.5L1408.7 269.2L1406.7 269.0L1403.9 269.7L1402.5 268.6L1402.5 267.6L1401.8 266.2L1402.6 264.5L1404.3 263.1L1404.4 262.3L1403.4 262.0L1401.9 262.5L1401.5 263.6L1400.4 265.1L1399.2 266.2L1399.0 268.3L1400.5 269.6L1399.6 270.2L1399.1 273.2L1398.8 274.5L1397.4 275.4L1396.2 275.6L1395.9 274.6L1395.1 272.6L1394.3 271.1L1393.8 270.6L1392.1 272.0L1390.2 272.0L1389.6 270.6L1389.2 268.4L1389.3 266.7L1391.4 265.2L1392.9 264.1L1394.3 262.6L1395.2 260.2L1396.5 258.7L1397.7 257.3L1399.4 256.7L1401.7 255.7L1403.1 255.1L1405.1 255.4L1407.0 256.1L1408.8 257.4L1411.5 258.0L1414.9 259.4L1415.9 261.1L1413.8 261.5L1410.1 260.7L1411.4 261.8L1411.7 263.5L1413.8 264.2L1415.8 263.3L1417.8 261.1L1417.2 258.2L1419.0 258.6L1421.4 258.2L1423.8 257.9L1426.7 257.2L1427.8 256.0L1432.1 256.6L1434.6 257.7L1432.0 254.2L1431.3 251.8L1433.5 251.8L1435.7 254.6L1438.7 257.3L1437.0 252.9L1437.8 250.5L1439.7 250.1L1441.5 249.7L1440.2 248.4L1442.0 247.5L1443.8 246.7L1445.6 245.5L1447.1 244.5L1449.0 245.3L1452.4 245.5L1455.0 246.3L1457.5 248.7L1460.8 248.7L1462.9 248.8L1465.1 248.9L1469.0 249.3L1467.1 248.0L1473.2 249.9L1474.2 249.2L1475.2 248.4L1476.9 248.3L1478.7 248.1L1482.3 248.6L1484.8 249.2L1486.6 248.9L1488.4 248.6L1491.8 249.8L1494.6 249.2L1495.7 248.4L1497.4 248.2L1499.1 248.0L1502.9 248.5L1510.3 252.6L1510.4 253.3L1513.2 255.7L1512.6 257.0L1513.7 259.4L1510.6 259.7L1509.7 260.5L1511.6 262.9L1514.7 265.0L1517.7 269.4L1518.1 272.4L1514.8 269.9L1509.5 265.6L1508.6 263.8L1506.4 260.1L1504.5 259.0L1504.7 262.2L1503.1 262.6L1500.3 263.0L1496.9 263.5L1497.5 266.0L1499.4 270.8L1503.0 271.5L1506.3 274.2L1508.6 277.6L1508.8 280.1L1509.3 284.4L1506.9 285.6L1506.6 287.0L1506.7 288.8L1507.8 292.3L1510.6 295.7L1511.0 296.8L1509.3 297.7L1508.7 297.9L1506.9 293.9L1505.3 293.6L1504.1 291.3L1502.9 290.8L1501.2 292.4L1500.9 292.6L1500.3 290.2L1499.2 289.9L1498.2 292.4L1497.8 293.3L1499.8 294.7L1500.6 295.0L1503.1 294.4L1502.1 296.5L1501.8 298.2L1504.2 300.6L1506.5 302.5L1506.9 304.4L1507.6 304.9L1507.6 308.6L1507.2 311.1L1505.8 314.0L1503.2 315.8L1500.5 317.1L1500.4 318.8L1499.1 317.1L1497.3 317.1L1496.4 318.7L1495.9 320.8L1497.1 322.8L1500.1 325.8L1501.1 329.0L1501.3 330.9L1499.2 332.7L1497.4 335.2L1496.9 333.0L1494.9 331.9L1494.1 330.3L1492.2 328.6L1491.4 330.0L1491.0 333.4L1491.7 334.3L1492.7 337.1L1493.9 337.7L1496.0 340.9L1496.3 343.3L1497.2 345.2L1496.2 345.3L1493.9 343.3L1492.7 339.8L1490.3 335.9L1490.2 332.7L1488.6 326.8L1487.5 324.1L1484.9 325.3L1484.1 321.9L1481.3 318.5L1480.4 316.5L1479.2 317.2L1477.5 317.7L1475.8 319.0L1474.2 320.9L1472.0 324.2L1470.0 326.3L1470.3 329.0L1470.3 333.0L1468.1 336.3L1466.9 334.7L1465.7 331.7L1463.6 327.4L1461.7 321.8L1461.1 319.1L1458.2 319.2L1456.4 317.1L1454.8 315.3L1453.7 313.3L1451.6 313.6L1448.5 313.9L1444.2 313.2L1442.7 311.4L1441.4 312.3L1437.7 310.6L1435.9 307.8L1434.4 307.9L1433.7 308.0L1434.6 310.1L1436.0 311.8L1436.8 313.1L1437.6 314.6L1438.1 313.2L1438.5 315.3L1441.0 315.5L1442.8 313.6L1443.0 312.4L1443.9 315.3L1445.8 316.0L1447.3 317.5L1446.3 320.1L1445.7 322.2L1443.6 324.1L1440.4 326.7L1437.2 328.8L1433.0 330.4L1431.3 330.6L1430.3 326.7L1429.4 324.3L1427.4 320.8L1425.7 318.5L1423.3 314.0L1421.1 310.6L1420.6 308.8L1420.2 310.8L1418.2 308.3L1419.5 311.8L1421.9 315.9L1424.0 319.8L1425.7 323.7L1427.2 326.9L1428.9 328.5L1431.3 331.5L1432.7 333.6L1435.3 332.6L1439.8 331.7L1440.0 333.5L1439.2 336.7L1437.3 340.6L1434.6 344.5L1431.9 347.8L1429.8 349.5L1428.1 351.7L1427.2 355.0L1427.4 357.6L1428.4 360.8L1428.2 366.1L1426.9 368.7L1424.1 370.3L1421.8 373.2L1422.0 377.1L1419.0 380.8L1418.7 383.5L1416.6 386.1L1413.2 389.7L1410.8 391.2L1407.6 391.2L1405.0 392.2L1403.5 391.3L1403.4 389.2L1402.0 384.1L1400.8 381.4L1400.3 376.2L1397.8 370.4L1397.7 368.5L1398.6 364.2L1399.8 361.1L1399.3 358.5L1398.4 354.9L1398.0 353.6L1395.4 350.4L1395.2 346.5L1395.5 343.9L1395.7 342.0L1394.3 341.2L1391.6 341.6L1390.0 339.0L1387.9 339.0L1386.3 339.5L1383.1 341.0L1380.9 340.4L1377.2 341.5L1375.0 340.0L1372.9 338.4L1371.0 336.2L1369.4 333.2L1367.5 331.1L1367.3 329.3L1366.7 328.1L1367.8 326.5L1368.1 321.9L1367.5 320.0L1368.6 316.5L1370.3 313.5L1371.7 311.5L1373.5 310.7L1375.3 309.0L1375.4 307.1L1376.7 304.1L1378.4 303.2L1379.4 300.9L1380.0 300.8L1383.0 301.8L1386.2 300.0L1388.6 299.6L1393.6 299.5L1395.2 299.1L1396.0 299.5L1395.5 300.9L1396.2 301.7L1395.4 303.1L1396.7 304.4L1400.4 305.4L1403.9 308.0L1405.4 307.2L1405.3 305.5L1406.7 304.7L1408.6 305.5L1410.3 306.2L1414.4 307.1L1416.4 306.1L1417.7 306.5L1419.6 306.5L1420.1 304.5L1420.4 302.3L1420.6 300.6L1420.7 299.6L1419.1 299.3L1417.2 300.3L1415.2 299.5L1413.0 299.6L1411.9 298.5L1410.8 296.7L1410.4 295.3L1410.9 294.5L1412.9 293.9L1415.3 293.7L1418.5 292.6L1421.5 293.8L1424.8 293.1L1424.7 291.8L1422.2 289.9L1420.2 288.9L1419.1 288.3L1418.3 288.7L1416.5 289.4L1415.4 288.2L1416.3 287.3L1414.2 286.7L1413.2 287.7L1412.7 288.4L1412.0 290.1L1411.6 291.9L1411.9 293.2L1412.9 293.9L1410.4 294.2L1408.2 294.3L1407.3 295.0L1407.0 295.4L1407.7 296.7L1408.6 297.7L1407.3 298.3L1407.8 299.9L1406.5 299.5L1405.8 298.2L1405.9 297.5L1404.7 295.9L1403.8 294.9L1403.8 293.1L1402.3 292.1L1400.1 290.8L1398.7 288.6L1397.9 288.1L1396.7 288.6L1396.9 290.3L1398.5 292.2L1400.5 293.6L1403.0 295.3L1401.6 296.2L1401.2 297.4L1400.5 298.0L1400.4 295.4L1398.8 294.4L1397.1 293.3L1395.6 292.3L1394.8 290.5L1393.2 289.9L1391.4 291.5L1389.5 291.0L1388.1 291.6L1388.3 293.1L1386.2 294.2L1385.2 296.2L1384.9 297.6L1384.4 298.6L1383.1 299.8L1380.9 299.8ZM1429.1 289.0L1430.3 286.4L1432.4 285.6L1434.0 286.0L1434.4 287.8L1433.1 288.9L1432.2 289.2L1433.5 290.6L1435.2 292.1L1435.7 293.4L1436.9 294.0L1437.1 295.6L1437.8 298.2L1435.6 298.9L1433.0 298.0L1432.7 294.6L1431.3 292.5L1430.0 291.0Z"/></clipPath></defs><path d="M1302.7 335.7L1301.3 336.4L1299.6 337.3L1298.6 336.6L1297.0 335.9L1296.0 335.7L1293.8 333.6L1293.9 332.0L1292.3 329.6L1290.3 328.8L1288.3 328.1L1287.0 325.7L1285.6 325.0L1283.4 325.6L1281.4 324.9L1279.0 323.3L1276.7 321.8L1275.2 318.8L1275.9 316.9L1275.3 314.5L1274.3 312.1L1273.5 310.2L1272.7 308.2L1272.2 306.2L1272.3 303.6L1271.0 302.8L1270.5 305.1L1271.0 307.3L1271.0 310.1L1271.5 313.4L1271.6 315.2L1270.6 312.9L1270.6 310.8L1269.1 308.2L1269.9 306.9L1269.1 304.3L1269.1 301.5L1268.7 299.3L1267.1 298.4L1267.3 295.5L1267.6 293.8L1267.9 291.0L1269.1 288.2L1270.7 285.9L1273.2 282.3L1274.7 279.4L1275.9 279.8L1276.9 278.7L1276.4 277.3L1275.0 275.7L1276.2 273.2L1276.7 270.9L1277.0 269.5L1277.3 266.9L1277.0 265.5L1277.1 262.5L1275.0 262.0L1273.0 261.5L1270.5 261.0L1268.1 262.5L1265.5 263.5L1262.0 265.0L1258.0 266.2L1253.0 267.8L1256.0 266.0L1260.0 264.2L1261.5 262.0L1261.5 259.5L1263.1 256.9L1266.5 255.3L1264.5 254.0L1263.7 253.0L1263.0 252.0L1266.0 250.0L1268.7 249.0L1269.3 250.5L1270.0 252.0L1273.4 250.5L1276.0 249.2L1279.0 249.0L1282.0 248.8L1285.1 248.5L1286.3 249.3L1287.6 250.0L1289.0 250.8L1290.5 251.5L1290.0 251.6L1292.0 252.1L1294.0 252.6L1296.5 252.7L1298.9 252.8L1301.4 253.0L1303.8 253.1L1304.5 254.7L1305.2 256.4L1307.6 256.8L1310.0 257.2L1313.0 257.3L1316.0 257.5L1317.6 259.4L1319.4 261.4L1321.4 262.4L1324.3 263.4L1326.7 263.5L1329.2 263.6L1331.2 267.8L1334.1 270.2L1331.3 270.0L1328.4 269.7L1329.7 270.4L1332.8 268.3L1333.7 271.7L1333.9 274.3L1335.9 275.7L1336.3 278.4L1336.1 279.5L1334.4 279.9L1331.7 281.2L1328.7 281.0L1325.9 281.2L1323.4 282.4L1320.7 284.6L1323.7 282.9L1326.4 282.3L1327.3 282.8L1326.2 284.1L1326.1 285.7L1328.0 287.0L1330.0 286.4L1330.0 287.0L1328.2 287.8L1325.5 288.7L1323.6 289.5L1323.7 288.2L1325.5 287.4L1323.1 287.7L1320.9 288.6L1319.5 289.4L1318.4 290.8L1318.8 291.9L1316.7 292.4L1314.6 293.1L1314.1 294.6L1312.9 295.4L1311.1 297.8L1311.0 299.8L1309.2 301.0L1306.7 302.7L1304.2 304.5L1303.2 306.8L1303.3 311.6L1302.4 313.4L1301.8 313.1L1301.6 311.1L1301.0 309.5L1301.4 307.8L1300.5 306.7L1299.0 306.9L1297.1 306.2L1295.1 306.2L1294.8 307.8L1293.2 307.5L1290.4 306.8L1288.5 308.1L1286.3 309.5L1285.2 312.2L1283.9 316.3L1283.8 318.7L1284.7 321.1L1286.0 322.3L1288.2 321.8L1289.9 321.3L1291.1 318.6L1293.7 318.0L1294.7 318.0L1293.7 320.7L1292.5 323.4L1291.8 325.6L1293.9 325.7L1296.4 326.6L1297.0 327.6L1296.3 330.9L1296.1 332.4L1297.2 334.3L1298.7 335.2L1300.4 334.2L1302.4 335.5ZM1302.7 335.6L1303.2 335.6L1304.7 333.1L1306.2 332.0L1308.4 331.3L1309.2 330.6L1309.6 332.5L1310.9 331.8L1312.5 333.0L1314.9 333.1L1318.1 333.0L1319.6 333.9L1320.2 335.8L1322.1 336.6L1323.6 338.8L1326.3 339.3L1328.4 339.8L1330.0 341.6L1331.0 344.8L1331.6 345.8L1333.1 348.7L1336.4 348.9L1340.1 350.7L1343.4 351.7L1345.5 353.7L1347.5 354.3L1348.0 356.5L1347.6 358.9L1345.8 361.5L1343.9 364.7L1343.9 370.0L1342.9 373.9L1341.6 377.0L1339.1 377.5L1336.2 379.6L1335.5 381.8L1335.6 384.5L1334.4 387.8L1332.9 390.7L1332.2 392.3L1330.9 393.0L1328.8 392.5L1327.2 392.2L1328.7 394.5L1329.4 397.1L1328.2 398.2L1325.4 398.6L1325.5 400.7L1323.2 401.1L1324.2 403.0L1324.3 404.6L1324.5 406.6L1323.2 408.4L1325.3 410.2L1324.5 412.5L1324.0 413.9L1325.5 416.2L1326.6 419.1L1328.6 419.6L1328.4 420.8L1325.8 420.0L1322.7 417.9L1320.1 416.1L1317.2 411.6L1316.5 407.6L1315.7 403.0L1313.8 397.7L1313.9 394.4L1313.6 389.7L1312.6 385.1L1312.7 381.1L1312.2 376.4L1311.4 371.8L1308.9 369.8L1305.4 367.2L1304.0 364.6L1301.5 360.6L1299.6 357.2L1298.1 353.5L1299.1 351.6L1298.4 349.2L1299.3 346.1L1300.5 345.1L1302.1 342.5L1302.3 338.4L1301.9 337.3Z" fill="#545454"/><path d="M1379.7 300.7L1379.0 299.6L1378.0 299.1L1376.5 299.4L1376.7 297.4L1376.0 297.0L1376.6 295.2L1376.8 292.9L1376.4 291.6L1377.7 290.7L1381.0 291.1L1383.5 291.1L1384.1 289.4L1384.1 287.5L1383.2 286.3L1381.0 285.3L1380.9 284.4L1383.4 284.3L1383.9 283.0L1385.4 283.3L1386.6 282.3L1386.9 281.3L1388.3 280.7L1388.9 279.6L1389.4 278.7L1391.2 278.2L1392.6 277.9L1392.6 276.1L1392.1 275.4L1392.0 273.7L1393.6 272.8L1394.1 273.1L1393.9 274.6L1394.5 274.8L1393.7 276.1L1394.6 276.9L1396.0 276.7L1397.5 277.5L1399.4 276.7L1401.2 276.4L1402.3 276.2L1403.4 275.7L1402.9 273.8L1403.6 272.6L1405.0 273.4L1405.5 272.2L1404.5 270.6L1406.4 270.0L1408.1 270.1L1409.8 269.5L1408.7 269.2L1406.7 269.0L1403.9 269.7L1402.5 268.6L1402.5 267.6L1401.8 266.2L1402.6 264.5L1404.3 263.1L1404.4 262.3L1403.4 262.0L1401.9 262.5L1401.5 263.6L1400.4 265.1L1399.2 266.2L1399.0 268.3L1400.5 269.6L1399.6 270.2L1399.1 273.2L1398.8 274.5L1397.4 275.4L1396.2 275.6L1395.9 274.6L1395.1 272.6L1394.3 271.1L1393.8 270.6L1392.1 272.0L1390.2 272.0L1389.6 270.6L1389.2 268.4L1389.3 266.7L1391.4 265.2L1392.9 264.1L1394.3 262.6L1395.2 260.2L1396.5 258.7L1397.7 257.3L1399.4 256.7L1401.7 255.7L1403.1 255.1L1405.1 255.4L1407.0 256.1L1408.8 257.4L1411.5 258.0L1414.9 259.4L1415.9 261.1L1413.8 261.5L1410.1 260.7L1411.4 261.8L1411.7 263.5L1413.8 264.2L1415.8 263.3L1417.8 261.1L1417.2 258.2L1419.0 258.6L1421.4 258.2L1423.8 257.9L1426.7 257.2L1427.8 256.0L1432.1 256.6L1434.6 257.7L1432.0 254.2L1431.3 251.8L1433.5 251.8L1435.7 254.6L1438.7 257.3L1437.0 252.9L1437.8 250.5L1439.7 250.1L1441.5 249.7L1440.2 248.4L1442.0 247.5L1443.8 246.7L1445.6 245.5L1447.1 244.5L1449.0 245.3L1452.4 245.5L1455.0 246.3L1457.5 248.7L1460.8 248.7L1462.9 248.8L1465.1 248.9L1469.0 249.3L1467.1 248.0L1473.2 249.9L1474.2 249.2L1475.2 248.4L1476.9 248.3L1478.7 248.1L1482.3 248.6L1484.8 249.2L1486.6 248.9L1488.4 248.6L1491.8 249.8L1494.6 249.2L1495.7 248.4L1497.4 248.2L1499.1 248.0L1502.9 248.5L1510.3 252.6L1510.4 253.3L1513.2 255.7L1512.6 257.0L1513.7 259.4L1510.6 259.7L1509.7 260.5L1511.6 262.9L1514.7 265.0L1517.7 269.4L1518.1 272.4L1514.8 269.9L1509.5 265.6L1508.6 263.8L1506.4 260.1L1504.5 259.0L1504.7 262.2L1503.1 262.6L1500.3 263.0L1496.9 263.5L1497.5 266.0L1499.4 270.8L1503.0 271.5L1506.3 274.2L1508.6 277.6L1508.8 280.1L1509.3 284.4L1506.9 285.6L1506.6 287.0L1506.7 288.8L1507.8 292.3L1510.6 295.7L1511.0 296.8L1509.3 297.7L1508.7 297.9L1506.9 293.9L1505.3 293.6L1504.1 291.3L1502.9 290.8L1501.2 292.4L1500.9 292.6L1500.3 290.2L1499.2 289.9L1498.2 292.4L1497.8 293.3L1499.8 294.7L1500.6 295.0L1503.1 294.4L1502.1 296.5L1501.8 298.2L1504.2 300.6L1506.5 302.5L1506.9 304.4L1507.6 304.9L1507.6 308.6L1507.2 311.1L1505.8 314.0L1503.2 315.8L1500.5 317.1L1500.4 318.8L1499.1 317.1L1497.3 317.1L1496.4 318.7L1495.9 320.8L1497.1 322.8L1500.1 325.8L1501.1 329.0L1501.3 330.9L1499.2 332.7L1497.4 335.2L1496.9 333.0L1494.9 331.9L1494.1 330.3L1492.2 328.6L1491.4 330.0L1491.0 333.4L1491.7 334.3L1492.7 337.1L1493.9 337.7L1496.0 340.9L1496.3 343.3L1497.2 345.2L1496.2 345.3L1493.9 343.3L1492.7 339.8L1490.3 335.9L1490.2 332.7L1488.6 326.8L1487.5 324.1L1484.9 325.3L1484.1 321.9L1481.3 318.5L1480.4 316.5L1479.2 317.2L1477.5 317.7L1475.8 319.0L1474.2 320.9L1472.0 324.2L1470.0 326.3L1470.3 329.0L1470.3 333.0L1468.1 336.3L1466.9 334.7L1465.7 331.7L1463.6 327.4L1461.7 321.8L1461.1 319.1L1458.2 319.2L1456.4 317.1L1454.8 315.3L1453.7 313.3L1451.6 313.6L1448.5 313.9L1444.2 313.2L1442.7 311.4L1441.4 312.3L1437.7 310.6L1435.9 307.8L1434.4 307.9L1433.7 308.0L1434.6 310.1L1436.0 311.8L1436.8 313.1L1437.6 314.6L1438.1 313.2L1438.5 315.3L1441.0 315.5L1442.8 313.6L1443.0 312.4L1443.9 315.3L1445.8 316.0L1447.3 317.5L1446.3 320.1L1445.7 322.2L1443.6 324.1L1440.4 326.7L1437.2 328.8L1433.0 330.4L1431.3 330.6L1430.3 326.7L1429.4 324.3L1427.4 320.8L1425.7 318.5L1423.3 314.0L1421.1 310.6L1420.6 308.8L1420.2 310.8L1418.2 308.3L1419.5 311.8L1421.9 315.9L1424.0 319.8L1425.7 323.7L1427.2 326.9L1428.9 328.5L1431.3 331.5L1432.7 333.6L1435.3 332.6L1439.8 331.7L1440.0 333.5L1439.2 336.7L1437.3 340.6L1434.6 344.5L1431.9 347.8L1429.8 349.5L1428.1 351.7L1427.2 355.0L1427.4 357.6L1428.4 360.8L1428.2 366.1L1426.9 368.7L1424.1 370.3L1421.8 373.2L1422.0 377.1L1419.0 380.8L1418.7 383.5L1416.6 386.1L1413.2 389.7L1410.8 391.2L1407.6 391.2L1405.0 392.2L1403.5 391.3L1403.4 389.2L1402.0 384.1L1400.8 381.4L1400.3 376.2L1397.8 370.4L1397.7 368.5L1398.6 364.2L1399.8 361.1L1399.3 358.5L1398.4 354.9L1398.0 353.6L1395.4 350.4L1395.2 346.5L1395.5 343.9L1395.7 342.0L1394.3 341.2L1391.6 341.6L1390.0 339.0L1387.9 339.0L1386.3 339.5L1383.1 341.0L1380.9 340.4L1377.2 341.5L1375.0 340.0L1372.9 338.4L1371.0 336.2L1369.4 333.2L1367.5 331.1L1367.3 329.3L1366.7 328.1L1367.8 326.5L1368.1 321.9L1367.5 320.0L1368.6 316.5L1370.3 313.5L1371.7 311.5L1373.5 310.7L1375.3 309.0L1375.4 307.1L1376.7 304.1L1378.4 303.2L1379.4 300.9L1380.0 300.8L1383.0 301.8L1386.2 300.0L1388.6 299.6L1393.6 299.5L1395.2 299.1L1396.0 299.5L1395.5 300.9L1396.2 301.7L1395.4 303.1L1396.7 304.4L1400.4 305.4L1403.9 308.0L1405.4 307.2L1405.3 305.5L1406.7 304.7L1408.6 305.5L1410.3 306.2L1414.4 307.1L1416.4 306.1L1417.7 306.5L1419.6 306.5L1420.1 304.5L1420.4 302.3L1420.6 300.6L1420.7 299.6L1419.1 299.3L1417.2 300.3L1415.2 299.5L1413.0 299.6L1411.9 298.5L1410.8 296.7L1410.4 295.3L1410.9 294.5L1412.9 293.9L1415.3 293.7L1418.5 292.6L1421.5 293.8L1424.8 293.1L1424.7 291.8L1422.2 289.9L1420.2 288.9L1419.1 288.3L1418.3 288.7L1416.5 289.4L1415.4 288.2L1416.3 287.3L1414.2 286.7L1413.2 287.7L1412.7 288.4L1412.0 290.1L1411.6 291.9L1411.9 293.2L1412.9 293.9L1410.4 294.2L1408.2 294.3L1407.3 295.0L1407.0 295.4L1407.7 296.7L1408.6 297.7L1407.3 298.3L1407.8 299.9L1406.5 299.5L1405.8 298.2L1405.9 297.5L1404.7 295.9L1403.8 294.9L1403.8 293.1L1402.3 292.1L1400.1 290.8L1398.7 288.6L1397.9 288.1L1396.7 288.6L1396.9 290.3L1398.5 292.2L1400.5 293.6L1403.0 295.3L1401.6 296.2L1401.2 297.4L1400.5 298.0L1400.4 295.4L1398.8 294.4L1397.1 293.3L1395.6 292.3L1394.8 290.5L1393.2 289.9L1391.4 291.5L1389.5 291.0L1388.1 291.6L1388.3 293.1L1386.2 294.2L1385.2 296.2L1384.9 297.6L1384.4 298.6L1383.1 299.8L1380.9 299.8ZM1429.1 289.0L1430.3 286.4L1432.4 285.6L1434.0 286.0L1434.4 287.8L1433.1 288.9L1432.2 289.2L1433.5 290.6L1435.2 292.1L1435.7 293.4L1436.9 294.0L1437.1 295.6L1437.8 298.2L1435.6 298.9L1433.0 298.0L1432.7 294.6L1431.3 292.5L1430.0 291.0Z" fill="#545454" fill-rule="evenodd"/><path d="M1394.5 299.4L1394.6 302.2L1394.7 305.0L1394.8 307.8L1395.1 310.3L1395.3 312.9L1395.5 315.5L1397.6 316.8L1399.8 318.1L1401.8 316.8L1403.9 317.9L1406.0 319.0L1408.2 320.1L1410.3 321.2L1410.5 324.2L1410.6 327.1L1409.1 329.0L1408.6 331.6L1410.3 335.5L1410.3 335.5L1409.2 332.9L1408.0 330.3L1406.9 327.7L1405.8 325.2L1404.6 322.6L1403.5 320.0L1402.3 317.4L1401.2 314.8L1400.1 312.3L1398.9 309.7L1397.8 307.1L1396.7 304.5M1367.5 320.0L1369.6 319.8L1371.7 319.6L1372.8 316.8L1376.3 311.9L1380.3 314.9L1382.3 316.7L1384.4 318.5L1386.5 320.3L1389.6 322.4L1389.4 326.5L1387.3 327.1L1385.2 327.8L1382.3 327.5L1379.4 327.1L1377.3 327.4L1375.2 327.6L1373.0 327.8L1372.2 331.0L1372.2 331.0L1371.0 328.3L1369.8 325.5M1389.5 329.7L1392.0 329.7L1394.5 329.6L1397.1 329.5L1399.6 329.4L1401.6 325.8L1401.4 323.0L1401.2 320.2L1401.0 317.4L1401.0 317.4L1398.7 319.9L1396.5 322.3L1394.1 324.8M1408.6 331.6L1411.3 333.2L1414.0 334.8L1416.5 334.8L1419.0 334.8L1421.5 334.8L1422.4 337.7L1423.3 340.6L1423.3 340.6L1420.8 339.1L1418.4 337.6L1415.9 336.1L1413.5 334.6M1398.1 353.6L1400.2 354.3L1402.3 354.9L1404.5 357.5L1406.6 359.4L1408.7 361.4L1410.8 361.4L1410.8 361.4L1408.7 360.1L1406.6 358.8L1404.5 357.5L1402.3 356.2M1417.4 348.4L1419.6 348.4L1421.7 348.5L1425.4 351.7L1427.6 353.0L1427.6 353.0L1425.0 351.9L1422.5 350.7M1417.4 348.4L1417.1 344.9L1416.8 341.3L1419.3 341.3L1421.7 341.3L1423.3 340.6L1425.4 341.1L1427.6 341.5L1429.7 341.9L1433.4 340.6L1436.5 336.7L1436.5 336.7L1434.4 338.0L1432.3 339.3L1430.2 340.6L1428.1 341.9L1426.0 343.2L1423.8 344.5L1421.7 345.8M1397.6 369.5L1399.8 369.7L1402.0 369.8L1404.1 370.0L1406.3 370.2L1408.9 370.2L1411.5 370.2L1411.5 370.2L1409.2 370.1L1406.9 370.0L1404.6 369.9L1402.3 369.7M1406.3 370.2L1406.1 372.9L1406.0 375.6L1405.8 379.2L1405.8 379.2L1406.0 376.2M1420.0 369.2L1419.6 371.8L1419.1 374.4L1418.0 376.1L1418.0 376.1M1372.2 331.0L1376.1 333.6L1379.3 333.6L1382.0 332.9L1385.2 333.0L1387.9 331.7L1389.5 329.7L1389.5 329.7L1387.3 329.9L1385.2 330.0L1383.0 330.2L1380.9 330.4L1378.7 330.5L1376.5 330.7M1410.3 321.2L1411.2 318.6M1400.8 340.7L1403.2 341.7L1405.6 342.6L1407.9 342.1L1410.1 341.6L1412.4 341.2L1414.7 340.7L1417.4 342.6L1417.4 342.6L1415.0 342.3L1412.6 342.1L1410.3 341.8L1407.9 341.5L1405.5 341.2M1395.7 344.2L1399.2 344.3L1402.4 344.6L1404.5 342.6L1404.5 342.6L1402.3 343.0L1400.1 343.4M1402.4 344.6L1404.0 348.4L1402.4 352.3L1400.2 353.0L1398.1 353.6L1398.1 353.6L1399.5 350.6M1376.1 333.6L1376.7 336.8L1377.2 341.5L1377.2 341.5L1376.8 338.8M1379.3 333.6L1380.7 337.1L1382.0 340.7L1382.0 340.7M1435.4 292.5L1438.6 292.9L1440.4 291.1L1443.4 289.8L1445.3 290.1L1447.3 290.3L1450.7 292.2L1452.0 290.4L1454.0 290.7L1456.2 290.6L1458.4 290.5L1460.5 290.3L1460.5 290.3L1458.6 290.5L1456.7 290.7L1454.8 290.9L1452.9 291.1L1450.9 291.2L1449.0 291.4L1447.1 291.6L1445.1 291.7L1443.2 291.9L1441.2 292.0L1439.3 292.2M1444.9 299.0L1446.8 300.5L1448.4 299.2L1451.0 297.9L1453.8 297.4L1455.9 297.4L1458.0 297.4L1458.0 297.4L1455.8 297.7L1453.7 298.0L1451.5 298.2L1449.3 298.5M1426.0 347.1L1429.2 349.4M1423.3 340.6L1423.5 337.7L1423.6 334.8L1423.8 331.9L1423.9 328.9L1424.8 326.3L1425.7 323.7L1425.7 323.7L1425.4 326.5L1425.0 329.4L1424.6 332.2L1424.2 335.0M1431.1 330.6L1433.3 333.6L1435.5 336.7L1432.4 340.6L1432.4 340.6L1432.0 337.3" fill="none" stroke="#474747" stroke-width=".55" clip-path="url(#eab)"/><g clip-path="url(#nab)"><path d="M1270.9 278.1L1273.8 278.4L1276.7 278.7L1279.3 279.0L1281.8 279.3L1284.4 279.5L1287.1 279.8L1289.7 280.0L1292.3 280.3L1295.0 280.5L1297.6 280.7L1300.3 280.9L1300.6 280.4L1304.5 282.6L1308.0 284.8L1309.1 286.5L1307.9 289.6L1306.8 290.7L1310.8 290.4L1311.1 289.2L1313.9 288.5L1316.0 287.3L1319.6 287.1L1322.2 284.4L1323.3 284.9L1322.7 286.7L1323.1 287.9L1326.1 288.6L1329.1 289.3L1325.5 293.4L1321.9 297.7L1318.3 301.9L1314.8 306.1L1311.3 310.4L1307.8 314.7L1304.7 314.3L1301.5 313.8L1298.3 313.4L1295.1 313.0L1292.0 312.6L1288.8 312.1L1285.7 311.7L1284.0 309.4L1283.0 306.2L1281.2 307.2L1280.0 306.1L1279.1 303.1L1277.4 303.0L1274.3 303.5L1271.4 301.7L1269.1 301.5L1266.0 301.4L1262.8 301.4L1259.6 301.3L1256.4 301.2L1258.8 296.5L1261.5 291.8L1264.4 287.2L1267.5 282.6Z" fill="#fedd1a" stroke="#fedd1a" stroke-width=".7"/><path d="M1294.0 248.8L1287.8 253.2L1281.9 257.8L1276.3 262.5L1277.7 262.7L1277.0 264.4L1279.4 264.1L1278.4 267.5L1278.6 269.1L1276.7 270.6L1267.9 276.2L1265.5 275.9L1263.2 275.6L1260.8 275.3L1258.5 274.9L1256.1 274.6L1253.8 274.2L1251.5 273.8L1249.3 273.4L1247.0 273.0L1244.8 272.6L1242.6 272.2L1240.5 271.8L1238.3 271.3L1236.2 270.9L1234.1 270.4L1239.2 266.4L1244.5 262.5L1250.0 258.8L1255.6 255.2L1261.5 251.8L1267.5 248.5L1273.6 245.4L1275.0 245.7L1276.5 246.0L1278.0 246.3L1279.5 246.5L1281.0 246.8L1282.6 247.1L1284.2 247.3L1285.8 247.6L1287.4 247.8L1289.0 248.1L1290.7 248.3L1292.3 248.6Z" fill="#fedd1a" stroke="#fedd1a" stroke-width=".7"/><path d="M1316.8 235.5L1311.1 238.4L1305.6 241.5L1300.3 244.7L1295.1 248.1L1290.1 251.5L1285.3 255.1L1280.7 258.7L1276.3 262.5L1277.7 262.7L1277.0 264.4L1279.4 264.1L1278.4 267.5L1278.6 269.1L1276.7 270.6L1267.9 276.2L1270.0 277.3L1272.1 278.4L1274.3 279.5L1275.9 279.6L1276.7 278.7L1279.3 279.0L1281.8 279.3L1284.4 279.5L1287.1 279.8L1289.7 280.0L1292.3 280.3L1295.0 280.5L1297.6 280.7L1300.3 280.9L1300.6 280.4L1304.5 282.6L1308.0 284.8L1309.1 286.5L1307.9 289.6L1306.8 290.7L1310.8 290.4L1311.1 289.2L1313.9 288.5L1316.0 287.3L1319.6 287.1L1322.2 284.4L1323.3 284.9L1322.7 286.7L1323.1 287.9L1325.8 289.3L1328.5 290.7L1331.4 292.1L1334.2 293.4L1337.2 294.8L1338.1 290.9L1339.1 287.0L1340.1 283.1L1341.3 279.2L1342.5 275.3L1343.8 271.5L1345.2 267.6L1346.7 263.7L1348.3 259.9L1350.0 256.1L1351.8 252.3L1353.7 248.5L1355.7 244.7L1357.9 240.9L1360.2 237.2L1358.7 237.1L1357.2 237.1L1355.7 237.1L1354.2 237.0L1352.7 237.0L1351.2 236.9L1349.7 236.9L1348.2 236.8L1346.8 236.8L1345.3 236.8L1343.8 236.7L1342.4 236.7L1340.9 236.6L1339.4 236.5L1338.0 236.5L1336.5 236.4L1335.1 236.4L1333.7 236.3L1332.2 236.2L1330.8 236.2L1329.4 236.1L1327.9 236.0L1326.5 236.0L1325.1 235.9L1323.7 235.8L1322.3 235.8L1320.9 235.7L1319.6 235.6L1318.2 235.5Z" fill="#73cf97" stroke="#73cf97" stroke-width=".7"/><path d="M1269.1 301.5L1271.4 301.7L1274.3 303.5L1277.4 303.0L1279.1 303.1L1280.0 306.1L1281.2 307.2L1283.0 306.2L1284.0 309.4L1285.7 311.7L1289.0 313.1L1292.4 314.5L1295.2 318.0L1292.6 322.0L1291.6 322.8L1289.6 322.9L1289.3 325.2L1287.6 327.4L1284.2 330.7L1281.1 329.3L1278.0 327.8L1274.9 326.3L1271.9 324.9L1268.9 323.4L1265.9 321.8L1263.0 320.3L1260.1 318.7L1261.4 314.5L1262.7 310.3L1264.3 306.1L1266.0 302.0Z" fill="#fedd1a" stroke="#fedd1a" stroke-width=".7"/><path d="M1293.7 331.6L1296.2 332.3L1296.6 336.3L1293.3 336.3Z" fill="#2db37b" stroke="#2db37b" stroke-width=".7"/><path d="M1296.8 332.3L1296.6 336.3L1301.9 337.3L1302.7 335.6L1302.6 333.7Z" fill="#2db37b" stroke="#2db37b" stroke-width=".7"/></g><g clip-path="url(#sab)"><path d="M1302.9 330.4L1306.2 330.4L1309.4 330.5L1309.4 331.4L1308.0 332.5L1307.9 334.5L1309.0 337.8L1312.8 338.9L1312.5 343.8L1313.4 345.6L1310.6 345.7L1310.3 352.7L1309.8 352.2L1306.3 348.9L1304.2 347.3L1302.0 346.1L1299.3 347.1L1299.4 342.4L1299.6 337.7L1301.9 337.3L1302.7 335.6Z" fill="#dc172a" stroke="#dc172a" stroke-width=".7"/><path d="M1309.4 330.5L1312.7 330.7L1315.9 330.9L1319.2 331.1L1322.5 331.3L1321.3 336.2L1320.5 337.9L1319.7 340.3L1320.1 341.2L1317.9 341.9L1316.0 341.7L1316.5 343.8L1314.9 346.2L1313.4 345.6L1312.5 343.8L1312.8 338.9L1309.0 337.8L1307.9 334.5L1308.0 332.5L1309.4 331.4Z" fill="#2db37b" stroke="#2db37b" stroke-width=".7"/><path d="M1321.3 336.2L1324.2 337.3L1323.9 339.9L1323.0 345.2L1321.1 345.2L1320.9 341.2L1320.1 341.2L1319.7 340.3L1320.5 337.9Z" fill="#545454" stroke="#545454" stroke-width=".7"/><path d="M1324.2 337.3L1327.4 338.6L1327.3 344.3L1325.1 344.6L1323.0 345.2L1323.9 339.9Z" fill="#fedd1a" stroke="#fedd1a" stroke-width=".7"/><path d="M1327.4 338.6L1331.6 339.9L1329.9 341.9L1328.4 344.3L1327.3 344.3Z" fill="#ee6520" stroke="#ee6520" stroke-width=".7"/><path d="M1331.6 339.9L1329.9 341.9L1328.4 344.3L1327.3 344.3L1325.1 344.6L1323.0 345.2L1321.1 345.2L1320.9 341.2L1320.1 341.2L1317.9 341.9L1316.0 341.7L1316.5 343.8L1314.9 346.2L1313.4 345.6L1310.6 345.7L1310.3 352.7L1307.1 354.1L1306.2 357.0L1307.8 359.8L1310.1 361.8L1311.7 361.8L1315.4 360.0L1316.1 362.8L1319.2 365.0L1321.2 365.1L1321.7 368.7L1323.7 368.6L1324.8 370.9L1324.6 373.5L1325.0 376.1L1327.2 376.5L1329.1 378.7L1329.1 380.8L1330.2 382.7L1328.4 384.2L1327.1 386.9L1328.8 387.8L1332.1 391.4L1335.8 393.0L1337.6 388.8L1339.5 384.7L1341.5 380.6L1343.7 376.5L1345.9 372.4L1348.3 368.3L1350.7 364.2L1353.2 360.1L1349.9 357.0L1346.6 353.9L1343.4 350.8L1340.1 347.7L1336.9 344.5Z" fill="#ee6520" stroke="#ee6520" stroke-width=".7"/><path d="M1294.0 351.2L1299.1 351.7L1300.5 353.9L1301.5 351.9L1304.2 349.2L1304.5 347.3L1306.3 348.9L1309.8 352.2L1310.3 352.7L1307.1 354.1L1306.2 357.0L1307.8 359.8L1310.1 361.8L1311.7 361.8L1312.2 363.9L1312.2 366.4L1311.8 368.4L1312.5 369.8L1312.1 370.4L1311.3 371.5L1308.1 372.4L1304.8 373.2L1301.6 374.0L1299.8 369.5L1298.2 364.9L1296.7 360.4L1295.3 355.8Z" fill="#dc172a" stroke="#dc172a" stroke-width=".7"/><path d="M1294.0 344.4L1297.3 344.9L1300.6 345.3L1302.0 346.1L1304.2 347.3L1304.5 347.3L1304.2 349.2L1301.5 351.9L1300.5 353.9L1299.1 351.7L1294.0 351.2Z" fill="#dc172a" stroke="#dc172a" stroke-width=".7"/><path d="M1311.7 361.8L1315.4 360.0L1316.1 362.8L1319.2 365.0L1321.2 365.1L1321.7 368.7L1323.7 368.6L1324.8 370.9L1323.4 372.6L1320.2 374.3L1320.2 376.5L1317.1 376.5L1315.7 377.4L1314.2 375.5L1313.2 372.4L1312.1 370.4L1312.5 369.8L1311.8 368.4L1312.2 366.4L1312.2 363.9Z" fill="#545454" stroke="#545454" stroke-width=".7"/><path d="M1324.6 373.5L1325.0 376.1L1327.2 376.5L1329.1 378.7L1329.1 380.8L1328.3 383.2L1325.4 383.1L1323.2 378.8L1320.2 376.5L1320.2 374.3L1323.4 372.6L1324.8 370.9Z" fill="#2db37b" stroke="#2db37b" stroke-width=".7"/><path d="M1327.1 386.9L1328.8 387.8L1332.1 391.4L1335.8 393.0L1332.5 393.7L1329.2 394.5L1327.1 391.3Z" fill="#545454" stroke="#545454" stroke-width=".7"/><path d="M1311.3 371.5L1312.1 370.4L1313.2 372.4L1314.2 375.5L1315.7 377.4L1314.6 379.7L1315.2 383.0L1314.7 387.0L1315.5 391.0L1316.1 395.0L1317.0 399.6L1317.3 402.9L1319.0 406.8L1319.5 410.1L1319.9 412.8L1321.7 415.3L1324.9 416.1L1325.4 416.5L1327.1 420.3L1324.3 421.2L1321.5 422.0L1318.8 422.9L1316.7 419.0L1314.7 415.1L1312.9 411.2L1311.2 407.3L1309.6 403.3L1308.2 399.3L1306.9 395.4L1305.6 391.4L1304.5 387.4L1303.5 383.4L1302.6 379.4L1301.9 375.4L1301.2 371.4L1304.6 371.4L1307.9 371.5Z" fill="#ee6520" stroke="#ee6520" stroke-width=".7"/><path d="M1315.7 377.4L1317.1 376.5L1320.2 376.5L1323.2 378.8L1325.4 383.1L1328.3 383.2L1330.2 382.7L1328.4 384.2L1327.1 386.9L1327.1 391.3L1329.2 394.5L1330.6 398.8L1332.0 403.2L1333.6 407.5L1335.2 411.8L1336.9 416.1L1338.7 420.4L1335.8 420.4L1332.9 420.4L1330.0 420.4L1327.1 420.3L1325.4 416.5L1324.9 416.1L1321.7 415.3L1319.9 412.8L1319.5 410.1L1319.0 406.8L1317.3 402.9L1317.0 399.6L1316.1 395.0L1315.5 391.0L1314.7 387.0L1315.2 383.0L1314.6 379.7Z" fill="#dc172a" stroke="#dc172a" stroke-width=".7"/></g><g clip-path="url(#eab)"><path d="M1364.7 254.0L1366.8 254.0L1368.9 254.1L1370.9 254.1L1373.0 254.1L1375.1 254.2L1377.2 254.2L1379.3 254.2L1381.4 254.2L1383.5 254.2L1385.6 254.2L1387.6 254.2L1389.7 254.2L1391.8 254.2L1393.9 254.2L1396.0 254.1L1398.1 254.1L1400.2 254.1L1402.2 254.0L1404.3 254.0L1406.4 253.9L1406.5 256.8L1405.8 258.1L1407.0 260.1L1408.1 263.0L1408.3 264.9L1409.9 265.6L1407.8 268.8L1408.1 270.2L1408.2 272.7L1409.1 274.3L1411.2 274.9L1412.8 277.4L1413.8 279.3L1415.3 279.3L1416.9 281.6L1419.3 282.3L1421.2 282.6L1421.6 284.7L1420.2 285.9L1419.3 289.3L1424.8 293.1L1426.0 293.0L1426.8 293.5L1428.4 295.3L1427.7 295.7L1428.2 297.7L1426.5 298.6L1424.4 299.2L1422.4 299.3L1421.2 300.1L1420.7 300.6L1418.0 303.0L1414.0 302.7L1410.0 302.5L1406.7 302.1L1403.3 301.7L1400.0 301.3L1397.5 300.6L1395.4 297.8L1390.1 297.8L1386.4 299.0L1382.8 300.2L1379.8 300.6L1376.6 300.0L1373.5 299.4L1370.5 299.3L1367.6 299.3L1364.6 299.3L1361.7 299.2L1358.8 299.2L1355.8 299.1L1356.4 295.0L1356.9 290.9L1357.6 286.8L1358.2 282.7L1359.0 278.6L1359.8 274.5L1360.6 270.3L1361.5 266.2L1362.5 262.1L1363.6 258.1Z" fill="#fedd1a" stroke="#fedd1a" stroke-width=".7"/><path d="M1388.6 272.9L1391.0 272.4L1394.4 271.1L1395.2 269.0L1394.8 266.4L1396.0 264.5L1396.9 261.6L1398.3 258.6L1400.0 258.0L1401.8 258.3L1403.5 257.6L1405.8 258.1L1406.5 256.8L1406.4 253.9L1404.4 254.0L1402.3 254.0L1400.3 254.1L1398.2 254.1L1396.2 254.1L1394.1 254.2L1392.1 254.2L1390.0 254.2L1388.0 254.2L1388.1 258.9L1388.3 263.6L1388.4 268.2Z" fill="#2db37b" stroke="#2db37b" stroke-width=".7"/><path d="M1394.4 271.1L1395.2 269.0L1394.8 266.4L1396.0 264.5L1396.9 261.6L1398.3 258.6L1400.0 258.0L1401.8 258.3L1403.1 261.8L1401.1 267.0L1399.5 273.5L1395.5 275.8Z" fill="#fedd1a" stroke="#fedd1a" stroke-width=".7"/><path d="M1392.1 276.4L1393.8 276.5L1394.8 276.2L1395.9 275.7L1395.3 274.9L1394.2 272.5L1391.9 273.3Z" fill="#ee6520" stroke="#ee6520" stroke-width=".7"/><path d="M1373.4 300.0L1378.0 299.4L1377.9 297.4L1378.4 296.1L1378.6 293.0L1377.4 292.8L1373.8 292.5Z" fill="#ee6520" stroke="#ee6520" stroke-width=".7"/><path d="M1404.0 287.5L1405.3 285.0L1407.9 285.1L1409.4 284.6L1411.2 286.9L1412.8 288.4L1412.1 290.5L1411.8 292.7L1410.3 293.1L1407.1 293.7L1406.5 292.4L1406.3 289.8L1405.1 288.7Z" fill="#73cf97" stroke="#73cf97" stroke-width=".7"/><path d="M1405.0 295.4L1407.1 293.7L1410.3 293.1L1411.4 296.6L1409.0 301.8L1404.8 299.3Z" fill="#73cf97" stroke="#73cf97" stroke-width=".7"/><path d="M1397.5 277.5L1401.2 276.4L1405.5 277.0L1406.2 279.2L1406.6 281.4L1405.6 283.6L1402.2 283.1L1398.4 281.4Z" fill="#fedd1a" stroke="#fedd1a" stroke-width=".7"/><path d="M1405.6 277.4L1407.2 276.8L1407.9 275.0L1409.1 274.3L1411.2 274.9L1412.8 277.4L1413.8 279.3L1412.3 280.6L1409.1 280.3L1406.1 280.5Z" fill="#2db37b" stroke="#2db37b" stroke-width=".7"/><path d="M1403.0 274.6L1406.3 274.1L1407.9 275.0L1407.2 276.8L1405.6 277.4L1404.9 276.8L1403.4 275.7Z" fill="#2db37b" stroke="#2db37b" stroke-width=".7"/><path d="M1400.0 286.5L1400.9 285.1L1402.4 285.3L1403.8 284.4L1405.3 284.5L1406.0 285.0L1404.6 287.4L1402.6 287.8L1401.2 287.8Z" fill="#ee6520" stroke="#ee6520" stroke-width=".7"/><path d="M1400.6 284.3L1402.3 283.1L1405.5 283.6L1405.3 284.5L1403.8 284.4L1402.4 285.3L1400.9 285.1Z" fill="#2db37b" stroke="#2db37b" stroke-width=".7"/><path d="M1397.8 288.4L1399.3 288.0L1400.4 287.0L1403.3 288.7L1402.9 289.1L1400.1 289.0L1399.3 290.3L1401.8 291.6L1402.8 292.2L1400.3 291.2L1398.3 289.3Z" fill="#2db37b" stroke="#2db37b" stroke-width=".7"/><path d="M1420.4 300.5L1421.1 299.3L1423.2 299.4L1425.6 298.8L1426.5 298.6L1425.7 299.6L1425.9 302.3L1423.9 303.7L1421.2 304.2L1420.7 302.2Z" fill="#ee6520" stroke="#ee6520" stroke-width=".7"/><path d="M1421.2 308.8L1422.2 308.8L1423.4 306.4L1424.3 305.5L1423.9 303.7L1421.2 304.2L1420.8 305.0L1420.8 306.6Z" fill="#dc172a" stroke="#dc172a" stroke-width=".7"/><path d="M1419.6 306.5L1420.6 304.0L1421.1 304.9L1420.8 306.6L1420.6 308.8Z" fill="#dc172a" stroke="#dc172a" stroke-width=".7"/><path d="M1406.5 256.8L1405.8 258.1L1407.0 260.1L1408.1 263.0L1408.3 264.9L1409.9 265.6L1407.8 268.8L1408.1 270.2L1408.2 272.7L1409.1 274.3L1411.2 274.9L1412.8 277.4L1413.8 279.3L1415.3 279.3L1416.9 281.6L1419.3 282.3L1421.2 282.6L1421.6 284.7L1420.2 285.9L1420.0 288.0L1419.7 288.9L1422.9 290.6L1424.8 290.9L1426.8 291.5L1429.4 292.4L1431.3 292.5L1430.5 286.5L1429.8 284.4L1427.4 282.5L1428.4 281.2L1430.2 279.8L1434.0 280.6L1436.6 280.2L1439.3 280.4L1438.9 278.1L1437.8 276.4L1440.8 275.3L1443.7 274.1L1447.9 275.7L1450.3 275.3L1452.3 276.7L1455.6 278.9L1457.5 279.2L1459.4 279.5L1461.1 281.1L1463.2 281.3L1464.6 279.3L1466.5 278.7L1469.2 279.6L1470.2 276.8L1471.5 277.4L1474.1 277.3L1475.4 278.7L1478.3 278.4L1480.9 279.6L1482.6 279.6L1485.1 277.9L1487.7 278.2L1488.6 278.4L1488.4 276.9L1487.4 274.5L1487.8 273.3L1490.4 273.3L1492.4 273.6L1496.4 277.0L1499.5 278.1L1501.7 279.7L1503.9 278.5L1506.1 282.9L1504.4 283.4L1506.4 286.2L1506.6 287.0L1509.8 290.0L1512.4 289.7L1515.1 289.4L1517.8 289.1L1520.4 288.7L1523.0 288.4L1525.7 288.1L1527.3 286.3L1528.8 284.6L1530.2 282.8L1531.6 281.0L1532.8 279.2L1533.8 277.4L1534.8 275.6L1535.6 273.8L1536.4 272.0L1536.3 270.4L1531.4 266.6L1526.4 262.8L1521.2 259.3L1515.8 255.8L1510.3 252.6L1504.6 249.4L1498.8 246.4L1492.9 243.6L1486.9 240.9L1480.9 238.3L1480.0 238.4L1478.7 238.6L1477.3 238.8L1475.9 238.9L1474.6 239.1L1473.2 239.2L1471.8 239.4L1470.4 239.5L1468.9 239.7L1467.5 239.9L1466.0 240.0L1464.6 240.1L1463.1 240.3L1461.6 240.4L1460.1 240.6L1458.6 240.7L1457.1 240.9L1455.6 241.0L1454.0 241.1L1452.5 241.2L1450.9 241.4L1449.3 241.5L1447.8 241.6L1446.2 241.7L1444.6 241.8L1443.0 242.0L1441.4 242.1L1439.7 242.2L1438.1 242.3L1436.5 242.4L1434.8 242.5L1433.2 242.6L1431.5 242.7L1429.9 242.7L1428.2 242.8L1426.5 242.9L1424.8 243.0L1423.1 243.1L1421.5 243.1L1419.8 243.2L1418.0 243.3L1416.3 243.3L1414.6 243.4L1412.9 243.5L1411.2 243.5L1409.5 243.6L1407.7 243.6L1406.0 243.6L1404.3 243.7L1402.5 243.7L1404.0 248.1L1405.3 252.4Z" fill="#fedd1a" stroke="#fedd1a" stroke-width=".7"/><path d="M1463.6 281.1L1464.6 279.3L1466.5 278.7L1469.2 279.6L1470.2 276.8L1471.5 277.4L1474.1 277.3L1475.4 278.7L1478.3 278.4L1480.9 279.6L1482.6 279.6L1485.1 277.9L1487.7 278.2L1488.5 281.0L1490.9 281.1L1493.2 282.1L1491.3 282.4L1489.3 285.1L1488.6 287.0L1488.4 288.4L1485.8 288.8L1484.1 290.0L1479.3 289.0L1475.5 289.0L1473.6 287.1L1471.4 286.3L1468.8 286.0L1467.1 283.2L1464.2 282.0Z" fill="#545454" stroke="#545454" stroke-width=".7"/><path d="M1506.6 287.0L1506.4 286.2L1504.4 283.4L1506.1 282.9L1503.9 278.5L1501.7 279.7L1499.5 278.1L1496.4 277.0L1492.4 273.6L1490.4 273.3L1487.8 273.3L1487.4 274.5L1488.4 276.9L1488.6 278.4L1487.7 278.2L1488.5 281.0L1490.9 281.1L1493.2 282.1L1491.3 282.4L1489.3 285.1L1488.6 287.0L1488.4 288.4L1485.8 288.8L1484.1 290.0L1479.3 289.0L1475.5 289.0L1473.6 287.1L1471.4 286.3L1468.8 286.0L1467.1 283.2L1464.2 282.0L1463.2 281.3L1462.9 284.0L1460.8 284.3L1461.3 286.5L1459.7 287.0L1460.9 290.7L1459.8 292.1L1457.8 293.3L1456.1 294.6L1457.5 295.9L1458.0 297.4L1459.0 298.5L1461.6 299.7L1463.9 301.6L1463.5 303.6L1464.5 305.6L1466.8 306.6L1469.7 307.8L1472.0 308.9L1474.7 309.4L1475.6 308.9L1478.7 309.3L1481.3 307.6L1483.9 308.5L1486.2 312.2L1485.9 314.2L1487.9 316.8L1490.8 317.9L1490.9 316.2L1492.8 315.7L1495.7 316.0L1497.4 317.2L1502.7 321.9L1505.7 318.5L1508.5 315.0L1511.2 311.5L1509.6 307.0L1507.8 302.4L1505.8 297.9L1503.6 293.5L1502.9 290.9L1503.5 289.2L1504.8 288.2L1505.4 286.9Z" fill="#ee6520" stroke="#ee6520" stroke-width=".7"/><path d="M1455.7 315.5L1458.4 314.5L1457.4 311.9L1456.2 311.0L1457.5 309.9L1458.4 307.2L1460.1 305.8L1459.6 303.8L1458.5 301.8L1459.6 300.4L1461.6 299.7L1463.9 301.6L1463.5 303.6L1464.5 305.6L1466.8 306.6L1466.6 308.6L1470.3 310.2L1472.0 311.0L1475.4 311.2L1474.7 309.4L1476.0 310.7L1479.1 310.7L1478.7 309.3L1481.3 307.6L1483.9 308.5L1482.5 310.9L1482.4 314.7L1481.9 316.7L1480.6 315.1L1480.3 313.4L1477.2 311.9L1476.0 313.9L1477.6 317.3L1476.6 321.9L1475.5 326.6L1474.1 331.2L1472.6 335.8L1471.0 340.4L1467.5 336.4L1464.0 332.4L1460.5 328.5L1456.8 324.6L1453.2 320.6Z" fill="#ee6520" stroke="#ee6520" stroke-width=".7"/><path d="M1466.6 308.6L1466.8 306.6L1469.7 307.8L1472.0 308.9L1474.7 309.4L1475.4 311.2L1472.0 311.0L1470.3 310.2Z" fill="#545454" stroke="#545454" stroke-width=".7"/><path d="M1448.6 313.9L1449.0 310.8L1449.3 308.1L1448.5 308.3L1452.4 307.5L1453.0 305.6L1454.8 304.9L1455.3 302.9L1455.6 301.3L1455.2 299.0L1457.8 297.8L1459.0 298.5L1461.6 299.7L1459.6 300.4L1458.5 301.8L1459.6 303.8L1460.1 305.8L1458.4 307.2L1457.5 309.9L1456.2 311.0L1457.4 311.9L1458.4 314.5L1455.7 315.5L1451.9 318.1L1448.0 320.7Z" fill="#2db37b" stroke="#2db37b" stroke-width=".7"/><path d="M1427.7 295.7L1428.4 295.3L1432.2 296.8L1432.7 296.8L1437.9 298.2L1440.6 297.2L1443.2 297.8L1444.9 298.9L1445.5 300.6L1445.4 303.0L1446.3 305.6L1447.2 305.8L1446.8 307.8L1448.5 308.3L1449.3 308.1L1449.0 310.8L1448.6 313.9L1444.9 313.8L1443.2 312.7L1440.5 312.3L1437.9 311.5L1436.0 309.2L1434.3 308.0L1433.6 307.2L1433.2 306.6L1433.0 304.6L1431.1 303.8L1430.3 302.1L1430.3 300.4L1429.1 298.4L1428.2 297.7Z" fill="#73cf97" stroke="#73cf97" stroke-width=".7"/><path d="M1420.6 308.8L1422.2 308.8L1423.4 306.4L1424.3 305.5L1425.7 305.6L1427.5 306.6L1430.6 309.0L1432.4 309.1L1433.4 309.2L1434.4 309.8L1436.4 311.8L1438.1 315.3L1438.5 315.4L1439.1 317.0L1442.4 317.3L1443.1 318.2L1442.7 320.8L1439.7 322.2L1436.7 322.8L1434.7 324.9L1434.2 324.5L1431.5 324.4L1430.8 324.3L1430.4 325.7L1427.5 327.6L1424.8 322.8L1421.9 318.1L1419.1 313.4Z" fill="#ee6520" stroke="#ee6520" stroke-width=".7"/><path d="M1423.9 303.7L1425.9 302.3L1425.7 299.6L1426.5 298.6L1428.2 297.7L1429.1 298.4L1430.3 300.4L1430.3 302.1L1431.1 303.8L1433.0 304.6L1433.2 306.6L1433.6 307.2L1433.4 309.2L1432.4 309.1L1430.6 309.0L1427.5 306.6L1425.7 305.6L1424.3 305.5Z" fill="#ee6520" stroke="#ee6520" stroke-width=".7"/><path d="M1481.4 318.9L1481.1 317.8L1481.9 316.7L1482.4 314.7L1482.5 310.9L1483.9 308.5L1486.2 312.2L1485.9 314.2L1487.9 316.8L1489.6 317.5L1489.6 319.1L1487.6 320.1L1487.5 322.4L1489.1 324.7L1489.4 327.2L1491.0 330.6L1490.4 333.4L1490.1 334.1L1485.6 333.8L1481.2 333.5L1480.7 329.0L1480.0 324.5L1479.2 320.0Z" fill="#545454" stroke="#545454" stroke-width=".7"/><path d="M1489.6 319.1L1487.6 320.1L1487.5 322.4L1489.1 324.7L1489.4 327.2L1491.0 330.6L1490.4 333.4L1490.1 334.1L1490.5 336.8L1492.5 338.3L1493.5 339.3L1494.5 338.6L1496.1 333.3L1494.6 331.1L1493.6 328.5L1494.4 327.3L1496.5 327.3L1496.6 325.2L1495.5 324.1L1494.4 322.3L1492.9 322.4L1491.5 323.0L1490.7 320.3Z" fill="#ee6520" stroke="#ee6520" stroke-width=".7"/><path d="M1490.9 316.2L1492.8 315.7L1495.7 316.0L1497.4 317.2L1502.7 321.9L1502.7 327.5L1502.5 333.1L1497.4 336.0L1496.5 332.6L1497.1 332.0L1498.1 330.9L1499.4 329.7L1498.9 326.9L1498.7 324.8L1497.3 323.8L1495.8 321.7L1494.0 320.4L1493.8 318.8L1492.0 317.4Z" fill="#fedd1a" stroke="#fedd1a" stroke-width=".7"/><path d="M1492.5 338.3L1493.5 339.3L1494.5 338.6L1497.9 344.4L1495.8 348.5L1491.4 343.0L1490.5 336.8Z" fill="#ee6520" stroke="#ee6520" stroke-width=".7"/><path d="M1506.3 293.6L1507.7 292.2L1509.6 292.9L1512.2 298.5L1507.9 298.8L1505.9 294.0Z" fill="#ee6520" stroke="#ee6520" stroke-width=".7"/><path d="M1410.3 306.2L1410.7 310.4L1411.0 314.5L1411.2 318.6L1415.4 318.6L1419.5 318.6L1423.6 318.5L1421.9 315.9L1420.6 308.8L1419.6 306.5L1415.2 304.3Z" fill="#dc172a" stroke="#dc172a" stroke-width=".7"/><path d="M1379.4 300.8L1383.0 301.8L1383.5 303.9L1383.2 305.6L1381.5 306.9L1380.1 308.4L1376.4 310.1L1376.3 313.6L1372.9 313.6L1372.8 316.8L1371.6 317.7L1371.7 319.6L1367.4 320.0L1363.4 317.4L1359.4 314.8L1362.7 311.7L1366.0 308.6L1369.2 305.5L1372.3 302.4L1375.4 299.4Z" fill="#dc172a" stroke="#dc172a" stroke-width=".7"/><path d="M1388.1 339.0L1388.1 335.5L1389.0 332.0L1389.5 329.7L1391.6 329.5L1394.8 330.6L1398.5 330.2L1399.6 329.4L1400.6 331.0L1400.3 332.9L1399.4 335.5L1398.3 336.8L1397.8 338.1L1396.4 338.2L1395.6 340.0L1394.4 341.2L1390.6 344.6L1388.1 344.6Z" fill="#ee6520" stroke="#ee6520" stroke-width=".7"/><path d="M1381.8 340.7L1382.1 338.1L1382.4 336.6L1382.2 332.9L1385.1 332.8L1385.6 334.9L1385.7 336.8L1386.5 339.3L1386.5 343.3L1381.8 343.3Z" fill="#dc172a" stroke="#dc172a" stroke-width=".7"/><path d="M1408.6 364.0L1410.7 364.0L1410.8 361.4L1412.4 361.8L1414.5 362.5L1415.5 363.4L1416.5 364.4L1416.9 363.0L1416.3 360.8L1415.8 358.2L1418.1 357.9L1420.4 359.5L1420.6 363.3L1419.8 365.3L1417.1 367.4L1415.3 368.6L1413.6 370.4L1411.7 370.2L1409.8 369.9L1408.4 368.1Z" fill="#dc172a" stroke="#dc172a" stroke-width=".7"/><path d="M1402.0 384.1L1405.6 383.9L1405.8 379.2L1408.9 379.9L1411.6 380.2L1413.2 377.7L1415.8 376.0L1417.7 376.2L1418.3 378.3L1418.1 380.8L1418.9 382.1L1419.4 387.4L1419.8 392.6L1416.5 392.8L1413.2 393.0L1409.9 393.1L1406.6 393.3L1403.3 393.5L1400.0 393.7L1398.8 388.5L1397.5 383.3Z" fill="#ee6520" stroke="#ee6520" stroke-width=".7"/><path d="M1412.6 385.5L1413.7 384.2L1415.1 384.8L1414.7 386.3L1413.5 386.8L1412.7 386.3Z" fill="#545454" stroke="#545454" stroke-width=".7"/></g><path d="M1304.0 250.7L1308.2 247.5L1311.6 248.2L1315.0 250.7L1317.0 254.6L1315.0 256.0L1310.1 255.6L1306.2 254.6ZM1312.1 245.3L1316.0 243.8L1321.4 243.3L1322.4 245.8L1320.4 247.7L1316.0 248.2L1313.6 247.2ZM1323.3 243.3L1327.3 242.4L1331.2 243.3L1333.1 245.8L1335.6 247.7L1334.1 248.7L1328.2 248.2L1324.3 247.2ZM1331.2 241.9L1337.0 239.9L1342.9 239.2L1351.7 239.7L1345.3 242.8L1338.0 246.3L1335.6 247.7L1332.6 245.8ZM1318.4 250.2L1323.3 249.2L1325.8 250.7L1325.3 254.6L1323.3 257.0L1319.9 256.5L1317.5 253.6ZM1328.2 250.7L1334.6 250.7L1336.5 253.1L1339.0 258.0L1340.0 260.9L1336.1 263.9L1333.1 265.8L1331.2 267.3L1329.2 263.9L1331.7 260.4L1328.2 259.0L1326.3 256.5ZM1321.4 260.4L1325.3 259.5L1328.2 261.4L1325.8 263.4L1322.4 263.4Z" fill="#73cf97"/><path d="M1310.1 268.3L1312.6 264.9L1317.0 262.7L1321.4 262.4L1324.3 265.3L1323.3 270.2L1321.4 273.2L1318.4 274.6L1317.5 278.5L1315.5 278.1L1315.5 274.1L1311.6 271.7Z" fill="#343434"/><path d="M1301.4 284.1L1304.5 282.6L1306.1 281.6L1308.1 281.9L1308.0 284.3L1306.2 284.7L1305.1 283.6L1302.7 284.4ZM1302.4 290.6L1304.1 287.3L1305.4 285.5L1306.8 285.6L1305.6 287.7L1303.9 290.0ZM1307.5 285.7L1309.6 285.7L1310.9 286.6L1310.7 287.6L1309.1 288.0L1307.9 289.6L1307.4 288.2ZM1306.3 291.2L1308.6 290.0L1311.0 289.9L1310.9 290.4L1308.8 291.1L1306.9 291.7ZM1310.5 289.3L1313.4 288.5L1314.3 288.3L1313.6 289.3L1311.7 289.4Z" fill="#343434"/><path d="M1380.1 282.5L1382.1 282.2L1384.3 281.7L1386.5 281.1L1386.7 279.1L1385.5 278.2L1384.8 276.8L1383.8 275.4L1383.3 274.9L1383.7 272.9L1382.7 271.5L1381.1 271.5L1380.0 272.9L1380.5 274.5L1380.9 276.1L1382.4 276.3L1382.6 277.6L1382.5 278.3L1381.2 279.0L1381.5 279.6L1380.7 280.4L1382.1 280.8L1381.2 281.1Z" fill="#fedd1a"/><path d="M1379.9 279.8L1379.8 277.6L1380.5 276.8L1379.9 275.9L1378.8 275.7L1377.8 276.6L1376.6 277.2L1376.7 278.4L1376.8 279.4L1376.1 280.3L1377.9 280.5Z" fill="#ee6520"/><path d="M1368.2 264.4L1367.0 262.4L1368.4 261.3L1371.7 261.6L1374.3 261.5L1374.9 262.9L1373.6 264.1L1370.8 265.2L1368.1 264.6Z" fill="#2db37b"/><path d="M1341.5 245.3L1344.5 244.2L1347.4 243.1L1350.0 241.9L1352.5 240.7L1354.2 240.6L1355.9 240.5L1357.6 240.4L1359.3 240.3L1361.0 240.2L1362.9 240.0L1364.7 239.7L1366.6 239.5L1368.4 239.2L1370.0 239.7L1371.6 240.1L1373.3 240.6L1375.0 241.0L1376.7 241.5L1378.5 241.9L1375.9 244.2L1373.1 246.4L1373.8 249.0L1371.0 253.4L1369.7 256.3L1366.4 258.5L1364.1 258.8L1361.8 259.1L1357.3 261.8L1354.2 263.4L1350.3 269.1L1346.8 267.7L1346.1 264.4L1346.3 261.1L1346.6 257.9L1348.6 255.4L1348.2 252.8L1348.4 248.9L1346.2 248.3L1344.0 247.8L1342.7 246.6Z" fill="#545454"/><path d="M1391.8 245.8L1394.5 243.8L1397.7 244.1L1401.0 244.4L1399.1 246.0L1397.0 247.7L1395.1 247.4L1393.2 247.1Z" fill="#fedd1a"/><path d="M1420.9 254.1L1422.6 252.1L1423.3 248.8L1425.2 247.9L1427.1 247.0L1426.2 249.3L1425.3 251.3L1424.3 253.3L1423.6 255.3Z" fill="#fedd1a"/><path d="M1439.2 243.5L1439.8 242.2L1440.3 240.9L1445.7 243.0L1444.1 243.1L1442.5 243.2L1440.8 243.4Z" fill="#fedd1a"/><path d="M1468.4 245.2L1470.2 244.4L1472.4 244.6L1474.6 244.7L1473.2 245.4L1471.7 246.1Z" fill="#fedd1a"/><path d="M1296.9 317.6L1299.7 316.6L1302.4 316.1L1304.6 317.9L1307.7 320.2L1304.2 320.5L1303.5 318.3L1301.1 317.6L1298.5 317.2Z" fill="#545454"/><path d="M1307.1 322.4L1309.1 320.6L1312.0 320.9L1313.4 322.4L1311.2 322.9L1309.1 323.0Z" fill="#545454"/><path d="M1437.7 362.9L1438.6 367.5L1437.3 370.1L1435.1 376.0L1433.7 379.6L1431.6 380.5L1430.5 377.8L1430.3 375.2L1431.8 371.3L1431.6 369.4L1434.4 367.4L1436.1 364.8Z" fill="#545454"/><path d="M1470.3 334.0L1472.8 337.0L1472.3 338.8L1470.9 339.1L1470.4 336.1Z" fill="#545454"/><path d="M1513.5 298.4L1513.9 296.3L1516.5 295.6L1516.6 293.4L1517.8 291.3L1516.4 288.5L1517.0 287.2L1519.1 289.7L1520.7 293.9L1521.2 296.1L1520.1 296.7L1518.7 297.1L1517.7 298.3L1515.2 297.8Z" fill="#ee6520"/><path d="M1512.7 299.1L1514.5 298.4L1515.8 301.8L1514.8 302.3Z" fill="#ee6520"/><path d="M1515.7 299.6L1516.8 297.7L1517.3 298.9Z" fill="#ee6520"/><path d="M1515.5 287.1L1512.8 281.7L1517.6 283.1L1518.5 284.2L1518.0 286.1L1514.9 285.7Z" fill="#ee6520"/><path d="M1512.6 280.8L1510.4 276.6L1503.4 269.8L1507.0 274.1L1510.3 278.1Z" fill="#fedd1a"/><path d="M1509.3 314.5L1509.1 311.4L1510.1 311.7L1510.3 315.9Z" fill="#ee6520"/><path d="M1498.8 320.4L1500.4 319.0L1501.1 319.7L1500.0 321.7Z" fill="#ee6520"/><path d="M1510.8 320.9L1513.1 320.8L1514.3 324.3L1516.7 328.5L1513.8 327.5L1512.7 326.5L1511.3 324.0Z" fill="#73cf97"/><path d="M1515.7 337.1L1517.6 334.9L1519.0 333.0L1520.5 337.1L1519.6 338.8L1517.9 337.4Z" fill="#73cf97"/><path d="M1516.2 332.1L1518.6 330.6L1516.8 329.2L1514.9 330.7Z" fill="#73cf97"/><path d="M1510.4 335.4L1512.6 331.5L1511.6 333.7Z" fill="#73cf97"/><path d="M1502.2 345.1L1502.8 344.3L1504.4 345.0L1506.4 342.6L1508.9 339.4L1510.4 337.2L1512.7 339.8L1511.7 340.9L1511.5 345.4L1512.7 345.7L1510.3 348.6L1509.9 352.1L1508.0 352.8L1505.4 351.6L1503.8 351.4L1502.9 349.3Z" fill="#ee6520"/><path d="M1487.3 339.5L1489.7 340.0L1492.8 343.3L1496.5 345.8L1497.4 349.2L1498.9 351.7L1498.5 355.2L1497.1 355.3L1494.9 352.7L1493.1 349.2L1491.0 344.8L1488.7 342.1Z" fill="#ee6520"/><path d="M1497.8 356.6L1499.3 355.5L1503.4 356.8L1505.7 356.9L1507.6 358.0L1507.4 359.4L1503.3 358.6L1499.1 357.6Z" fill="#ee6520"/><path d="M1508.6 358.7L1512.3 359.0L1516.1 358.9L1516.3 359.6L1512.2 360.0L1509.0 359.9Z" fill="#ee6520"/><path d="M1517.5 360.5L1521.2 359.3L1518.4 361.8L1516.8 361.9Z" fill="#ee6520"/><path d="M1513.2 355.0L1513.2 352.1L1512.7 351.1L1513.8 346.9L1514.6 346.0L1519.3 344.8L1517.8 346.4L1514.6 346.4L1515.6 348.6L1517.7 348.6L1516.1 351.4L1517.0 353.9L1515.4 354.0L1514.5 351.1L1514.2 355.0Z" fill="#ee6520"/><path d="M1522.1 344.5L1523.5 345.7L1522.6 348.3L1521.9 346.9Z" fill="#ee6520"/><path d="M1522.5 351.5L1525.2 351.7L1525.5 352.7L1522.8 352.4Z" fill="#ee6520"/><path d="M1525.8 349.0L1529.1 348.5L1530.6 352.1L1533.3 349.5L1536.5 351.0L1540.2 352.8L1541.6 355.1L1543.1 356.4L1542.3 358.9L1543.6 360.8L1544.9 362.8L1542.3 362.4L1541.2 359.2L1538.5 359.4L1537.7 360.9L1535.6 360.7L1533.7 359.1L1532.8 355.3L1529.9 353.6L1527.6 353.1L1526.8 351.2L1528.5 350.5Z" fill="#545454"/><path d="M1544.3 355.5L1546.4 355.5L1548.4 353.6L1547.8 355.1L1545.9 356.7L1544.2 356.4Z" fill="#545454"/><path d="M1551.1 356.4L1553.0 358.7L1555.8 361.2L1557.1 362.8L1554.5 362.4L1551.9 358.7Z" fill="#545454"/><path d="M1502.8 378.0L1503.6 377.8L1506.7 376.2L1509.3 375.5L1511.5 374.9L1513.7 371.4L1515.1 370.8L1517.3 368.0L1519.6 367.0L1521.4 368.8L1523.1 366.0L1524.3 364.9L1526.0 363.9L1527.5 364.7L1529.6 364.8L1530.4 365.2L1528.2 369.1L1531.4 373.0L1532.8 373.1L1535.2 366.5L1536.8 363.1L1536.9 368.0L1538.4 369.6L1537.7 374.8L1539.2 379.5L1540.1 382.6L1540.8 385.7L1539.1 390.3L1536.7 393.8L1534.1 396.6L1530.5 400.0L1528.0 402.7L1526.1 402.9L1523.3 404.6L1522.6 403.1L1519.4 402.7L1519.1 400.9L1520.1 398.8L1519.4 398.7L1520.2 396.6L1520.7 395.1L1519.3 397.2L1517.3 397.6L1518.1 394.9L1517.5 394.1L1515.3 392.5L1512.1 392.9L1507.6 394.0L1506.5 395.3L1502.9 395.1L1500.6 396.3L1498.2 395.3L1499.3 393.8L1500.3 392.0L1500.6 389.2L1501.2 385.0L1500.8 383.9L1502.1 381.5Z" fill="#dc172a"/><path d="M1520.3 406.6L1523.3 407.3L1521.3 409.4L1519.3 410.8L1518.6 410.6L1519.3 408.7Z" fill="#dc172a"/><path d="M1551.4 401.1L1551.4 403.4L1550.6 406.1L1552.6 406.8L1550.2 408.8L1548.0 410.1L1544.9 411.8L1544.9 411.2L1547.4 408.8L1546.7 408.4L1550.1 405.2L1550.8 402.3Z" fill="#dc172a"/><path d="M1544.3 409.9L1544.0 411.8L1541.9 413.2L1540.1 414.5L1538.0 415.1L1535.4 417.0L1533.3 417.7L1532.2 416.6L1534.6 415.1L1537.9 413.6L1541.7 411.5Z" fill="#dc172a"/><path d="M1397.3 297.9L1400.4 297.6L1400.0 299.7L1397.5 298.6Z" fill="#fedd1a"/><path d="M1393.1 294.2L1394.6 293.9L1394.5 296.7L1393.3 296.8Z" fill="#fedd1a"/><path d="M1393.3 291.8L1394.1 291.6L1394.3 293.6L1393.6 293.6Z" fill="#fedd1a"/><path d="M1408.4 301.1L1411.2 301.4L1409.5 301.9Z" fill="#fedd1a"/><path d="M1417.1 301.6L1419.3 300.8L1418.9 302.2L1417.5 302.1Z" fill="#fedd1a"/><path d="M1525.8 349.0L1529.1 348.5L1530.6 352.1L1533.3 349.5L1536.5 351.0L1536.2 355.8L1535.6 360.7L1533.7 359.1L1532.8 355.3L1529.9 353.6L1527.6 353.1L1526.8 351.2L1528.5 350.5Z" fill="#ee6520"/></svg>
</body></html>
